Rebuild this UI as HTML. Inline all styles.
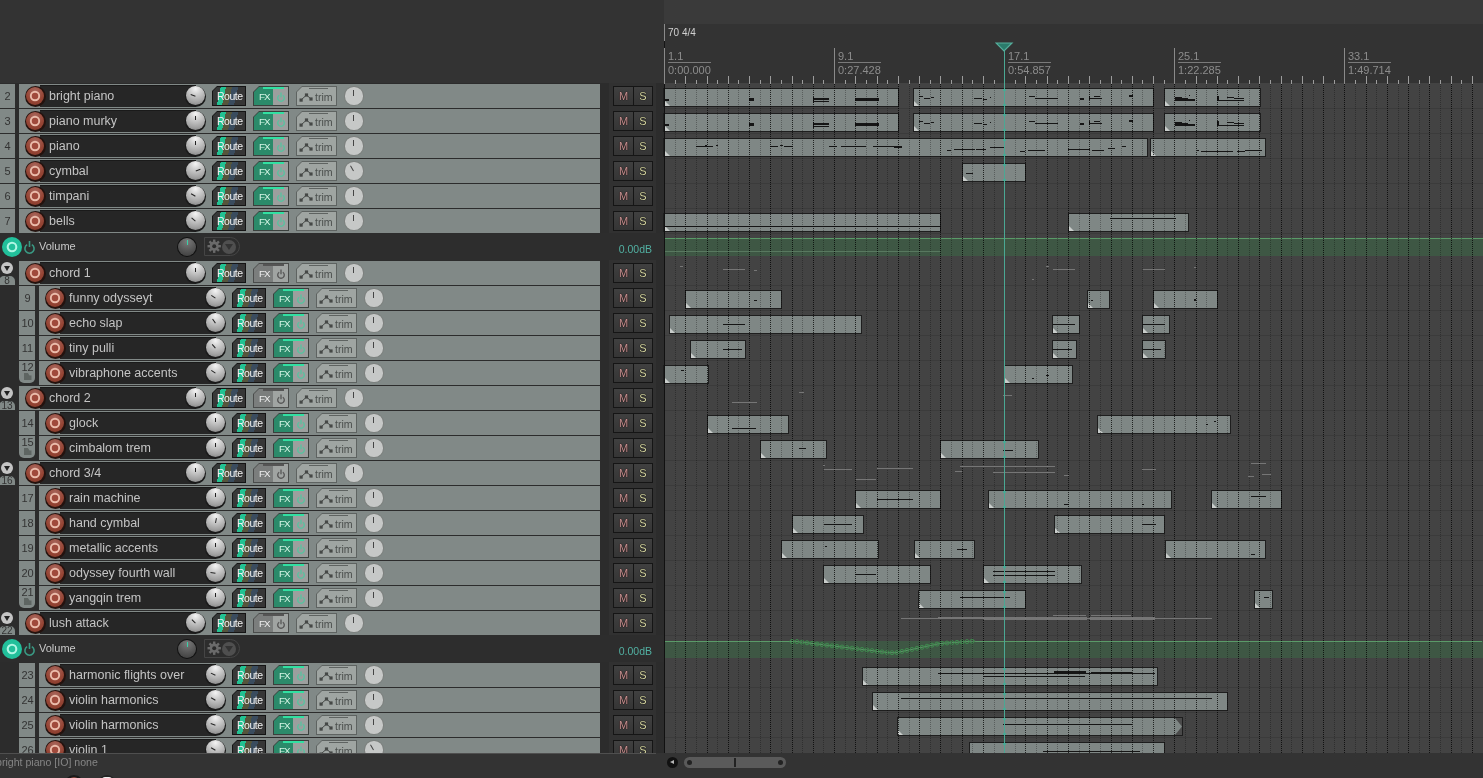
<!DOCTYPE html><html><head><meta charset="utf-8"><style>
*{margin:0;padding:0;box-sizing:border-box}
body{width:1483px;height:778px;overflow:hidden;background:#333;font-family:"Liberation Sans",sans-serif;position:relative}
div{position:absolute}
.t{white-space:nowrap;line-height:1;will-change:transform}
</style></head><body>
<div style="left:664px;top:0;width:819px;height:24px;background:#3a3a3a"></div>
<div style="left:0;top:83px;width:664px;height:670px;background:#2c2c2c"></div>
<div style="left:-1px;top:84px;width:16px;height:24px;background:#818987"></div>
<div style="left:19px;top:84px;width:581px;height:24px;background:#818987"></div>
<div style="left:40px;top:85px;width:156px;height:22px;background:#262626;border-top:1px solid #1a1a1a"></div>
<div style="left:24.5px;top:85.5px;width:21px;height:21px;border-radius:50%;background:#24120e"></div>
<div style="left:26px;top:87px;width:18px;height:18px;border-radius:50%;background:radial-gradient(circle at 50% 25%,#a8685e,#974636 55%,#843828)"></div>
<svg style="position:absolute;left:29px;top:90px" width="12" height="12"><circle cx="6" cy="6" r="4.2" fill="#a04a3c" stroke="#ebbcab" stroke-width="1.9"/></svg>
<div class="t" style="left:49px;top:90.2px;font-size:12.5px;color:#c4c4c4">bright piano</div>
<div style="left:185.0px;top:85.5px;width:21px;height:21px;border-radius:50%;background:#1a1a1a"></div>
<div style="left:186.0px;top:86.2px;width:19px;height:19px;border-radius:50%;background:radial-gradient(circle at 50% 15%,#f4f4f4 0,#cfcfcf 30%,#a4a4a4 70%,#7c7c7c 100%)"></div>
<div style="left:194.85px;top:90.8px;width:1.3px;height:4.6px;background:#222;transform-origin:0.65px 5.2px;transform:rotate(-70deg)"></div>
<div style="left:212px;top:86px;width:34px;height:20px;background:#141414;clip-path:polygon(5px 0,100% 0,100% 100%,0 100%,0 5px)"></div>
<div style="left:213px;top:87px;width:32px;height:18px;background:linear-gradient(102.5deg,#363838 0 7.6px,#22c292 7.6px 12.7px,#55553c 12.7px 18.5px,#3a4c5e 18.5px 24.5px,#363636 24.5px);clip-path:polygon(4px 0,100% 0,100% 100%,0 100%,0 4px)"></div>
<div class="t" style="left:216.5px;top:91.3px;font-size:10.5px;letter-spacing:-0.5px;color:#f2f2f2">Route</div>
<div style="left:253px;top:86px;width:36px;height:20px;background:#3a403d;clip-path:polygon(6px 0,100% 0,100% 100%,0 100%,0 6px)"></div>
<div style="left:254px;top:87px;width:34px;height:18px;background:linear-gradient(90deg,#2b8a6a 0 19px,#9c9f9e 19px);clip-path:polygon(5px 0,100% 0,100% 100%,0 100%,0 5px)"></div>
<div style="left:263px;top:87px;width:21px;height:1.6px;background:#32e0a2"></div>
<div class="t" style="left:259px;top:92.3px;font-size:9.8px;letter-spacing:-1px;color:#d6f6e6">FX</div>
<svg style="position:absolute;left:276px;top:91px" width="10" height="11"><path d="M3.2,4.2 A3.3,3.3 0 1,0 6.8,4.2" fill="none" stroke="#56c4a0" stroke-width="1.3"/><line x1="5" y1="1.5" x2="5" y2="6.2" stroke="#56c4a0" stroke-width="1.3"/></svg>
<div style="left:296px;top:86px;width:41px;height:20px;background:#5e6361;clip-path:polygon(6px 0,100% 0,100% 100%,0 100%,0 6px)"></div>
<div style="left:297px;top:87px;width:39px;height:18px;background:#9fa5a2;clip-path:polygon(5px 0,100% 0,100% 100%,0 100%,0 5px)"></div>
<div style="left:309px;top:87.5px;width:19px;height:1.5px;background:#5e6361"></div>
<svg style="position:absolute;left:299px;top:93px" width="14" height="9"><polyline points="2,7 7.5,2 12,6" fill="none" stroke="#454846" stroke-width="1"/><rect x="0.5" y="5.5" width="3.2" height="3.2" fill="#454846"/><rect x="5.9" y="0.4" width="3.2" height="3.2" fill="#454846"/><rect x="10.4" y="4.4" width="3.2" height="3.2" fill="#454846"/></svg>
<div class="t" style="left:315px;top:92px;font-size:10.6px;color:#4a4e4c">trim</div>
<div style="left:344.3px;top:86.3px;width:19.4px;height:19.4px;border-radius:50%;background:#7c807e"></div>
<div style="left:345.3px;top:87.3px;width:17.4px;height:17.4px;border-radius:50%;background:#c6c8c7"></div>
<div style="left:353.4px;top:90px;width:1px;height:5.5px;background:#444;transform-origin:0.5px 6px;transform:rotate(0deg)"></div>
<div class="t" style="left:-1px;top:90.6px;width:17px;text-align:center;font-size:11px;color:#333">2</div>
<div style="left:609px;top:83px;width:47px;height:25px;background:#313131"></div>
<div style="left:613px;top:86px;width:40px;height:20px;background:#151515"></div>
<div style="left:614px;top:87px;width:19px;height:18px;background:linear-gradient(#404040,#353535)"></div>
<div style="left:634px;top:87px;width:18px;height:18px;background:linear-gradient(#404040,#353535)"></div>
<div class="t" style="left:614px;top:91px;width:19px;text-align:center;font-size:11px;color:#c49090;text-shadow:0 0 1px #1a0a0a,0 0 1px #1a0a0a">M</div>
<div class="t" style="left:634px;top:91px;width:18px;text-align:center;font-size:11px;color:#d4d4a2;text-shadow:0 0 1px #0a0a00,0 0 1px #0a0a00">S</div>
<div style="left:-1px;top:109px;width:16px;height:24px;background:#818987"></div>
<div style="left:19px;top:109px;width:581px;height:24px;background:#818987"></div>
<div style="left:40px;top:110px;width:156px;height:22px;background:#262626;border-top:1px solid #1a1a1a"></div>
<div style="left:24.5px;top:110.5px;width:21px;height:21px;border-radius:50%;background:#24120e"></div>
<div style="left:26px;top:112px;width:18px;height:18px;border-radius:50%;background:radial-gradient(circle at 50% 25%,#a8685e,#974636 55%,#843828)"></div>
<svg style="position:absolute;left:29px;top:115px" width="12" height="12"><circle cx="6" cy="6" r="4.2" fill="#a04a3c" stroke="#ebbcab" stroke-width="1.9"/></svg>
<div class="t" style="left:49px;top:115.2px;font-size:12.5px;color:#c4c4c4">piano murky</div>
<div style="left:185.0px;top:110.5px;width:21px;height:21px;border-radius:50%;background:#1a1a1a"></div>
<div style="left:186.0px;top:111.2px;width:19px;height:19px;border-radius:50%;background:radial-gradient(circle at 50% 15%,#f4f4f4 0,#cfcfcf 30%,#a4a4a4 70%,#7c7c7c 100%)"></div>
<div style="left:194.85px;top:115.8px;width:1.3px;height:4.6px;background:#222;transform-origin:0.65px 5.2px;transform:rotate(0deg)"></div>
<div style="left:212px;top:111px;width:34px;height:20px;background:#141414;clip-path:polygon(5px 0,100% 0,100% 100%,0 100%,0 5px)"></div>
<div style="left:213px;top:112px;width:32px;height:18px;background:linear-gradient(102.5deg,#363838 0 7.6px,#22c292 7.6px 12.7px,#55553c 12.7px 18.5px,#3a4c5e 18.5px 24.5px,#363636 24.5px);clip-path:polygon(4px 0,100% 0,100% 100%,0 100%,0 4px)"></div>
<div class="t" style="left:216.5px;top:116.3px;font-size:10.5px;letter-spacing:-0.5px;color:#f2f2f2">Route</div>
<div style="left:253px;top:111px;width:36px;height:20px;background:#3a403d;clip-path:polygon(6px 0,100% 0,100% 100%,0 100%,0 6px)"></div>
<div style="left:254px;top:112px;width:34px;height:18px;background:linear-gradient(90deg,#2b8a6a 0 19px,#9c9f9e 19px);clip-path:polygon(5px 0,100% 0,100% 100%,0 100%,0 5px)"></div>
<div style="left:263px;top:112px;width:21px;height:1.6px;background:#32e0a2"></div>
<div class="t" style="left:259px;top:117.3px;font-size:9.8px;letter-spacing:-1px;color:#d6f6e6">FX</div>
<svg style="position:absolute;left:276px;top:116px" width="10" height="11"><path d="M3.2,4.2 A3.3,3.3 0 1,0 6.8,4.2" fill="none" stroke="#56c4a0" stroke-width="1.3"/><line x1="5" y1="1.5" x2="5" y2="6.2" stroke="#56c4a0" stroke-width="1.3"/></svg>
<div style="left:296px;top:111px;width:41px;height:20px;background:#5e6361;clip-path:polygon(6px 0,100% 0,100% 100%,0 100%,0 6px)"></div>
<div style="left:297px;top:112px;width:39px;height:18px;background:#9fa5a2;clip-path:polygon(5px 0,100% 0,100% 100%,0 100%,0 5px)"></div>
<div style="left:309px;top:112.5px;width:19px;height:1.5px;background:#5e6361"></div>
<svg style="position:absolute;left:299px;top:118px" width="14" height="9"><polyline points="2,7 7.5,2 12,6" fill="none" stroke="#454846" stroke-width="1"/><rect x="0.5" y="5.5" width="3.2" height="3.2" fill="#454846"/><rect x="5.9" y="0.4" width="3.2" height="3.2" fill="#454846"/><rect x="10.4" y="4.4" width="3.2" height="3.2" fill="#454846"/></svg>
<div class="t" style="left:315px;top:117px;font-size:10.6px;color:#4a4e4c">trim</div>
<div style="left:344.3px;top:111.3px;width:19.4px;height:19.4px;border-radius:50%;background:#7c807e"></div>
<div style="left:345.3px;top:112.3px;width:17.4px;height:17.4px;border-radius:50%;background:#c6c8c7"></div>
<div style="left:353.4px;top:115px;width:1px;height:5.5px;background:#444;transform-origin:0.5px 6px;transform:rotate(0deg)"></div>
<div class="t" style="left:-1px;top:115.6px;width:17px;text-align:center;font-size:11px;color:#333">3</div>
<div style="left:609px;top:108px;width:47px;height:25px;background:#313131"></div>
<div style="left:613px;top:111px;width:40px;height:20px;background:#151515"></div>
<div style="left:614px;top:112px;width:19px;height:18px;background:linear-gradient(#404040,#353535)"></div>
<div style="left:634px;top:112px;width:18px;height:18px;background:linear-gradient(#404040,#353535)"></div>
<div class="t" style="left:614px;top:116px;width:19px;text-align:center;font-size:11px;color:#c49090;text-shadow:0 0 1px #1a0a0a,0 0 1px #1a0a0a">M</div>
<div class="t" style="left:634px;top:116px;width:18px;text-align:center;font-size:11px;color:#d4d4a2;text-shadow:0 0 1px #0a0a00,0 0 1px #0a0a00">S</div>
<div style="left:-1px;top:134px;width:16px;height:24px;background:#818987"></div>
<div style="left:19px;top:134px;width:581px;height:24px;background:#818987"></div>
<div style="left:40px;top:135px;width:156px;height:22px;background:#262626;border-top:1px solid #1a1a1a"></div>
<div style="left:24.5px;top:135.5px;width:21px;height:21px;border-radius:50%;background:#24120e"></div>
<div style="left:26px;top:137px;width:18px;height:18px;border-radius:50%;background:radial-gradient(circle at 50% 25%,#a8685e,#974636 55%,#843828)"></div>
<svg style="position:absolute;left:29px;top:140px" width="12" height="12"><circle cx="6" cy="6" r="4.2" fill="#a04a3c" stroke="#ebbcab" stroke-width="1.9"/></svg>
<div class="t" style="left:49px;top:140.2px;font-size:12.5px;color:#c4c4c4">piano</div>
<div style="left:185.0px;top:135.5px;width:21px;height:21px;border-radius:50%;background:#1a1a1a"></div>
<div style="left:186.0px;top:136.2px;width:19px;height:19px;border-radius:50%;background:radial-gradient(circle at 50% 15%,#f4f4f4 0,#cfcfcf 30%,#a4a4a4 70%,#7c7c7c 100%)"></div>
<div style="left:194.85px;top:140.8px;width:1.3px;height:4.6px;background:#222;transform-origin:0.65px 5.2px;transform:rotate(0deg)"></div>
<div style="left:212px;top:136px;width:34px;height:20px;background:#141414;clip-path:polygon(5px 0,100% 0,100% 100%,0 100%,0 5px)"></div>
<div style="left:213px;top:137px;width:32px;height:18px;background:linear-gradient(102.5deg,#363838 0 7.6px,#22c292 7.6px 12.7px,#55553c 12.7px 18.5px,#3a4c5e 18.5px 24.5px,#363636 24.5px);clip-path:polygon(4px 0,100% 0,100% 100%,0 100%,0 4px)"></div>
<div class="t" style="left:216.5px;top:141.3px;font-size:10.5px;letter-spacing:-0.5px;color:#f2f2f2">Route</div>
<div style="left:253px;top:136px;width:36px;height:20px;background:#3a403d;clip-path:polygon(6px 0,100% 0,100% 100%,0 100%,0 6px)"></div>
<div style="left:254px;top:137px;width:34px;height:18px;background:linear-gradient(90deg,#2b8a6a 0 19px,#9c9f9e 19px);clip-path:polygon(5px 0,100% 0,100% 100%,0 100%,0 5px)"></div>
<div style="left:263px;top:137px;width:21px;height:1.6px;background:#32e0a2"></div>
<div class="t" style="left:259px;top:142.3px;font-size:9.8px;letter-spacing:-1px;color:#d6f6e6">FX</div>
<svg style="position:absolute;left:276px;top:141px" width="10" height="11"><path d="M3.2,4.2 A3.3,3.3 0 1,0 6.8,4.2" fill="none" stroke="#56c4a0" stroke-width="1.3"/><line x1="5" y1="1.5" x2="5" y2="6.2" stroke="#56c4a0" stroke-width="1.3"/></svg>
<div style="left:296px;top:136px;width:41px;height:20px;background:#5e6361;clip-path:polygon(6px 0,100% 0,100% 100%,0 100%,0 6px)"></div>
<div style="left:297px;top:137px;width:39px;height:18px;background:#9fa5a2;clip-path:polygon(5px 0,100% 0,100% 100%,0 100%,0 5px)"></div>
<div style="left:309px;top:137.5px;width:19px;height:1.5px;background:#5e6361"></div>
<svg style="position:absolute;left:299px;top:143px" width="14" height="9"><polyline points="2,7 7.5,2 12,6" fill="none" stroke="#454846" stroke-width="1"/><rect x="0.5" y="5.5" width="3.2" height="3.2" fill="#454846"/><rect x="5.9" y="0.4" width="3.2" height="3.2" fill="#454846"/><rect x="10.4" y="4.4" width="3.2" height="3.2" fill="#454846"/></svg>
<div class="t" style="left:315px;top:142px;font-size:10.6px;color:#4a4e4c">trim</div>
<div style="left:344.3px;top:136.3px;width:19.4px;height:19.4px;border-radius:50%;background:#7c807e"></div>
<div style="left:345.3px;top:137.3px;width:17.4px;height:17.4px;border-radius:50%;background:#c6c8c7"></div>
<div style="left:353.4px;top:140px;width:1px;height:5.5px;background:#444;transform-origin:0.5px 6px;transform:rotate(0deg)"></div>
<div class="t" style="left:-1px;top:140.6px;width:17px;text-align:center;font-size:11px;color:#333">4</div>
<div style="left:609px;top:133px;width:47px;height:25px;background:#313131"></div>
<div style="left:613px;top:136px;width:40px;height:20px;background:#151515"></div>
<div style="left:614px;top:137px;width:19px;height:18px;background:linear-gradient(#404040,#353535)"></div>
<div style="left:634px;top:137px;width:18px;height:18px;background:linear-gradient(#404040,#353535)"></div>
<div class="t" style="left:614px;top:141px;width:19px;text-align:center;font-size:11px;color:#c49090;text-shadow:0 0 1px #1a0a0a,0 0 1px #1a0a0a">M</div>
<div class="t" style="left:634px;top:141px;width:18px;text-align:center;font-size:11px;color:#d4d4a2;text-shadow:0 0 1px #0a0a00,0 0 1px #0a0a00">S</div>
<div style="left:-1px;top:159px;width:16px;height:24px;background:#818987"></div>
<div style="left:19px;top:159px;width:581px;height:24px;background:#818987"></div>
<div style="left:40px;top:160px;width:156px;height:22px;background:#262626;border-top:1px solid #1a1a1a"></div>
<div style="left:24.5px;top:160.5px;width:21px;height:21px;border-radius:50%;background:#24120e"></div>
<div style="left:26px;top:162px;width:18px;height:18px;border-radius:50%;background:radial-gradient(circle at 50% 25%,#a8685e,#974636 55%,#843828)"></div>
<svg style="position:absolute;left:29px;top:165px" width="12" height="12"><circle cx="6" cy="6" r="4.2" fill="#a04a3c" stroke="#ebbcab" stroke-width="1.9"/></svg>
<div class="t" style="left:49px;top:165.2px;font-size:12.5px;color:#c4c4c4">cymbal</div>
<div style="left:185.0px;top:160.5px;width:21px;height:21px;border-radius:50%;background:#1a1a1a"></div>
<div style="left:186.0px;top:161.2px;width:19px;height:19px;border-radius:50%;background:radial-gradient(circle at 50% 15%,#f4f4f4 0,#cfcfcf 30%,#a4a4a4 70%,#7c7c7c 100%)"></div>
<div style="left:194.85px;top:165.8px;width:1.3px;height:4.6px;background:#222;transform-origin:0.65px 5.2px;transform:rotate(70deg)"></div>
<div style="left:212px;top:161px;width:34px;height:20px;background:#141414;clip-path:polygon(5px 0,100% 0,100% 100%,0 100%,0 5px)"></div>
<div style="left:213px;top:162px;width:32px;height:18px;background:linear-gradient(102.5deg,#363838 0 7.6px,#22c292 7.6px 12.7px,#55553c 12.7px 18.5px,#3a4c5e 18.5px 24.5px,#363636 24.5px);clip-path:polygon(4px 0,100% 0,100% 100%,0 100%,0 4px)"></div>
<div class="t" style="left:216.5px;top:166.3px;font-size:10.5px;letter-spacing:-0.5px;color:#f2f2f2">Route</div>
<div style="left:253px;top:161px;width:36px;height:20px;background:#3a403d;clip-path:polygon(6px 0,100% 0,100% 100%,0 100%,0 6px)"></div>
<div style="left:254px;top:162px;width:34px;height:18px;background:linear-gradient(90deg,#2b8a6a 0 19px,#9c9f9e 19px);clip-path:polygon(5px 0,100% 0,100% 100%,0 100%,0 5px)"></div>
<div style="left:263px;top:162px;width:21px;height:1.6px;background:#32e0a2"></div>
<div class="t" style="left:259px;top:167.3px;font-size:9.8px;letter-spacing:-1px;color:#d6f6e6">FX</div>
<svg style="position:absolute;left:276px;top:166px" width="10" height="11"><path d="M3.2,4.2 A3.3,3.3 0 1,0 6.8,4.2" fill="none" stroke="#56c4a0" stroke-width="1.3"/><line x1="5" y1="1.5" x2="5" y2="6.2" stroke="#56c4a0" stroke-width="1.3"/></svg>
<div style="left:296px;top:161px;width:41px;height:20px;background:#5e6361;clip-path:polygon(6px 0,100% 0,100% 100%,0 100%,0 6px)"></div>
<div style="left:297px;top:162px;width:39px;height:18px;background:#9fa5a2;clip-path:polygon(5px 0,100% 0,100% 100%,0 100%,0 5px)"></div>
<div style="left:309px;top:162.5px;width:19px;height:1.5px;background:#5e6361"></div>
<svg style="position:absolute;left:299px;top:168px" width="14" height="9"><polyline points="2,7 7.5,2 12,6" fill="none" stroke="#454846" stroke-width="1"/><rect x="0.5" y="5.5" width="3.2" height="3.2" fill="#454846"/><rect x="5.9" y="0.4" width="3.2" height="3.2" fill="#454846"/><rect x="10.4" y="4.4" width="3.2" height="3.2" fill="#454846"/></svg>
<div class="t" style="left:315px;top:167px;font-size:10.6px;color:#4a4e4c">trim</div>
<div style="left:344.3px;top:161.3px;width:19.4px;height:19.4px;border-radius:50%;background:#7c807e"></div>
<div style="left:345.3px;top:162.3px;width:17.4px;height:17.4px;border-radius:50%;background:#c6c8c7"></div>
<div style="left:353.4px;top:165px;width:1px;height:5.5px;background:#444;transform-origin:0.5px 6px;transform:rotate(-30deg)"></div>
<div class="t" style="left:-1px;top:165.6px;width:17px;text-align:center;font-size:11px;color:#333">5</div>
<div style="left:609px;top:158px;width:47px;height:25px;background:#313131"></div>
<div style="left:613px;top:161px;width:40px;height:20px;background:#151515"></div>
<div style="left:614px;top:162px;width:19px;height:18px;background:linear-gradient(#404040,#353535)"></div>
<div style="left:634px;top:162px;width:18px;height:18px;background:linear-gradient(#404040,#353535)"></div>
<div class="t" style="left:614px;top:166px;width:19px;text-align:center;font-size:11px;color:#c49090;text-shadow:0 0 1px #1a0a0a,0 0 1px #1a0a0a">M</div>
<div class="t" style="left:634px;top:166px;width:18px;text-align:center;font-size:11px;color:#d4d4a2;text-shadow:0 0 1px #0a0a00,0 0 1px #0a0a00">S</div>
<div style="left:-1px;top:184px;width:16px;height:24px;background:#818987"></div>
<div style="left:19px;top:184px;width:581px;height:24px;background:#818987"></div>
<div style="left:40px;top:185px;width:156px;height:22px;background:#262626;border-top:1px solid #1a1a1a"></div>
<div style="left:24.5px;top:185.5px;width:21px;height:21px;border-radius:50%;background:#24120e"></div>
<div style="left:26px;top:187px;width:18px;height:18px;border-radius:50%;background:radial-gradient(circle at 50% 25%,#a8685e,#974636 55%,#843828)"></div>
<svg style="position:absolute;left:29px;top:190px" width="12" height="12"><circle cx="6" cy="6" r="4.2" fill="#a04a3c" stroke="#ebbcab" stroke-width="1.9"/></svg>
<div class="t" style="left:49px;top:190.2px;font-size:12.5px;color:#c4c4c4">timpani</div>
<div style="left:185.0px;top:185.5px;width:21px;height:21px;border-radius:50%;background:#1a1a1a"></div>
<div style="left:186.0px;top:186.2px;width:19px;height:19px;border-radius:50%;background:radial-gradient(circle at 50% 15%,#f4f4f4 0,#cfcfcf 30%,#a4a4a4 70%,#7c7c7c 100%)"></div>
<div style="left:194.85px;top:190.8px;width:1.3px;height:4.6px;background:#222;transform-origin:0.65px 5.2px;transform:rotate(-60deg)"></div>
<div style="left:212px;top:186px;width:34px;height:20px;background:#141414;clip-path:polygon(5px 0,100% 0,100% 100%,0 100%,0 5px)"></div>
<div style="left:213px;top:187px;width:32px;height:18px;background:linear-gradient(102.5deg,#363838 0 7.6px,#22c292 7.6px 12.7px,#55553c 12.7px 18.5px,#3a4c5e 18.5px 24.5px,#363636 24.5px);clip-path:polygon(4px 0,100% 0,100% 100%,0 100%,0 4px)"></div>
<div class="t" style="left:216.5px;top:191.3px;font-size:10.5px;letter-spacing:-0.5px;color:#f2f2f2">Route</div>
<div style="left:253px;top:186px;width:36px;height:20px;background:#3a403d;clip-path:polygon(6px 0,100% 0,100% 100%,0 100%,0 6px)"></div>
<div style="left:254px;top:187px;width:34px;height:18px;background:linear-gradient(90deg,#2b8a6a 0 19px,#9c9f9e 19px);clip-path:polygon(5px 0,100% 0,100% 100%,0 100%,0 5px)"></div>
<div style="left:263px;top:187px;width:21px;height:1.6px;background:#32e0a2"></div>
<div class="t" style="left:259px;top:192.3px;font-size:9.8px;letter-spacing:-1px;color:#d6f6e6">FX</div>
<svg style="position:absolute;left:276px;top:191px" width="10" height="11"><path d="M3.2,4.2 A3.3,3.3 0 1,0 6.8,4.2" fill="none" stroke="#56c4a0" stroke-width="1.3"/><line x1="5" y1="1.5" x2="5" y2="6.2" stroke="#56c4a0" stroke-width="1.3"/></svg>
<div style="left:296px;top:186px;width:41px;height:20px;background:#5e6361;clip-path:polygon(6px 0,100% 0,100% 100%,0 100%,0 6px)"></div>
<div style="left:297px;top:187px;width:39px;height:18px;background:#9fa5a2;clip-path:polygon(5px 0,100% 0,100% 100%,0 100%,0 5px)"></div>
<div style="left:309px;top:187.5px;width:19px;height:1.5px;background:#5e6361"></div>
<svg style="position:absolute;left:299px;top:193px" width="14" height="9"><polyline points="2,7 7.5,2 12,6" fill="none" stroke="#454846" stroke-width="1"/><rect x="0.5" y="5.5" width="3.2" height="3.2" fill="#454846"/><rect x="5.9" y="0.4" width="3.2" height="3.2" fill="#454846"/><rect x="10.4" y="4.4" width="3.2" height="3.2" fill="#454846"/></svg>
<div class="t" style="left:315px;top:192px;font-size:10.6px;color:#4a4e4c">trim</div>
<div style="left:344.3px;top:186.3px;width:19.4px;height:19.4px;border-radius:50%;background:#7c807e"></div>
<div style="left:345.3px;top:187.3px;width:17.4px;height:17.4px;border-radius:50%;background:#c6c8c7"></div>
<div style="left:353.4px;top:190px;width:1px;height:5.5px;background:#444;transform-origin:0.5px 6px;transform:rotate(0deg)"></div>
<div class="t" style="left:-1px;top:190.6px;width:17px;text-align:center;font-size:11px;color:#333">6</div>
<div style="left:609px;top:183px;width:47px;height:25px;background:#313131"></div>
<div style="left:613px;top:186px;width:40px;height:20px;background:#151515"></div>
<div style="left:614px;top:187px;width:19px;height:18px;background:linear-gradient(#404040,#353535)"></div>
<div style="left:634px;top:187px;width:18px;height:18px;background:linear-gradient(#404040,#353535)"></div>
<div class="t" style="left:614px;top:191px;width:19px;text-align:center;font-size:11px;color:#c49090;text-shadow:0 0 1px #1a0a0a,0 0 1px #1a0a0a">M</div>
<div class="t" style="left:634px;top:191px;width:18px;text-align:center;font-size:11px;color:#d4d4a2;text-shadow:0 0 1px #0a0a00,0 0 1px #0a0a00">S</div>
<div style="left:-1px;top:209px;width:16px;height:24px;background:#818987"></div>
<div style="left:19px;top:209px;width:581px;height:24px;background:#818987"></div>
<div style="left:40px;top:210px;width:156px;height:22px;background:#262626;border-top:1px solid #1a1a1a"></div>
<div style="left:24.5px;top:210.5px;width:21px;height:21px;border-radius:50%;background:#24120e"></div>
<div style="left:26px;top:212px;width:18px;height:18px;border-radius:50%;background:radial-gradient(circle at 50% 25%,#a8685e,#974636 55%,#843828)"></div>
<svg style="position:absolute;left:29px;top:215px" width="12" height="12"><circle cx="6" cy="6" r="4.2" fill="#a04a3c" stroke="#ebbcab" stroke-width="1.9"/></svg>
<div class="t" style="left:49px;top:215.2px;font-size:12.5px;color:#c4c4c4">bells</div>
<div style="left:185.0px;top:210.5px;width:21px;height:21px;border-radius:50%;background:#1a1a1a"></div>
<div style="left:186.0px;top:211.2px;width:19px;height:19px;border-radius:50%;background:radial-gradient(circle at 50% 15%,#f4f4f4 0,#cfcfcf 30%,#a4a4a4 70%,#7c7c7c 100%)"></div>
<div style="left:194.85px;top:215.8px;width:1.3px;height:4.6px;background:#222;transform-origin:0.65px 5.2px;transform:rotate(-50deg)"></div>
<div style="left:212px;top:211px;width:34px;height:20px;background:#141414;clip-path:polygon(5px 0,100% 0,100% 100%,0 100%,0 5px)"></div>
<div style="left:213px;top:212px;width:32px;height:18px;background:linear-gradient(102.5deg,#363838 0 7.6px,#22c292 7.6px 12.7px,#55553c 12.7px 18.5px,#3a4c5e 18.5px 24.5px,#363636 24.5px);clip-path:polygon(4px 0,100% 0,100% 100%,0 100%,0 4px)"></div>
<div class="t" style="left:216.5px;top:216.3px;font-size:10.5px;letter-spacing:-0.5px;color:#f2f2f2">Route</div>
<div style="left:253px;top:211px;width:36px;height:20px;background:#3a403d;clip-path:polygon(6px 0,100% 0,100% 100%,0 100%,0 6px)"></div>
<div style="left:254px;top:212px;width:34px;height:18px;background:linear-gradient(90deg,#2b8a6a 0 19px,#9c9f9e 19px);clip-path:polygon(5px 0,100% 0,100% 100%,0 100%,0 5px)"></div>
<div style="left:263px;top:212px;width:21px;height:1.6px;background:#32e0a2"></div>
<div class="t" style="left:259px;top:217.3px;font-size:9.8px;letter-spacing:-1px;color:#d6f6e6">FX</div>
<svg style="position:absolute;left:276px;top:216px" width="10" height="11"><path d="M3.2,4.2 A3.3,3.3 0 1,0 6.8,4.2" fill="none" stroke="#56c4a0" stroke-width="1.3"/><line x1="5" y1="1.5" x2="5" y2="6.2" stroke="#56c4a0" stroke-width="1.3"/></svg>
<div style="left:296px;top:211px;width:41px;height:20px;background:#5e6361;clip-path:polygon(6px 0,100% 0,100% 100%,0 100%,0 6px)"></div>
<div style="left:297px;top:212px;width:39px;height:18px;background:#9fa5a2;clip-path:polygon(5px 0,100% 0,100% 100%,0 100%,0 5px)"></div>
<div style="left:309px;top:212.5px;width:19px;height:1.5px;background:#5e6361"></div>
<svg style="position:absolute;left:299px;top:218px" width="14" height="9"><polyline points="2,7 7.5,2 12,6" fill="none" stroke="#454846" stroke-width="1"/><rect x="0.5" y="5.5" width="3.2" height="3.2" fill="#454846"/><rect x="5.9" y="0.4" width="3.2" height="3.2" fill="#454846"/><rect x="10.4" y="4.4" width="3.2" height="3.2" fill="#454846"/></svg>
<div class="t" style="left:315px;top:217px;font-size:10.6px;color:#4a4e4c">trim</div>
<div style="left:344.3px;top:211.3px;width:19.4px;height:19.4px;border-radius:50%;background:#7c807e"></div>
<div style="left:345.3px;top:212.3px;width:17.4px;height:17.4px;border-radius:50%;background:#c6c8c7"></div>
<div style="left:353.4px;top:215px;width:1px;height:5.5px;background:#444;transform-origin:0.5px 6px;transform:rotate(0deg)"></div>
<div class="t" style="left:-1px;top:215.6px;width:17px;text-align:center;font-size:11px;color:#333">7</div>
<div style="left:609px;top:208px;width:47px;height:25px;background:#313131"></div>
<div style="left:613px;top:211px;width:40px;height:20px;background:#151515"></div>
<div style="left:614px;top:212px;width:19px;height:18px;background:linear-gradient(#404040,#353535)"></div>
<div style="left:634px;top:212px;width:18px;height:18px;background:linear-gradient(#404040,#353535)"></div>
<div class="t" style="left:614px;top:216px;width:19px;text-align:center;font-size:11px;color:#c49090;text-shadow:0 0 1px #1a0a0a,0 0 1px #1a0a0a">M</div>
<div class="t" style="left:634px;top:216px;width:18px;text-align:center;font-size:11px;color:#d4d4a2;text-shadow:0 0 1px #0a0a00,0 0 1px #0a0a00">S</div>
<div style="left:19px;top:261px;width:581px;height:24px;background:#818987"></div>
<div style="left:40px;top:262px;width:156px;height:22px;background:#262626;border-top:1px solid #1a1a1a"></div>
<div style="left:24.5px;top:262.5px;width:21px;height:21px;border-radius:50%;background:#24120e"></div>
<div style="left:26px;top:264px;width:18px;height:18px;border-radius:50%;background:radial-gradient(circle at 50% 25%,#a8685e,#974636 55%,#843828)"></div>
<svg style="position:absolute;left:29px;top:267px" width="12" height="12"><circle cx="6" cy="6" r="4.2" fill="#a04a3c" stroke="#ebbcab" stroke-width="1.9"/></svg>
<div class="t" style="left:49px;top:267.2px;font-size:12.5px;color:#c4c4c4">chord 1</div>
<div style="left:185.0px;top:262.5px;width:21px;height:21px;border-radius:50%;background:#1a1a1a"></div>
<div style="left:186.0px;top:263.2px;width:19px;height:19px;border-radius:50%;background:radial-gradient(circle at 50% 15%,#f4f4f4 0,#cfcfcf 30%,#a4a4a4 70%,#7c7c7c 100%)"></div>
<div style="left:194.85px;top:267.8px;width:1.3px;height:4.6px;background:#222;transform-origin:0.65px 5.2px;transform:rotate(0deg)"></div>
<div style="left:212px;top:263px;width:34px;height:20px;background:#141414;clip-path:polygon(5px 0,100% 0,100% 100%,0 100%,0 5px)"></div>
<div style="left:213px;top:264px;width:32px;height:18px;background:linear-gradient(102.5deg,#363838 0 7.6px,#22c292 7.6px 12.7px,#55553c 12.7px 18.5px,#3a4c5e 18.5px 24.5px,#363636 24.5px);clip-path:polygon(4px 0,100% 0,100% 100%,0 100%,0 4px)"></div>
<div class="t" style="left:216.5px;top:268.3px;font-size:10.5px;letter-spacing:-0.5px;color:#f2f2f2">Route</div>
<div style="left:253px;top:263px;width:36px;height:20px;background:#4a4c4b;clip-path:polygon(6px 0,100% 0,100% 100%,0 100%,0 6px)"></div>
<div style="left:254px;top:264px;width:34px;height:18px;background:linear-gradient(90deg,#7b7e7d 0 19px,#a0a4a2 19px);clip-path:polygon(5px 0,100% 0,100% 100%,0 100%,0 5px)"></div>
<div style="left:263px;top:264px;width:21px;height:1.5px;background:#555"></div>
<div class="t" style="left:259px;top:269.3px;font-size:9.8px;letter-spacing:-1px;color:#eee">FX</div>
<svg style="position:absolute;left:276px;top:268px" width="10" height="11"><path d="M3.2,4.2 A3.3,3.3 0 1,0 6.8,4.2" fill="none" stroke="#555" stroke-width="1.3"/><line x1="5" y1="1.5" x2="5" y2="6.2" stroke="#555" stroke-width="1.3"/></svg>
<div style="left:296px;top:263px;width:41px;height:20px;background:#5e6361;clip-path:polygon(6px 0,100% 0,100% 100%,0 100%,0 6px)"></div>
<div style="left:297px;top:264px;width:39px;height:18px;background:#9fa5a2;clip-path:polygon(5px 0,100% 0,100% 100%,0 100%,0 5px)"></div>
<div style="left:309px;top:264.5px;width:19px;height:1.5px;background:#5e6361"></div>
<svg style="position:absolute;left:299px;top:270px" width="14" height="9"><polyline points="2,7 7.5,2 12,6" fill="none" stroke="#454846" stroke-width="1"/><rect x="0.5" y="5.5" width="3.2" height="3.2" fill="#454846"/><rect x="5.9" y="0.4" width="3.2" height="3.2" fill="#454846"/><rect x="10.4" y="4.4" width="3.2" height="3.2" fill="#454846"/></svg>
<div class="t" style="left:315px;top:269px;font-size:10.6px;color:#4a4e4c">trim</div>
<div style="left:344.3px;top:263.3px;width:19.4px;height:19.4px;border-radius:50%;background:#7c807e"></div>
<div style="left:345.3px;top:264.3px;width:17.4px;height:17.4px;border-radius:50%;background:#c6c8c7"></div>
<div style="left:353.4px;top:267px;width:1px;height:5.5px;background:#444;transform-origin:0.5px 6px;transform:rotate(0deg)"></div>
<div style="left:1px;top:262px;width:12px;height:12px;border-radius:50%;background:#c4c4c4"></div>
<div style="left:3.5px;top:265.5px;width:0;height:0;border-left:3.5px solid transparent;border-right:3.5px solid transparent;border-top:5px solid #222"></div>
<div style="left:-1px;top:276px;width:16px;height:9px;background:#818987;border-radius:5px 5px 0 0"></div>
<div class="t" style="left:-1px;top:276px;width:16px;text-align:center;font-size:10px;color:#333">8</div>
<div style="left:609px;top:260px;width:47px;height:25px;background:#313131"></div>
<div style="left:613px;top:263px;width:40px;height:20px;background:#151515"></div>
<div style="left:614px;top:264px;width:19px;height:18px;background:linear-gradient(#404040,#353535)"></div>
<div style="left:634px;top:264px;width:18px;height:18px;background:linear-gradient(#404040,#353535)"></div>
<div class="t" style="left:614px;top:268px;width:19px;text-align:center;font-size:11px;color:#c49090;text-shadow:0 0 1px #1a0a0a,0 0 1px #1a0a0a">M</div>
<div class="t" style="left:634px;top:268px;width:18px;text-align:center;font-size:11px;color:#d4d4a2;text-shadow:0 0 1px #0a0a00,0 0 1px #0a0a00">S</div>
<div style="left:19px;top:286px;width:16px;height:24px;background:#818987"></div>
<div style="left:39px;top:286px;width:561px;height:24px;background:#818987"></div>
<div style="left:60px;top:287px;width:156px;height:22px;background:#262626;border-top:1px solid #1a1a1a"></div>
<div style="left:44.5px;top:287.5px;width:21px;height:21px;border-radius:50%;background:#24120e"></div>
<div style="left:46px;top:289px;width:18px;height:18px;border-radius:50%;background:radial-gradient(circle at 50% 25%,#a8685e,#974636 55%,#843828)"></div>
<svg style="position:absolute;left:49px;top:292px" width="12" height="12"><circle cx="6" cy="6" r="4.2" fill="#a04a3c" stroke="#ebbcab" stroke-width="1.9"/></svg>
<div class="t" style="left:69px;top:292.2px;font-size:12.5px;color:#c4c4c4">funny odysseyt</div>
<div style="left:205.0px;top:287.5px;width:21px;height:21px;border-radius:50%;background:#1a1a1a"></div>
<div style="left:206.0px;top:288.2px;width:19px;height:19px;border-radius:50%;background:radial-gradient(circle at 50% 15%,#f4f4f4 0,#cfcfcf 30%,#a4a4a4 70%,#7c7c7c 100%)"></div>
<div style="left:214.85px;top:292.8px;width:1.3px;height:4.6px;background:#222;transform-origin:0.65px 5.2px;transform:rotate(-55deg)"></div>
<div style="left:232px;top:288px;width:34px;height:20px;background:#141414;clip-path:polygon(5px 0,100% 0,100% 100%,0 100%,0 5px)"></div>
<div style="left:233px;top:289px;width:32px;height:18px;background:linear-gradient(102.5deg,#363838 0 7.6px,#22c292 7.6px 12.7px,#55553c 12.7px 18.5px,#3a4c5e 18.5px 24.5px,#363636 24.5px);clip-path:polygon(4px 0,100% 0,100% 100%,0 100%,0 4px)"></div>
<div class="t" style="left:236.5px;top:293.3px;font-size:10.5px;letter-spacing:-0.5px;color:#f2f2f2">Route</div>
<div style="left:273px;top:288px;width:36px;height:20px;background:#3a403d;clip-path:polygon(6px 0,100% 0,100% 100%,0 100%,0 6px)"></div>
<div style="left:274px;top:289px;width:34px;height:18px;background:linear-gradient(90deg,#2b8a6a 0 19px,#9c9f9e 19px);clip-path:polygon(5px 0,100% 0,100% 100%,0 100%,0 5px)"></div>
<div style="left:283px;top:289px;width:21px;height:1.6px;background:#32e0a2"></div>
<div class="t" style="left:279px;top:294.3px;font-size:9.8px;letter-spacing:-1px;color:#d6f6e6">FX</div>
<svg style="position:absolute;left:296px;top:293px" width="10" height="11"><path d="M3.2,4.2 A3.3,3.3 0 1,0 6.8,4.2" fill="none" stroke="#56c4a0" stroke-width="1.3"/><line x1="5" y1="1.5" x2="5" y2="6.2" stroke="#56c4a0" stroke-width="1.3"/></svg>
<div style="left:316px;top:288px;width:41px;height:20px;background:#5e6361;clip-path:polygon(6px 0,100% 0,100% 100%,0 100%,0 6px)"></div>
<div style="left:317px;top:289px;width:39px;height:18px;background:#9fa5a2;clip-path:polygon(5px 0,100% 0,100% 100%,0 100%,0 5px)"></div>
<div style="left:329px;top:289.5px;width:19px;height:1.5px;background:#5e6361"></div>
<svg style="position:absolute;left:319px;top:295px" width="14" height="9"><polyline points="2,7 7.5,2 12,6" fill="none" stroke="#454846" stroke-width="1"/><rect x="0.5" y="5.5" width="3.2" height="3.2" fill="#454846"/><rect x="5.9" y="0.4" width="3.2" height="3.2" fill="#454846"/><rect x="10.4" y="4.4" width="3.2" height="3.2" fill="#454846"/></svg>
<div class="t" style="left:335px;top:294px;font-size:10.6px;color:#4a4e4c">trim</div>
<div style="left:364.3px;top:288.3px;width:19.4px;height:19.4px;border-radius:50%;background:#7c807e"></div>
<div style="left:365.3px;top:289.3px;width:17.4px;height:17.4px;border-radius:50%;background:#c6c8c7"></div>
<div style="left:373.4px;top:292px;width:1px;height:5.5px;background:#444;transform-origin:0.5px 6px;transform:rotate(0deg)"></div>
<div class="t" style="left:19px;top:292.6px;width:17px;text-align:center;font-size:11px;color:#333">9</div>
<div style="left:609px;top:285px;width:47px;height:25px;background:#313131"></div>
<div style="left:613px;top:288px;width:40px;height:20px;background:#151515"></div>
<div style="left:614px;top:289px;width:19px;height:18px;background:linear-gradient(#404040,#353535)"></div>
<div style="left:634px;top:289px;width:18px;height:18px;background:linear-gradient(#404040,#353535)"></div>
<div class="t" style="left:614px;top:293px;width:19px;text-align:center;font-size:11px;color:#c49090;text-shadow:0 0 1px #1a0a0a,0 0 1px #1a0a0a">M</div>
<div class="t" style="left:634px;top:293px;width:18px;text-align:center;font-size:11px;color:#d4d4a2;text-shadow:0 0 1px #0a0a00,0 0 1px #0a0a00">S</div>
<div style="left:19px;top:311px;width:16px;height:24px;background:#818987"></div>
<div style="left:39px;top:311px;width:561px;height:24px;background:#818987"></div>
<div style="left:60px;top:312px;width:156px;height:22px;background:#262626;border-top:1px solid #1a1a1a"></div>
<div style="left:44.5px;top:312.5px;width:21px;height:21px;border-radius:50%;background:#24120e"></div>
<div style="left:46px;top:314px;width:18px;height:18px;border-radius:50%;background:radial-gradient(circle at 50% 25%,#a8685e,#974636 55%,#843828)"></div>
<svg style="position:absolute;left:49px;top:317px" width="12" height="12"><circle cx="6" cy="6" r="4.2" fill="#a04a3c" stroke="#ebbcab" stroke-width="1.9"/></svg>
<div class="t" style="left:69px;top:317.2px;font-size:12.5px;color:#c4c4c4">echo slap</div>
<div style="left:205.0px;top:312.5px;width:21px;height:21px;border-radius:50%;background:#1a1a1a"></div>
<div style="left:206.0px;top:313.2px;width:19px;height:19px;border-radius:50%;background:radial-gradient(circle at 50% 15%,#f4f4f4 0,#cfcfcf 30%,#a4a4a4 70%,#7c7c7c 100%)"></div>
<div style="left:214.85px;top:317.8px;width:1.3px;height:4.6px;background:#222;transform-origin:0.65px 5.2px;transform:rotate(-35deg)"></div>
<div style="left:232px;top:313px;width:34px;height:20px;background:#141414;clip-path:polygon(5px 0,100% 0,100% 100%,0 100%,0 5px)"></div>
<div style="left:233px;top:314px;width:32px;height:18px;background:linear-gradient(102.5deg,#363838 0 7.6px,#22c292 7.6px 12.7px,#55553c 12.7px 18.5px,#3a4c5e 18.5px 24.5px,#363636 24.5px);clip-path:polygon(4px 0,100% 0,100% 100%,0 100%,0 4px)"></div>
<div class="t" style="left:236.5px;top:318.3px;font-size:10.5px;letter-spacing:-0.5px;color:#f2f2f2">Route</div>
<div style="left:273px;top:313px;width:36px;height:20px;background:#3a403d;clip-path:polygon(6px 0,100% 0,100% 100%,0 100%,0 6px)"></div>
<div style="left:274px;top:314px;width:34px;height:18px;background:linear-gradient(90deg,#2b8a6a 0 19px,#9c9f9e 19px);clip-path:polygon(5px 0,100% 0,100% 100%,0 100%,0 5px)"></div>
<div style="left:283px;top:314px;width:21px;height:1.6px;background:#32e0a2"></div>
<div class="t" style="left:279px;top:319.3px;font-size:9.8px;letter-spacing:-1px;color:#d6f6e6">FX</div>
<svg style="position:absolute;left:296px;top:318px" width="10" height="11"><path d="M3.2,4.2 A3.3,3.3 0 1,0 6.8,4.2" fill="none" stroke="#56c4a0" stroke-width="1.3"/><line x1="5" y1="1.5" x2="5" y2="6.2" stroke="#56c4a0" stroke-width="1.3"/></svg>
<div style="left:316px;top:313px;width:41px;height:20px;background:#5e6361;clip-path:polygon(6px 0,100% 0,100% 100%,0 100%,0 6px)"></div>
<div style="left:317px;top:314px;width:39px;height:18px;background:#9fa5a2;clip-path:polygon(5px 0,100% 0,100% 100%,0 100%,0 5px)"></div>
<div style="left:329px;top:314.5px;width:19px;height:1.5px;background:#5e6361"></div>
<svg style="position:absolute;left:319px;top:320px" width="14" height="9"><polyline points="2,7 7.5,2 12,6" fill="none" stroke="#454846" stroke-width="1"/><rect x="0.5" y="5.5" width="3.2" height="3.2" fill="#454846"/><rect x="5.9" y="0.4" width="3.2" height="3.2" fill="#454846"/><rect x="10.4" y="4.4" width="3.2" height="3.2" fill="#454846"/></svg>
<div class="t" style="left:335px;top:319px;font-size:10.6px;color:#4a4e4c">trim</div>
<div style="left:364.3px;top:313.3px;width:19.4px;height:19.4px;border-radius:50%;background:#7c807e"></div>
<div style="left:365.3px;top:314.3px;width:17.4px;height:17.4px;border-radius:50%;background:#c6c8c7"></div>
<div style="left:373.4px;top:317px;width:1px;height:5.5px;background:#444;transform-origin:0.5px 6px;transform:rotate(0deg)"></div>
<div class="t" style="left:19px;top:317.6px;width:17px;text-align:center;font-size:11px;color:#333">10</div>
<div style="left:609px;top:310px;width:47px;height:25px;background:#313131"></div>
<div style="left:613px;top:313px;width:40px;height:20px;background:#151515"></div>
<div style="left:614px;top:314px;width:19px;height:18px;background:linear-gradient(#404040,#353535)"></div>
<div style="left:634px;top:314px;width:18px;height:18px;background:linear-gradient(#404040,#353535)"></div>
<div class="t" style="left:614px;top:318px;width:19px;text-align:center;font-size:11px;color:#c49090;text-shadow:0 0 1px #1a0a0a,0 0 1px #1a0a0a">M</div>
<div class="t" style="left:634px;top:318px;width:18px;text-align:center;font-size:11px;color:#d4d4a2;text-shadow:0 0 1px #0a0a00,0 0 1px #0a0a00">S</div>
<div style="left:19px;top:336px;width:16px;height:24px;background:#818987"></div>
<div style="left:39px;top:336px;width:561px;height:24px;background:#818987"></div>
<div style="left:60px;top:337px;width:156px;height:22px;background:#262626;border-top:1px solid #1a1a1a"></div>
<div style="left:44.5px;top:337.5px;width:21px;height:21px;border-radius:50%;background:#24120e"></div>
<div style="left:46px;top:339px;width:18px;height:18px;border-radius:50%;background:radial-gradient(circle at 50% 25%,#a8685e,#974636 55%,#843828)"></div>
<svg style="position:absolute;left:49px;top:342px" width="12" height="12"><circle cx="6" cy="6" r="4.2" fill="#a04a3c" stroke="#ebbcab" stroke-width="1.9"/></svg>
<div class="t" style="left:69px;top:342.2px;font-size:12.5px;color:#c4c4c4">tiny pulli</div>
<div style="left:205.0px;top:337.5px;width:21px;height:21px;border-radius:50%;background:#1a1a1a"></div>
<div style="left:206.0px;top:338.2px;width:19px;height:19px;border-radius:50%;background:radial-gradient(circle at 50% 15%,#f4f4f4 0,#cfcfcf 30%,#a4a4a4 70%,#7c7c7c 100%)"></div>
<div style="left:214.85px;top:342.8px;width:1.3px;height:4.6px;background:#222;transform-origin:0.65px 5.2px;transform:rotate(-40deg)"></div>
<div style="left:232px;top:338px;width:34px;height:20px;background:#141414;clip-path:polygon(5px 0,100% 0,100% 100%,0 100%,0 5px)"></div>
<div style="left:233px;top:339px;width:32px;height:18px;background:linear-gradient(102.5deg,#363838 0 7.6px,#22c292 7.6px 12.7px,#55553c 12.7px 18.5px,#3a4c5e 18.5px 24.5px,#363636 24.5px);clip-path:polygon(4px 0,100% 0,100% 100%,0 100%,0 4px)"></div>
<div class="t" style="left:236.5px;top:343.3px;font-size:10.5px;letter-spacing:-0.5px;color:#f2f2f2">Route</div>
<div style="left:273px;top:338px;width:36px;height:20px;background:#3a403d;clip-path:polygon(6px 0,100% 0,100% 100%,0 100%,0 6px)"></div>
<div style="left:274px;top:339px;width:34px;height:18px;background:linear-gradient(90deg,#2b8a6a 0 19px,#9c9f9e 19px);clip-path:polygon(5px 0,100% 0,100% 100%,0 100%,0 5px)"></div>
<div style="left:283px;top:339px;width:21px;height:1.6px;background:#32e0a2"></div>
<div class="t" style="left:279px;top:344.3px;font-size:9.8px;letter-spacing:-1px;color:#d6f6e6">FX</div>
<svg style="position:absolute;left:296px;top:343px" width="10" height="11"><path d="M3.2,4.2 A3.3,3.3 0 1,0 6.8,4.2" fill="none" stroke="#56c4a0" stroke-width="1.3"/><line x1="5" y1="1.5" x2="5" y2="6.2" stroke="#56c4a0" stroke-width="1.3"/></svg>
<div style="left:316px;top:338px;width:41px;height:20px;background:#5e6361;clip-path:polygon(6px 0,100% 0,100% 100%,0 100%,0 6px)"></div>
<div style="left:317px;top:339px;width:39px;height:18px;background:#9fa5a2;clip-path:polygon(5px 0,100% 0,100% 100%,0 100%,0 5px)"></div>
<div style="left:329px;top:339.5px;width:19px;height:1.5px;background:#5e6361"></div>
<svg style="position:absolute;left:319px;top:345px" width="14" height="9"><polyline points="2,7 7.5,2 12,6" fill="none" stroke="#454846" stroke-width="1"/><rect x="0.5" y="5.5" width="3.2" height="3.2" fill="#454846"/><rect x="5.9" y="0.4" width="3.2" height="3.2" fill="#454846"/><rect x="10.4" y="4.4" width="3.2" height="3.2" fill="#454846"/></svg>
<div class="t" style="left:335px;top:344px;font-size:10.6px;color:#4a4e4c">trim</div>
<div style="left:364.3px;top:338.3px;width:19.4px;height:19.4px;border-radius:50%;background:#7c807e"></div>
<div style="left:365.3px;top:339.3px;width:17.4px;height:17.4px;border-radius:50%;background:#c6c8c7"></div>
<div style="left:373.4px;top:342px;width:1px;height:5.5px;background:#444;transform-origin:0.5px 6px;transform:rotate(0deg)"></div>
<div class="t" style="left:19px;top:342.6px;width:17px;text-align:center;font-size:11px;color:#333">11</div>
<div style="left:609px;top:335px;width:47px;height:25px;background:#313131"></div>
<div style="left:613px;top:338px;width:40px;height:20px;background:#151515"></div>
<div style="left:614px;top:339px;width:19px;height:18px;background:linear-gradient(#404040,#353535)"></div>
<div style="left:634px;top:339px;width:18px;height:18px;background:linear-gradient(#404040,#353535)"></div>
<div class="t" style="left:614px;top:343px;width:19px;text-align:center;font-size:11px;color:#c49090;text-shadow:0 0 1px #1a0a0a,0 0 1px #1a0a0a">M</div>
<div class="t" style="left:634px;top:343px;width:18px;text-align:center;font-size:11px;color:#d4d4a2;text-shadow:0 0 1px #0a0a00,0 0 1px #0a0a00">S</div>
<div style="left:39px;top:361px;width:561px;height:24px;background:#818987"></div>
<div style="left:60px;top:362px;width:156px;height:22px;background:#262626;border-top:1px solid #1a1a1a"></div>
<div style="left:44.5px;top:362.5px;width:21px;height:21px;border-radius:50%;background:#24120e"></div>
<div style="left:46px;top:364px;width:18px;height:18px;border-radius:50%;background:radial-gradient(circle at 50% 25%,#a8685e,#974636 55%,#843828)"></div>
<svg style="position:absolute;left:49px;top:367px" width="12" height="12"><circle cx="6" cy="6" r="4.2" fill="#a04a3c" stroke="#ebbcab" stroke-width="1.9"/></svg>
<div class="t" style="left:69px;top:367.2px;font-size:12.5px;color:#c4c4c4">vibraphone accents</div>
<div style="left:205.0px;top:362.5px;width:21px;height:21px;border-radius:50%;background:#1a1a1a"></div>
<div style="left:206.0px;top:363.2px;width:19px;height:19px;border-radius:50%;background:radial-gradient(circle at 50% 15%,#f4f4f4 0,#cfcfcf 30%,#a4a4a4 70%,#7c7c7c 100%)"></div>
<div style="left:214.85px;top:367.8px;width:1.3px;height:4.6px;background:#222;transform-origin:0.65px 5.2px;transform:rotate(-55deg)"></div>
<div style="left:232px;top:363px;width:34px;height:20px;background:#141414;clip-path:polygon(5px 0,100% 0,100% 100%,0 100%,0 5px)"></div>
<div style="left:233px;top:364px;width:32px;height:18px;background:linear-gradient(102.5deg,#363838 0 7.6px,#22c292 7.6px 12.7px,#55553c 12.7px 18.5px,#3a4c5e 18.5px 24.5px,#363636 24.5px);clip-path:polygon(4px 0,100% 0,100% 100%,0 100%,0 4px)"></div>
<div class="t" style="left:236.5px;top:368.3px;font-size:10.5px;letter-spacing:-0.5px;color:#f2f2f2">Route</div>
<div style="left:273px;top:363px;width:36px;height:20px;background:#3a403d;clip-path:polygon(6px 0,100% 0,100% 100%,0 100%,0 6px)"></div>
<div style="left:274px;top:364px;width:34px;height:18px;background:linear-gradient(90deg,#2b8a6a 0 19px,#9c9f9e 19px);clip-path:polygon(5px 0,100% 0,100% 100%,0 100%,0 5px)"></div>
<div style="left:283px;top:364px;width:21px;height:1.6px;background:#32e0a2"></div>
<div class="t" style="left:279px;top:369.3px;font-size:9.8px;letter-spacing:-1px;color:#d6f6e6">FX</div>
<svg style="position:absolute;left:296px;top:368px" width="10" height="11"><path d="M3.2,4.2 A3.3,3.3 0 1,0 6.8,4.2" fill="none" stroke="#56c4a0" stroke-width="1.3"/><line x1="5" y1="1.5" x2="5" y2="6.2" stroke="#56c4a0" stroke-width="1.3"/></svg>
<div style="left:316px;top:363px;width:41px;height:20px;background:#5e6361;clip-path:polygon(6px 0,100% 0,100% 100%,0 100%,0 6px)"></div>
<div style="left:317px;top:364px;width:39px;height:18px;background:#9fa5a2;clip-path:polygon(5px 0,100% 0,100% 100%,0 100%,0 5px)"></div>
<div style="left:329px;top:364.5px;width:19px;height:1.5px;background:#5e6361"></div>
<svg style="position:absolute;left:319px;top:370px" width="14" height="9"><polyline points="2,7 7.5,2 12,6" fill="none" stroke="#454846" stroke-width="1"/><rect x="0.5" y="5.5" width="3.2" height="3.2" fill="#454846"/><rect x="5.9" y="0.4" width="3.2" height="3.2" fill="#454846"/><rect x="10.4" y="4.4" width="3.2" height="3.2" fill="#454846"/></svg>
<div class="t" style="left:335px;top:369px;font-size:10.6px;color:#4a4e4c">trim</div>
<div style="left:364.3px;top:363.3px;width:19.4px;height:19.4px;border-radius:50%;background:#7c807e"></div>
<div style="left:365.3px;top:364.3px;width:17.4px;height:17.4px;border-radius:50%;background:#c6c8c7"></div>
<div style="left:373.4px;top:367px;width:1px;height:5.5px;background:#444;transform-origin:0.5px 6px;transform:rotate(0deg)"></div>
<div style="left:19px;top:361px;width:16px;height:22px;background:#818987;border-radius:0 0 5px 5px"></div>
<div class="t" style="left:19px;top:362px;width:17px;text-align:center;font-size:11px;color:#333">12</div>
<div style="left:23.5px;top:373px;width:8px;height:7px;background:#5e6562;clip-path:polygon(0 0,55% 0,75% 35%,100% 35%,100% 100%,0 100%)"></div>
<div style="left:609px;top:360px;width:47px;height:25px;background:#313131"></div>
<div style="left:613px;top:363px;width:40px;height:20px;background:#151515"></div>
<div style="left:614px;top:364px;width:19px;height:18px;background:linear-gradient(#404040,#353535)"></div>
<div style="left:634px;top:364px;width:18px;height:18px;background:linear-gradient(#404040,#353535)"></div>
<div class="t" style="left:614px;top:368px;width:19px;text-align:center;font-size:11px;color:#c49090;text-shadow:0 0 1px #1a0a0a,0 0 1px #1a0a0a">M</div>
<div class="t" style="left:634px;top:368px;width:18px;text-align:center;font-size:11px;color:#d4d4a2;text-shadow:0 0 1px #0a0a00,0 0 1px #0a0a00">S</div>
<div style="left:19px;top:386px;width:581px;height:24px;background:#818987"></div>
<div style="left:40px;top:387px;width:156px;height:22px;background:#262626;border-top:1px solid #1a1a1a"></div>
<div style="left:24.5px;top:387.5px;width:21px;height:21px;border-radius:50%;background:#24120e"></div>
<div style="left:26px;top:389px;width:18px;height:18px;border-radius:50%;background:radial-gradient(circle at 50% 25%,#a8685e,#974636 55%,#843828)"></div>
<svg style="position:absolute;left:29px;top:392px" width="12" height="12"><circle cx="6" cy="6" r="4.2" fill="#a04a3c" stroke="#ebbcab" stroke-width="1.9"/></svg>
<div class="t" style="left:49px;top:392.2px;font-size:12.5px;color:#c4c4c4">chord 2</div>
<div style="left:185.0px;top:387.5px;width:21px;height:21px;border-radius:50%;background:#1a1a1a"></div>
<div style="left:186.0px;top:388.2px;width:19px;height:19px;border-radius:50%;background:radial-gradient(circle at 50% 15%,#f4f4f4 0,#cfcfcf 30%,#a4a4a4 70%,#7c7c7c 100%)"></div>
<div style="left:194.85px;top:392.8px;width:1.3px;height:4.6px;background:#222;transform-origin:0.65px 5.2px;transform:rotate(0deg)"></div>
<div style="left:212px;top:388px;width:34px;height:20px;background:#141414;clip-path:polygon(5px 0,100% 0,100% 100%,0 100%,0 5px)"></div>
<div style="left:213px;top:389px;width:32px;height:18px;background:linear-gradient(102.5deg,#363838 0 7.6px,#22c292 7.6px 12.7px,#55553c 12.7px 18.5px,#3a4c5e 18.5px 24.5px,#363636 24.5px);clip-path:polygon(4px 0,100% 0,100% 100%,0 100%,0 4px)"></div>
<div class="t" style="left:216.5px;top:393.3px;font-size:10.5px;letter-spacing:-0.5px;color:#f2f2f2">Route</div>
<div style="left:253px;top:388px;width:36px;height:20px;background:#4a4c4b;clip-path:polygon(6px 0,100% 0,100% 100%,0 100%,0 6px)"></div>
<div style="left:254px;top:389px;width:34px;height:18px;background:linear-gradient(90deg,#7b7e7d 0 19px,#a0a4a2 19px);clip-path:polygon(5px 0,100% 0,100% 100%,0 100%,0 5px)"></div>
<div style="left:263px;top:389px;width:21px;height:1.5px;background:#555"></div>
<div class="t" style="left:259px;top:394.3px;font-size:9.8px;letter-spacing:-1px;color:#eee">FX</div>
<svg style="position:absolute;left:276px;top:393px" width="10" height="11"><path d="M3.2,4.2 A3.3,3.3 0 1,0 6.8,4.2" fill="none" stroke="#555" stroke-width="1.3"/><line x1="5" y1="1.5" x2="5" y2="6.2" stroke="#555" stroke-width="1.3"/></svg>
<div style="left:296px;top:388px;width:41px;height:20px;background:#5e6361;clip-path:polygon(6px 0,100% 0,100% 100%,0 100%,0 6px)"></div>
<div style="left:297px;top:389px;width:39px;height:18px;background:#9fa5a2;clip-path:polygon(5px 0,100% 0,100% 100%,0 100%,0 5px)"></div>
<div style="left:309px;top:389.5px;width:19px;height:1.5px;background:#5e6361"></div>
<svg style="position:absolute;left:299px;top:395px" width="14" height="9"><polyline points="2,7 7.5,2 12,6" fill="none" stroke="#454846" stroke-width="1"/><rect x="0.5" y="5.5" width="3.2" height="3.2" fill="#454846"/><rect x="5.9" y="0.4" width="3.2" height="3.2" fill="#454846"/><rect x="10.4" y="4.4" width="3.2" height="3.2" fill="#454846"/></svg>
<div class="t" style="left:315px;top:394px;font-size:10.6px;color:#4a4e4c">trim</div>
<div style="left:344.3px;top:388.3px;width:19.4px;height:19.4px;border-radius:50%;background:#7c807e"></div>
<div style="left:345.3px;top:389.3px;width:17.4px;height:17.4px;border-radius:50%;background:#c6c8c7"></div>
<div style="left:353.4px;top:392px;width:1px;height:5.5px;background:#444;transform-origin:0.5px 6px;transform:rotate(0deg)"></div>
<div style="left:1px;top:387px;width:12px;height:12px;border-radius:50%;background:#c4c4c4"></div>
<div style="left:3.5px;top:390.5px;width:0;height:0;border-left:3.5px solid transparent;border-right:3.5px solid transparent;border-top:5px solid #222"></div>
<div style="left:-1px;top:401px;width:16px;height:9px;background:#818987;border-radius:5px 5px 0 0"></div>
<div class="t" style="left:-1px;top:401px;width:16px;text-align:center;font-size:10px;color:#333">13</div>
<div style="left:609px;top:385px;width:47px;height:25px;background:#313131"></div>
<div style="left:613px;top:388px;width:40px;height:20px;background:#151515"></div>
<div style="left:614px;top:389px;width:19px;height:18px;background:linear-gradient(#404040,#353535)"></div>
<div style="left:634px;top:389px;width:18px;height:18px;background:linear-gradient(#404040,#353535)"></div>
<div class="t" style="left:614px;top:393px;width:19px;text-align:center;font-size:11px;color:#c49090;text-shadow:0 0 1px #1a0a0a,0 0 1px #1a0a0a">M</div>
<div class="t" style="left:634px;top:393px;width:18px;text-align:center;font-size:11px;color:#d4d4a2;text-shadow:0 0 1px #0a0a00,0 0 1px #0a0a00">S</div>
<div style="left:19px;top:411px;width:16px;height:24px;background:#818987"></div>
<div style="left:39px;top:411px;width:561px;height:24px;background:#818987"></div>
<div style="left:60px;top:412px;width:156px;height:22px;background:#262626;border-top:1px solid #1a1a1a"></div>
<div style="left:44.5px;top:412.5px;width:21px;height:21px;border-radius:50%;background:#24120e"></div>
<div style="left:46px;top:414px;width:18px;height:18px;border-radius:50%;background:radial-gradient(circle at 50% 25%,#a8685e,#974636 55%,#843828)"></div>
<svg style="position:absolute;left:49px;top:417px" width="12" height="12"><circle cx="6" cy="6" r="4.2" fill="#a04a3c" stroke="#ebbcab" stroke-width="1.9"/></svg>
<div class="t" style="left:69px;top:417.2px;font-size:12.5px;color:#c4c4c4">glock</div>
<div style="left:205.0px;top:412.5px;width:21px;height:21px;border-radius:50%;background:#1a1a1a"></div>
<div style="left:206.0px;top:413.2px;width:19px;height:19px;border-radius:50%;background:radial-gradient(circle at 50% 15%,#f4f4f4 0,#cfcfcf 30%,#a4a4a4 70%,#7c7c7c 100%)"></div>
<div style="left:214.85px;top:417.8px;width:1.3px;height:4.6px;background:#222;transform-origin:0.65px 5.2px;transform:rotate(0deg)"></div>
<div style="left:232px;top:413px;width:34px;height:20px;background:#141414;clip-path:polygon(5px 0,100% 0,100% 100%,0 100%,0 5px)"></div>
<div style="left:233px;top:414px;width:32px;height:18px;background:linear-gradient(102.5deg,#363838 0 7.6px,#22c292 7.6px 12.7px,#55553c 12.7px 18.5px,#3a4c5e 18.5px 24.5px,#363636 24.5px);clip-path:polygon(4px 0,100% 0,100% 100%,0 100%,0 4px)"></div>
<div class="t" style="left:236.5px;top:418.3px;font-size:10.5px;letter-spacing:-0.5px;color:#f2f2f2">Route</div>
<div style="left:273px;top:413px;width:36px;height:20px;background:#3a403d;clip-path:polygon(6px 0,100% 0,100% 100%,0 100%,0 6px)"></div>
<div style="left:274px;top:414px;width:34px;height:18px;background:linear-gradient(90deg,#2b8a6a 0 19px,#9c9f9e 19px);clip-path:polygon(5px 0,100% 0,100% 100%,0 100%,0 5px)"></div>
<div style="left:283px;top:414px;width:21px;height:1.6px;background:#32e0a2"></div>
<div class="t" style="left:279px;top:419.3px;font-size:9.8px;letter-spacing:-1px;color:#d6f6e6">FX</div>
<svg style="position:absolute;left:296px;top:418px" width="10" height="11"><path d="M3.2,4.2 A3.3,3.3 0 1,0 6.8,4.2" fill="none" stroke="#56c4a0" stroke-width="1.3"/><line x1="5" y1="1.5" x2="5" y2="6.2" stroke="#56c4a0" stroke-width="1.3"/></svg>
<div style="left:316px;top:413px;width:41px;height:20px;background:#5e6361;clip-path:polygon(6px 0,100% 0,100% 100%,0 100%,0 6px)"></div>
<div style="left:317px;top:414px;width:39px;height:18px;background:#9fa5a2;clip-path:polygon(5px 0,100% 0,100% 100%,0 100%,0 5px)"></div>
<div style="left:329px;top:414.5px;width:19px;height:1.5px;background:#5e6361"></div>
<svg style="position:absolute;left:319px;top:420px" width="14" height="9"><polyline points="2,7 7.5,2 12,6" fill="none" stroke="#454846" stroke-width="1"/><rect x="0.5" y="5.5" width="3.2" height="3.2" fill="#454846"/><rect x="5.9" y="0.4" width="3.2" height="3.2" fill="#454846"/><rect x="10.4" y="4.4" width="3.2" height="3.2" fill="#454846"/></svg>
<div class="t" style="left:335px;top:419px;font-size:10.6px;color:#4a4e4c">trim</div>
<div style="left:364.3px;top:413.3px;width:19.4px;height:19.4px;border-radius:50%;background:#7c807e"></div>
<div style="left:365.3px;top:414.3px;width:17.4px;height:17.4px;border-radius:50%;background:#c6c8c7"></div>
<div style="left:373.4px;top:417px;width:1px;height:5.5px;background:#444;transform-origin:0.5px 6px;transform:rotate(0deg)"></div>
<div class="t" style="left:19px;top:417.6px;width:17px;text-align:center;font-size:11px;color:#333">14</div>
<div style="left:609px;top:410px;width:47px;height:25px;background:#313131"></div>
<div style="left:613px;top:413px;width:40px;height:20px;background:#151515"></div>
<div style="left:614px;top:414px;width:19px;height:18px;background:linear-gradient(#404040,#353535)"></div>
<div style="left:634px;top:414px;width:18px;height:18px;background:linear-gradient(#404040,#353535)"></div>
<div class="t" style="left:614px;top:418px;width:19px;text-align:center;font-size:11px;color:#c49090;text-shadow:0 0 1px #1a0a0a,0 0 1px #1a0a0a">M</div>
<div class="t" style="left:634px;top:418px;width:18px;text-align:center;font-size:11px;color:#d4d4a2;text-shadow:0 0 1px #0a0a00,0 0 1px #0a0a00">S</div>
<div style="left:39px;top:436px;width:561px;height:24px;background:#818987"></div>
<div style="left:60px;top:437px;width:156px;height:22px;background:#262626;border-top:1px solid #1a1a1a"></div>
<div style="left:44.5px;top:437.5px;width:21px;height:21px;border-radius:50%;background:#24120e"></div>
<div style="left:46px;top:439px;width:18px;height:18px;border-radius:50%;background:radial-gradient(circle at 50% 25%,#a8685e,#974636 55%,#843828)"></div>
<svg style="position:absolute;left:49px;top:442px" width="12" height="12"><circle cx="6" cy="6" r="4.2" fill="#a04a3c" stroke="#ebbcab" stroke-width="1.9"/></svg>
<div class="t" style="left:69px;top:442.2px;font-size:12.5px;color:#c4c4c4">cimbalom trem</div>
<div style="left:205.0px;top:437.5px;width:21px;height:21px;border-radius:50%;background:#1a1a1a"></div>
<div style="left:206.0px;top:438.2px;width:19px;height:19px;border-radius:50%;background:radial-gradient(circle at 50% 15%,#f4f4f4 0,#cfcfcf 30%,#a4a4a4 70%,#7c7c7c 100%)"></div>
<div style="left:214.85px;top:442.8px;width:1.3px;height:4.6px;background:#222;transform-origin:0.65px 5.2px;transform:rotate(0deg)"></div>
<div style="left:232px;top:438px;width:34px;height:20px;background:#141414;clip-path:polygon(5px 0,100% 0,100% 100%,0 100%,0 5px)"></div>
<div style="left:233px;top:439px;width:32px;height:18px;background:linear-gradient(102.5deg,#363838 0 7.6px,#22c292 7.6px 12.7px,#55553c 12.7px 18.5px,#3a4c5e 18.5px 24.5px,#363636 24.5px);clip-path:polygon(4px 0,100% 0,100% 100%,0 100%,0 4px)"></div>
<div class="t" style="left:236.5px;top:443.3px;font-size:10.5px;letter-spacing:-0.5px;color:#f2f2f2">Route</div>
<div style="left:273px;top:438px;width:36px;height:20px;background:#3a403d;clip-path:polygon(6px 0,100% 0,100% 100%,0 100%,0 6px)"></div>
<div style="left:274px;top:439px;width:34px;height:18px;background:linear-gradient(90deg,#2b8a6a 0 19px,#9c9f9e 19px);clip-path:polygon(5px 0,100% 0,100% 100%,0 100%,0 5px)"></div>
<div style="left:283px;top:439px;width:21px;height:1.6px;background:#32e0a2"></div>
<div class="t" style="left:279px;top:444.3px;font-size:9.8px;letter-spacing:-1px;color:#d6f6e6">FX</div>
<svg style="position:absolute;left:296px;top:443px" width="10" height="11"><path d="M3.2,4.2 A3.3,3.3 0 1,0 6.8,4.2" fill="none" stroke="#56c4a0" stroke-width="1.3"/><line x1="5" y1="1.5" x2="5" y2="6.2" stroke="#56c4a0" stroke-width="1.3"/></svg>
<div style="left:316px;top:438px;width:41px;height:20px;background:#5e6361;clip-path:polygon(6px 0,100% 0,100% 100%,0 100%,0 6px)"></div>
<div style="left:317px;top:439px;width:39px;height:18px;background:#9fa5a2;clip-path:polygon(5px 0,100% 0,100% 100%,0 100%,0 5px)"></div>
<div style="left:329px;top:439.5px;width:19px;height:1.5px;background:#5e6361"></div>
<svg style="position:absolute;left:319px;top:445px" width="14" height="9"><polyline points="2,7 7.5,2 12,6" fill="none" stroke="#454846" stroke-width="1"/><rect x="0.5" y="5.5" width="3.2" height="3.2" fill="#454846"/><rect x="5.9" y="0.4" width="3.2" height="3.2" fill="#454846"/><rect x="10.4" y="4.4" width="3.2" height="3.2" fill="#454846"/></svg>
<div class="t" style="left:335px;top:444px;font-size:10.6px;color:#4a4e4c">trim</div>
<div style="left:364.3px;top:438.3px;width:19.4px;height:19.4px;border-radius:50%;background:#7c807e"></div>
<div style="left:365.3px;top:439.3px;width:17.4px;height:17.4px;border-radius:50%;background:#c6c8c7"></div>
<div style="left:373.4px;top:442px;width:1px;height:5.5px;background:#444;transform-origin:0.5px 6px;transform:rotate(0deg)"></div>
<div style="left:19px;top:436px;width:16px;height:22px;background:#818987;border-radius:0 0 5px 5px"></div>
<div class="t" style="left:19px;top:437px;width:17px;text-align:center;font-size:11px;color:#333">15</div>
<div style="left:23.5px;top:448px;width:8px;height:7px;background:#5e6562;clip-path:polygon(0 0,55% 0,75% 35%,100% 35%,100% 100%,0 100%)"></div>
<div style="left:609px;top:435px;width:47px;height:25px;background:#313131"></div>
<div style="left:613px;top:438px;width:40px;height:20px;background:#151515"></div>
<div style="left:614px;top:439px;width:19px;height:18px;background:linear-gradient(#404040,#353535)"></div>
<div style="left:634px;top:439px;width:18px;height:18px;background:linear-gradient(#404040,#353535)"></div>
<div class="t" style="left:614px;top:443px;width:19px;text-align:center;font-size:11px;color:#c49090;text-shadow:0 0 1px #1a0a0a,0 0 1px #1a0a0a">M</div>
<div class="t" style="left:634px;top:443px;width:18px;text-align:center;font-size:11px;color:#d4d4a2;text-shadow:0 0 1px #0a0a00,0 0 1px #0a0a00">S</div>
<div style="left:19px;top:461px;width:581px;height:24px;background:#818987"></div>
<div style="left:40px;top:462px;width:156px;height:22px;background:#262626;border-top:1px solid #1a1a1a"></div>
<div style="left:24.5px;top:462.5px;width:21px;height:21px;border-radius:50%;background:#24120e"></div>
<div style="left:26px;top:464px;width:18px;height:18px;border-radius:50%;background:radial-gradient(circle at 50% 25%,#a8685e,#974636 55%,#843828)"></div>
<svg style="position:absolute;left:29px;top:467px" width="12" height="12"><circle cx="6" cy="6" r="4.2" fill="#a04a3c" stroke="#ebbcab" stroke-width="1.9"/></svg>
<div class="t" style="left:49px;top:467.2px;font-size:12.5px;color:#c4c4c4">chord 3/4</div>
<div style="left:185.0px;top:462.5px;width:21px;height:21px;border-radius:50%;background:#1a1a1a"></div>
<div style="left:186.0px;top:463.2px;width:19px;height:19px;border-radius:50%;background:radial-gradient(circle at 50% 15%,#f4f4f4 0,#cfcfcf 30%,#a4a4a4 70%,#7c7c7c 100%)"></div>
<div style="left:194.85px;top:467.8px;width:1.3px;height:4.6px;background:#222;transform-origin:0.65px 5.2px;transform:rotate(0deg)"></div>
<div style="left:212px;top:463px;width:34px;height:20px;background:#141414;clip-path:polygon(5px 0,100% 0,100% 100%,0 100%,0 5px)"></div>
<div style="left:213px;top:464px;width:32px;height:18px;background:linear-gradient(102.5deg,#363838 0 7.6px,#22c292 7.6px 12.7px,#55553c 12.7px 18.5px,#3a4c5e 18.5px 24.5px,#363636 24.5px);clip-path:polygon(4px 0,100% 0,100% 100%,0 100%,0 4px)"></div>
<div class="t" style="left:216.5px;top:468.3px;font-size:10.5px;letter-spacing:-0.5px;color:#f2f2f2">Route</div>
<div style="left:253px;top:463px;width:36px;height:20px;background:#4a4c4b;clip-path:polygon(6px 0,100% 0,100% 100%,0 100%,0 6px)"></div>
<div style="left:254px;top:464px;width:34px;height:18px;background:linear-gradient(90deg,#7b7e7d 0 19px,#a0a4a2 19px);clip-path:polygon(5px 0,100% 0,100% 100%,0 100%,0 5px)"></div>
<div style="left:263px;top:464px;width:21px;height:1.5px;background:#555"></div>
<div class="t" style="left:259px;top:469.3px;font-size:9.8px;letter-spacing:-1px;color:#eee">FX</div>
<svg style="position:absolute;left:276px;top:468px" width="10" height="11"><path d="M3.2,4.2 A3.3,3.3 0 1,0 6.8,4.2" fill="none" stroke="#555" stroke-width="1.3"/><line x1="5" y1="1.5" x2="5" y2="6.2" stroke="#555" stroke-width="1.3"/></svg>
<div style="left:296px;top:463px;width:41px;height:20px;background:#5e6361;clip-path:polygon(6px 0,100% 0,100% 100%,0 100%,0 6px)"></div>
<div style="left:297px;top:464px;width:39px;height:18px;background:#9fa5a2;clip-path:polygon(5px 0,100% 0,100% 100%,0 100%,0 5px)"></div>
<div style="left:309px;top:464.5px;width:19px;height:1.5px;background:#5e6361"></div>
<svg style="position:absolute;left:299px;top:470px" width="14" height="9"><polyline points="2,7 7.5,2 12,6" fill="none" stroke="#454846" stroke-width="1"/><rect x="0.5" y="5.5" width="3.2" height="3.2" fill="#454846"/><rect x="5.9" y="0.4" width="3.2" height="3.2" fill="#454846"/><rect x="10.4" y="4.4" width="3.2" height="3.2" fill="#454846"/></svg>
<div class="t" style="left:315px;top:469px;font-size:10.6px;color:#4a4e4c">trim</div>
<div style="left:344.3px;top:463.3px;width:19.4px;height:19.4px;border-radius:50%;background:#7c807e"></div>
<div style="left:345.3px;top:464.3px;width:17.4px;height:17.4px;border-radius:50%;background:#c6c8c7"></div>
<div style="left:353.4px;top:467px;width:1px;height:5.5px;background:#444;transform-origin:0.5px 6px;transform:rotate(0deg)"></div>
<div style="left:1px;top:462px;width:12px;height:12px;border-radius:50%;background:#c4c4c4"></div>
<div style="left:3.5px;top:465.5px;width:0;height:0;border-left:3.5px solid transparent;border-right:3.5px solid transparent;border-top:5px solid #222"></div>
<div style="left:-1px;top:476px;width:16px;height:9px;background:#818987;border-radius:5px 5px 0 0"></div>
<div class="t" style="left:-1px;top:476px;width:16px;text-align:center;font-size:10px;color:#333">16</div>
<div style="left:609px;top:460px;width:47px;height:25px;background:#313131"></div>
<div style="left:613px;top:463px;width:40px;height:20px;background:#151515"></div>
<div style="left:614px;top:464px;width:19px;height:18px;background:linear-gradient(#404040,#353535)"></div>
<div style="left:634px;top:464px;width:18px;height:18px;background:linear-gradient(#404040,#353535)"></div>
<div class="t" style="left:614px;top:468px;width:19px;text-align:center;font-size:11px;color:#c49090;text-shadow:0 0 1px #1a0a0a,0 0 1px #1a0a0a">M</div>
<div class="t" style="left:634px;top:468px;width:18px;text-align:center;font-size:11px;color:#d4d4a2;text-shadow:0 0 1px #0a0a00,0 0 1px #0a0a00">S</div>
<div style="left:19px;top:486px;width:16px;height:24px;background:#818987"></div>
<div style="left:39px;top:486px;width:561px;height:24px;background:#818987"></div>
<div style="left:60px;top:487px;width:156px;height:22px;background:#262626;border-top:1px solid #1a1a1a"></div>
<div style="left:44.5px;top:487.5px;width:21px;height:21px;border-radius:50%;background:#24120e"></div>
<div style="left:46px;top:489px;width:18px;height:18px;border-radius:50%;background:radial-gradient(circle at 50% 25%,#a8685e,#974636 55%,#843828)"></div>
<svg style="position:absolute;left:49px;top:492px" width="12" height="12"><circle cx="6" cy="6" r="4.2" fill="#a04a3c" stroke="#ebbcab" stroke-width="1.9"/></svg>
<div class="t" style="left:69px;top:492.2px;font-size:12.5px;color:#c4c4c4">rain machine</div>
<div style="left:205.0px;top:487.5px;width:21px;height:21px;border-radius:50%;background:#1a1a1a"></div>
<div style="left:206.0px;top:488.2px;width:19px;height:19px;border-radius:50%;background:radial-gradient(circle at 50% 15%,#f4f4f4 0,#cfcfcf 30%,#a4a4a4 70%,#7c7c7c 100%)"></div>
<div style="left:214.85px;top:492.8px;width:1.3px;height:4.6px;background:#222;transform-origin:0.65px 5.2px;transform:rotate(0deg)"></div>
<div style="left:232px;top:488px;width:34px;height:20px;background:#141414;clip-path:polygon(5px 0,100% 0,100% 100%,0 100%,0 5px)"></div>
<div style="left:233px;top:489px;width:32px;height:18px;background:linear-gradient(102.5deg,#363838 0 7.6px,#22c292 7.6px 12.7px,#55553c 12.7px 18.5px,#3a4c5e 18.5px 24.5px,#363636 24.5px);clip-path:polygon(4px 0,100% 0,100% 100%,0 100%,0 4px)"></div>
<div class="t" style="left:236.5px;top:493.3px;font-size:10.5px;letter-spacing:-0.5px;color:#f2f2f2">Route</div>
<div style="left:273px;top:488px;width:36px;height:20px;background:#3a403d;clip-path:polygon(6px 0,100% 0,100% 100%,0 100%,0 6px)"></div>
<div style="left:274px;top:489px;width:34px;height:18px;background:linear-gradient(90deg,#2b8a6a 0 19px,#9c9f9e 19px);clip-path:polygon(5px 0,100% 0,100% 100%,0 100%,0 5px)"></div>
<div style="left:283px;top:489px;width:21px;height:1.6px;background:#32e0a2"></div>
<div class="t" style="left:279px;top:494.3px;font-size:9.8px;letter-spacing:-1px;color:#d6f6e6">FX</div>
<svg style="position:absolute;left:296px;top:493px" width="10" height="11"><path d="M3.2,4.2 A3.3,3.3 0 1,0 6.8,4.2" fill="none" stroke="#56c4a0" stroke-width="1.3"/><line x1="5" y1="1.5" x2="5" y2="6.2" stroke="#56c4a0" stroke-width="1.3"/></svg>
<div style="left:316px;top:488px;width:41px;height:20px;background:#5e6361;clip-path:polygon(6px 0,100% 0,100% 100%,0 100%,0 6px)"></div>
<div style="left:317px;top:489px;width:39px;height:18px;background:#9fa5a2;clip-path:polygon(5px 0,100% 0,100% 100%,0 100%,0 5px)"></div>
<div style="left:329px;top:489.5px;width:19px;height:1.5px;background:#5e6361"></div>
<svg style="position:absolute;left:319px;top:495px" width="14" height="9"><polyline points="2,7 7.5,2 12,6" fill="none" stroke="#454846" stroke-width="1"/><rect x="0.5" y="5.5" width="3.2" height="3.2" fill="#454846"/><rect x="5.9" y="0.4" width="3.2" height="3.2" fill="#454846"/><rect x="10.4" y="4.4" width="3.2" height="3.2" fill="#454846"/></svg>
<div class="t" style="left:335px;top:494px;font-size:10.6px;color:#4a4e4c">trim</div>
<div style="left:364.3px;top:488.3px;width:19.4px;height:19.4px;border-radius:50%;background:#7c807e"></div>
<div style="left:365.3px;top:489.3px;width:17.4px;height:17.4px;border-radius:50%;background:#c6c8c7"></div>
<div style="left:373.4px;top:492px;width:1px;height:5.5px;background:#444;transform-origin:0.5px 6px;transform:rotate(0deg)"></div>
<div class="t" style="left:19px;top:492.6px;width:17px;text-align:center;font-size:11px;color:#333">17</div>
<div style="left:609px;top:485px;width:47px;height:25px;background:#313131"></div>
<div style="left:613px;top:488px;width:40px;height:20px;background:#151515"></div>
<div style="left:614px;top:489px;width:19px;height:18px;background:linear-gradient(#404040,#353535)"></div>
<div style="left:634px;top:489px;width:18px;height:18px;background:linear-gradient(#404040,#353535)"></div>
<div class="t" style="left:614px;top:493px;width:19px;text-align:center;font-size:11px;color:#c49090;text-shadow:0 0 1px #1a0a0a,0 0 1px #1a0a0a">M</div>
<div class="t" style="left:634px;top:493px;width:18px;text-align:center;font-size:11px;color:#d4d4a2;text-shadow:0 0 1px #0a0a00,0 0 1px #0a0a00">S</div>
<div style="left:19px;top:511px;width:16px;height:24px;background:#818987"></div>
<div style="left:39px;top:511px;width:561px;height:24px;background:#818987"></div>
<div style="left:60px;top:512px;width:156px;height:22px;background:#262626;border-top:1px solid #1a1a1a"></div>
<div style="left:44.5px;top:512.5px;width:21px;height:21px;border-radius:50%;background:#24120e"></div>
<div style="left:46px;top:514px;width:18px;height:18px;border-radius:50%;background:radial-gradient(circle at 50% 25%,#a8685e,#974636 55%,#843828)"></div>
<svg style="position:absolute;left:49px;top:517px" width="12" height="12"><circle cx="6" cy="6" r="4.2" fill="#a04a3c" stroke="#ebbcab" stroke-width="1.9"/></svg>
<div class="t" style="left:69px;top:517.2px;font-size:12.5px;color:#c4c4c4">hand cymbal</div>
<div style="left:205.0px;top:512.5px;width:21px;height:21px;border-radius:50%;background:#1a1a1a"></div>
<div style="left:206.0px;top:513.2px;width:19px;height:19px;border-radius:50%;background:radial-gradient(circle at 50% 15%,#f4f4f4 0,#cfcfcf 30%,#a4a4a4 70%,#7c7c7c 100%)"></div>
<div style="left:214.85px;top:517.8px;width:1.3px;height:4.6px;background:#222;transform-origin:0.65px 5.2px;transform:rotate(10deg)"></div>
<div style="left:232px;top:513px;width:34px;height:20px;background:#141414;clip-path:polygon(5px 0,100% 0,100% 100%,0 100%,0 5px)"></div>
<div style="left:233px;top:514px;width:32px;height:18px;background:linear-gradient(102.5deg,#363838 0 7.6px,#22c292 7.6px 12.7px,#55553c 12.7px 18.5px,#3a4c5e 18.5px 24.5px,#363636 24.5px);clip-path:polygon(4px 0,100% 0,100% 100%,0 100%,0 4px)"></div>
<div class="t" style="left:236.5px;top:518.3px;font-size:10.5px;letter-spacing:-0.5px;color:#f2f2f2">Route</div>
<div style="left:273px;top:513px;width:36px;height:20px;background:#3a403d;clip-path:polygon(6px 0,100% 0,100% 100%,0 100%,0 6px)"></div>
<div style="left:274px;top:514px;width:34px;height:18px;background:linear-gradient(90deg,#2b8a6a 0 19px,#9c9f9e 19px);clip-path:polygon(5px 0,100% 0,100% 100%,0 100%,0 5px)"></div>
<div style="left:283px;top:514px;width:21px;height:1.6px;background:#32e0a2"></div>
<div class="t" style="left:279px;top:519.3px;font-size:9.8px;letter-spacing:-1px;color:#d6f6e6">FX</div>
<svg style="position:absolute;left:296px;top:518px" width="10" height="11"><path d="M3.2,4.2 A3.3,3.3 0 1,0 6.8,4.2" fill="none" stroke="#56c4a0" stroke-width="1.3"/><line x1="5" y1="1.5" x2="5" y2="6.2" stroke="#56c4a0" stroke-width="1.3"/></svg>
<div style="left:316px;top:513px;width:41px;height:20px;background:#5e6361;clip-path:polygon(6px 0,100% 0,100% 100%,0 100%,0 6px)"></div>
<div style="left:317px;top:514px;width:39px;height:18px;background:#9fa5a2;clip-path:polygon(5px 0,100% 0,100% 100%,0 100%,0 5px)"></div>
<div style="left:329px;top:514.5px;width:19px;height:1.5px;background:#5e6361"></div>
<svg style="position:absolute;left:319px;top:520px" width="14" height="9"><polyline points="2,7 7.5,2 12,6" fill="none" stroke="#454846" stroke-width="1"/><rect x="0.5" y="5.5" width="3.2" height="3.2" fill="#454846"/><rect x="5.9" y="0.4" width="3.2" height="3.2" fill="#454846"/><rect x="10.4" y="4.4" width="3.2" height="3.2" fill="#454846"/></svg>
<div class="t" style="left:335px;top:519px;font-size:10.6px;color:#4a4e4c">trim</div>
<div style="left:364.3px;top:513.3px;width:19.4px;height:19.4px;border-radius:50%;background:#7c807e"></div>
<div style="left:365.3px;top:514.3px;width:17.4px;height:17.4px;border-radius:50%;background:#c6c8c7"></div>
<div style="left:373.4px;top:517px;width:1px;height:5.5px;background:#444;transform-origin:0.5px 6px;transform:rotate(0deg)"></div>
<div class="t" style="left:19px;top:517.6px;width:17px;text-align:center;font-size:11px;color:#333">18</div>
<div style="left:609px;top:510px;width:47px;height:25px;background:#313131"></div>
<div style="left:613px;top:513px;width:40px;height:20px;background:#151515"></div>
<div style="left:614px;top:514px;width:19px;height:18px;background:linear-gradient(#404040,#353535)"></div>
<div style="left:634px;top:514px;width:18px;height:18px;background:linear-gradient(#404040,#353535)"></div>
<div class="t" style="left:614px;top:518px;width:19px;text-align:center;font-size:11px;color:#c49090;text-shadow:0 0 1px #1a0a0a,0 0 1px #1a0a0a">M</div>
<div class="t" style="left:634px;top:518px;width:18px;text-align:center;font-size:11px;color:#d4d4a2;text-shadow:0 0 1px #0a0a00,0 0 1px #0a0a00">S</div>
<div style="left:19px;top:536px;width:16px;height:24px;background:#818987"></div>
<div style="left:39px;top:536px;width:561px;height:24px;background:#818987"></div>
<div style="left:60px;top:537px;width:156px;height:22px;background:#262626;border-top:1px solid #1a1a1a"></div>
<div style="left:44.5px;top:537.5px;width:21px;height:21px;border-radius:50%;background:#24120e"></div>
<div style="left:46px;top:539px;width:18px;height:18px;border-radius:50%;background:radial-gradient(circle at 50% 25%,#a8685e,#974636 55%,#843828)"></div>
<svg style="position:absolute;left:49px;top:542px" width="12" height="12"><circle cx="6" cy="6" r="4.2" fill="#a04a3c" stroke="#ebbcab" stroke-width="1.9"/></svg>
<div class="t" style="left:69px;top:542.2px;font-size:12.5px;color:#c4c4c4">metallic accents</div>
<div style="left:205.0px;top:537.5px;width:21px;height:21px;border-radius:50%;background:#1a1a1a"></div>
<div style="left:206.0px;top:538.2px;width:19px;height:19px;border-radius:50%;background:radial-gradient(circle at 50% 15%,#f4f4f4 0,#cfcfcf 30%,#a4a4a4 70%,#7c7c7c 100%)"></div>
<div style="left:214.85px;top:542.8px;width:1.3px;height:4.6px;background:#222;transform-origin:0.65px 5.2px;transform:rotate(0deg)"></div>
<div style="left:232px;top:538px;width:34px;height:20px;background:#141414;clip-path:polygon(5px 0,100% 0,100% 100%,0 100%,0 5px)"></div>
<div style="left:233px;top:539px;width:32px;height:18px;background:linear-gradient(102.5deg,#363838 0 7.6px,#22c292 7.6px 12.7px,#55553c 12.7px 18.5px,#3a4c5e 18.5px 24.5px,#363636 24.5px);clip-path:polygon(4px 0,100% 0,100% 100%,0 100%,0 4px)"></div>
<div class="t" style="left:236.5px;top:543.3px;font-size:10.5px;letter-spacing:-0.5px;color:#f2f2f2">Route</div>
<div style="left:273px;top:538px;width:36px;height:20px;background:#3a403d;clip-path:polygon(6px 0,100% 0,100% 100%,0 100%,0 6px)"></div>
<div style="left:274px;top:539px;width:34px;height:18px;background:linear-gradient(90deg,#2b8a6a 0 19px,#9c9f9e 19px);clip-path:polygon(5px 0,100% 0,100% 100%,0 100%,0 5px)"></div>
<div style="left:283px;top:539px;width:21px;height:1.6px;background:#32e0a2"></div>
<div class="t" style="left:279px;top:544.3px;font-size:9.8px;letter-spacing:-1px;color:#d6f6e6">FX</div>
<svg style="position:absolute;left:296px;top:543px" width="10" height="11"><path d="M3.2,4.2 A3.3,3.3 0 1,0 6.8,4.2" fill="none" stroke="#56c4a0" stroke-width="1.3"/><line x1="5" y1="1.5" x2="5" y2="6.2" stroke="#56c4a0" stroke-width="1.3"/></svg>
<div style="left:316px;top:538px;width:41px;height:20px;background:#5e6361;clip-path:polygon(6px 0,100% 0,100% 100%,0 100%,0 6px)"></div>
<div style="left:317px;top:539px;width:39px;height:18px;background:#9fa5a2;clip-path:polygon(5px 0,100% 0,100% 100%,0 100%,0 5px)"></div>
<div style="left:329px;top:539.5px;width:19px;height:1.5px;background:#5e6361"></div>
<svg style="position:absolute;left:319px;top:545px" width="14" height="9"><polyline points="2,7 7.5,2 12,6" fill="none" stroke="#454846" stroke-width="1"/><rect x="0.5" y="5.5" width="3.2" height="3.2" fill="#454846"/><rect x="5.9" y="0.4" width="3.2" height="3.2" fill="#454846"/><rect x="10.4" y="4.4" width="3.2" height="3.2" fill="#454846"/></svg>
<div class="t" style="left:335px;top:544px;font-size:10.6px;color:#4a4e4c">trim</div>
<div style="left:364.3px;top:538.3px;width:19.4px;height:19.4px;border-radius:50%;background:#7c807e"></div>
<div style="left:365.3px;top:539.3px;width:17.4px;height:17.4px;border-radius:50%;background:#c6c8c7"></div>
<div style="left:373.4px;top:542px;width:1px;height:5.5px;background:#444;transform-origin:0.5px 6px;transform:rotate(0deg)"></div>
<div class="t" style="left:19px;top:542.6px;width:17px;text-align:center;font-size:11px;color:#333">19</div>
<div style="left:609px;top:535px;width:47px;height:25px;background:#313131"></div>
<div style="left:613px;top:538px;width:40px;height:20px;background:#151515"></div>
<div style="left:614px;top:539px;width:19px;height:18px;background:linear-gradient(#404040,#353535)"></div>
<div style="left:634px;top:539px;width:18px;height:18px;background:linear-gradient(#404040,#353535)"></div>
<div class="t" style="left:614px;top:543px;width:19px;text-align:center;font-size:11px;color:#c49090;text-shadow:0 0 1px #1a0a0a,0 0 1px #1a0a0a">M</div>
<div class="t" style="left:634px;top:543px;width:18px;text-align:center;font-size:11px;color:#d4d4a2;text-shadow:0 0 1px #0a0a00,0 0 1px #0a0a00">S</div>
<div style="left:19px;top:561px;width:16px;height:24px;background:#818987"></div>
<div style="left:39px;top:561px;width:561px;height:24px;background:#818987"></div>
<div style="left:60px;top:562px;width:156px;height:22px;background:#262626;border-top:1px solid #1a1a1a"></div>
<div style="left:44.5px;top:562.5px;width:21px;height:21px;border-radius:50%;background:#24120e"></div>
<div style="left:46px;top:564px;width:18px;height:18px;border-radius:50%;background:radial-gradient(circle at 50% 25%,#a8685e,#974636 55%,#843828)"></div>
<svg style="position:absolute;left:49px;top:567px" width="12" height="12"><circle cx="6" cy="6" r="4.2" fill="#a04a3c" stroke="#ebbcab" stroke-width="1.9"/></svg>
<div class="t" style="left:69px;top:567.2px;font-size:12.5px;color:#c4c4c4">odyssey fourth wall</div>
<div style="left:205.0px;top:562.5px;width:21px;height:21px;border-radius:50%;background:#1a1a1a"></div>
<div style="left:206.0px;top:563.2px;width:19px;height:19px;border-radius:50%;background:radial-gradient(circle at 50% 15%,#f4f4f4 0,#cfcfcf 30%,#a4a4a4 70%,#7c7c7c 100%)"></div>
<div style="left:214.85px;top:567.8px;width:1.3px;height:4.6px;background:#222;transform-origin:0.65px 5.2px;transform:rotate(-80deg)"></div>
<div style="left:232px;top:563px;width:34px;height:20px;background:#141414;clip-path:polygon(5px 0,100% 0,100% 100%,0 100%,0 5px)"></div>
<div style="left:233px;top:564px;width:32px;height:18px;background:linear-gradient(102.5deg,#363838 0 7.6px,#22c292 7.6px 12.7px,#55553c 12.7px 18.5px,#3a4c5e 18.5px 24.5px,#363636 24.5px);clip-path:polygon(4px 0,100% 0,100% 100%,0 100%,0 4px)"></div>
<div class="t" style="left:236.5px;top:568.3px;font-size:10.5px;letter-spacing:-0.5px;color:#f2f2f2">Route</div>
<div style="left:273px;top:563px;width:36px;height:20px;background:#3a403d;clip-path:polygon(6px 0,100% 0,100% 100%,0 100%,0 6px)"></div>
<div style="left:274px;top:564px;width:34px;height:18px;background:linear-gradient(90deg,#2b8a6a 0 19px,#9c9f9e 19px);clip-path:polygon(5px 0,100% 0,100% 100%,0 100%,0 5px)"></div>
<div style="left:283px;top:564px;width:21px;height:1.6px;background:#32e0a2"></div>
<div class="t" style="left:279px;top:569.3px;font-size:9.8px;letter-spacing:-1px;color:#d6f6e6">FX</div>
<svg style="position:absolute;left:296px;top:568px" width="10" height="11"><path d="M3.2,4.2 A3.3,3.3 0 1,0 6.8,4.2" fill="none" stroke="#56c4a0" stroke-width="1.3"/><line x1="5" y1="1.5" x2="5" y2="6.2" stroke="#56c4a0" stroke-width="1.3"/></svg>
<div style="left:316px;top:563px;width:41px;height:20px;background:#5e6361;clip-path:polygon(6px 0,100% 0,100% 100%,0 100%,0 6px)"></div>
<div style="left:317px;top:564px;width:39px;height:18px;background:#9fa5a2;clip-path:polygon(5px 0,100% 0,100% 100%,0 100%,0 5px)"></div>
<div style="left:329px;top:564.5px;width:19px;height:1.5px;background:#5e6361"></div>
<svg style="position:absolute;left:319px;top:570px" width="14" height="9"><polyline points="2,7 7.5,2 12,6" fill="none" stroke="#454846" stroke-width="1"/><rect x="0.5" y="5.5" width="3.2" height="3.2" fill="#454846"/><rect x="5.9" y="0.4" width="3.2" height="3.2" fill="#454846"/><rect x="10.4" y="4.4" width="3.2" height="3.2" fill="#454846"/></svg>
<div class="t" style="left:335px;top:569px;font-size:10.6px;color:#4a4e4c">trim</div>
<div style="left:364.3px;top:563.3px;width:19.4px;height:19.4px;border-radius:50%;background:#7c807e"></div>
<div style="left:365.3px;top:564.3px;width:17.4px;height:17.4px;border-radius:50%;background:#c6c8c7"></div>
<div style="left:373.4px;top:567px;width:1px;height:5.5px;background:#444;transform-origin:0.5px 6px;transform:rotate(0deg)"></div>
<div class="t" style="left:19px;top:567.6px;width:17px;text-align:center;font-size:11px;color:#333">20</div>
<div style="left:609px;top:560px;width:47px;height:25px;background:#313131"></div>
<div style="left:613px;top:563px;width:40px;height:20px;background:#151515"></div>
<div style="left:614px;top:564px;width:19px;height:18px;background:linear-gradient(#404040,#353535)"></div>
<div style="left:634px;top:564px;width:18px;height:18px;background:linear-gradient(#404040,#353535)"></div>
<div class="t" style="left:614px;top:568px;width:19px;text-align:center;font-size:11px;color:#c49090;text-shadow:0 0 1px #1a0a0a,0 0 1px #1a0a0a">M</div>
<div class="t" style="left:634px;top:568px;width:18px;text-align:center;font-size:11px;color:#d4d4a2;text-shadow:0 0 1px #0a0a00,0 0 1px #0a0a00">S</div>
<div style="left:39px;top:586px;width:561px;height:24px;background:#818987"></div>
<div style="left:60px;top:587px;width:156px;height:22px;background:#262626;border-top:1px solid #1a1a1a"></div>
<div style="left:44.5px;top:587.5px;width:21px;height:21px;border-radius:50%;background:#24120e"></div>
<div style="left:46px;top:589px;width:18px;height:18px;border-radius:50%;background:radial-gradient(circle at 50% 25%,#a8685e,#974636 55%,#843828)"></div>
<svg style="position:absolute;left:49px;top:592px" width="12" height="12"><circle cx="6" cy="6" r="4.2" fill="#a04a3c" stroke="#ebbcab" stroke-width="1.9"/></svg>
<div class="t" style="left:69px;top:592.2px;font-size:12.5px;color:#c4c4c4">yangqin trem</div>
<div style="left:205.0px;top:587.5px;width:21px;height:21px;border-radius:50%;background:#1a1a1a"></div>
<div style="left:206.0px;top:588.2px;width:19px;height:19px;border-radius:50%;background:radial-gradient(circle at 50% 15%,#f4f4f4 0,#cfcfcf 30%,#a4a4a4 70%,#7c7c7c 100%)"></div>
<div style="left:214.85px;top:592.8px;width:1.3px;height:4.6px;background:#222;transform-origin:0.65px 5.2px;transform:rotate(0deg)"></div>
<div style="left:232px;top:588px;width:34px;height:20px;background:#141414;clip-path:polygon(5px 0,100% 0,100% 100%,0 100%,0 5px)"></div>
<div style="left:233px;top:589px;width:32px;height:18px;background:linear-gradient(102.5deg,#363838 0 7.6px,#22c292 7.6px 12.7px,#55553c 12.7px 18.5px,#3a4c5e 18.5px 24.5px,#363636 24.5px);clip-path:polygon(4px 0,100% 0,100% 100%,0 100%,0 4px)"></div>
<div class="t" style="left:236.5px;top:593.3px;font-size:10.5px;letter-spacing:-0.5px;color:#f2f2f2">Route</div>
<div style="left:273px;top:588px;width:36px;height:20px;background:#3a403d;clip-path:polygon(6px 0,100% 0,100% 100%,0 100%,0 6px)"></div>
<div style="left:274px;top:589px;width:34px;height:18px;background:linear-gradient(90deg,#2b8a6a 0 19px,#9c9f9e 19px);clip-path:polygon(5px 0,100% 0,100% 100%,0 100%,0 5px)"></div>
<div style="left:283px;top:589px;width:21px;height:1.6px;background:#32e0a2"></div>
<div class="t" style="left:279px;top:594.3px;font-size:9.8px;letter-spacing:-1px;color:#d6f6e6">FX</div>
<svg style="position:absolute;left:296px;top:593px" width="10" height="11"><path d="M3.2,4.2 A3.3,3.3 0 1,0 6.8,4.2" fill="none" stroke="#56c4a0" stroke-width="1.3"/><line x1="5" y1="1.5" x2="5" y2="6.2" stroke="#56c4a0" stroke-width="1.3"/></svg>
<div style="left:316px;top:588px;width:41px;height:20px;background:#5e6361;clip-path:polygon(6px 0,100% 0,100% 100%,0 100%,0 6px)"></div>
<div style="left:317px;top:589px;width:39px;height:18px;background:#9fa5a2;clip-path:polygon(5px 0,100% 0,100% 100%,0 100%,0 5px)"></div>
<div style="left:329px;top:589.5px;width:19px;height:1.5px;background:#5e6361"></div>
<svg style="position:absolute;left:319px;top:595px" width="14" height="9"><polyline points="2,7 7.5,2 12,6" fill="none" stroke="#454846" stroke-width="1"/><rect x="0.5" y="5.5" width="3.2" height="3.2" fill="#454846"/><rect x="5.9" y="0.4" width="3.2" height="3.2" fill="#454846"/><rect x="10.4" y="4.4" width="3.2" height="3.2" fill="#454846"/></svg>
<div class="t" style="left:335px;top:594px;font-size:10.6px;color:#4a4e4c">trim</div>
<div style="left:364.3px;top:588.3px;width:19.4px;height:19.4px;border-radius:50%;background:#7c807e"></div>
<div style="left:365.3px;top:589.3px;width:17.4px;height:17.4px;border-radius:50%;background:#c6c8c7"></div>
<div style="left:373.4px;top:592px;width:1px;height:5.5px;background:#444;transform-origin:0.5px 6px;transform:rotate(0deg)"></div>
<div style="left:19px;top:586px;width:16px;height:22px;background:#818987;border-radius:0 0 5px 5px"></div>
<div class="t" style="left:19px;top:587px;width:17px;text-align:center;font-size:11px;color:#333">21</div>
<div style="left:23.5px;top:598px;width:8px;height:7px;background:#5e6562;clip-path:polygon(0 0,55% 0,75% 35%,100% 35%,100% 100%,0 100%)"></div>
<div style="left:609px;top:585px;width:47px;height:25px;background:#313131"></div>
<div style="left:613px;top:588px;width:40px;height:20px;background:#151515"></div>
<div style="left:614px;top:589px;width:19px;height:18px;background:linear-gradient(#404040,#353535)"></div>
<div style="left:634px;top:589px;width:18px;height:18px;background:linear-gradient(#404040,#353535)"></div>
<div class="t" style="left:614px;top:593px;width:19px;text-align:center;font-size:11px;color:#c49090;text-shadow:0 0 1px #1a0a0a,0 0 1px #1a0a0a">M</div>
<div class="t" style="left:634px;top:593px;width:18px;text-align:center;font-size:11px;color:#d4d4a2;text-shadow:0 0 1px #0a0a00,0 0 1px #0a0a00">S</div>
<div style="left:19px;top:611px;width:581px;height:24px;background:#818987"></div>
<div style="left:40px;top:612px;width:156px;height:22px;background:#262626;border-top:1px solid #1a1a1a"></div>
<div style="left:24.5px;top:612.5px;width:21px;height:21px;border-radius:50%;background:#24120e"></div>
<div style="left:26px;top:614px;width:18px;height:18px;border-radius:50%;background:radial-gradient(circle at 50% 25%,#a8685e,#974636 55%,#843828)"></div>
<svg style="position:absolute;left:29px;top:617px" width="12" height="12"><circle cx="6" cy="6" r="4.2" fill="#a04a3c" stroke="#ebbcab" stroke-width="1.9"/></svg>
<div class="t" style="left:49px;top:617.2px;font-size:12.5px;color:#c4c4c4">lush attack</div>
<div style="left:185.0px;top:612.5px;width:21px;height:21px;border-radius:50%;background:#1a1a1a"></div>
<div style="left:186.0px;top:613.2px;width:19px;height:19px;border-radius:50%;background:radial-gradient(circle at 50% 15%,#f4f4f4 0,#cfcfcf 30%,#a4a4a4 70%,#7c7c7c 100%)"></div>
<div style="left:194.85px;top:617.8px;width:1.3px;height:4.6px;background:#222;transform-origin:0.65px 5.2px;transform:rotate(-45deg)"></div>
<div style="left:212px;top:613px;width:34px;height:20px;background:#141414;clip-path:polygon(5px 0,100% 0,100% 100%,0 100%,0 5px)"></div>
<div style="left:213px;top:614px;width:32px;height:18px;background:linear-gradient(102.5deg,#363838 0 7.6px,#22c292 7.6px 12.7px,#55553c 12.7px 18.5px,#3a4c5e 18.5px 24.5px,#363636 24.5px);clip-path:polygon(4px 0,100% 0,100% 100%,0 100%,0 4px)"></div>
<div class="t" style="left:216.5px;top:618.3px;font-size:10.5px;letter-spacing:-0.5px;color:#f2f2f2">Route</div>
<div style="left:253px;top:613px;width:36px;height:20px;background:#4a4c4b;clip-path:polygon(6px 0,100% 0,100% 100%,0 100%,0 6px)"></div>
<div style="left:254px;top:614px;width:34px;height:18px;background:linear-gradient(90deg,#7b7e7d 0 19px,#a0a4a2 19px);clip-path:polygon(5px 0,100% 0,100% 100%,0 100%,0 5px)"></div>
<div style="left:263px;top:614px;width:21px;height:1.5px;background:#555"></div>
<div class="t" style="left:259px;top:619.3px;font-size:9.8px;letter-spacing:-1px;color:#eee">FX</div>
<svg style="position:absolute;left:276px;top:618px" width="10" height="11"><path d="M3.2,4.2 A3.3,3.3 0 1,0 6.8,4.2" fill="none" stroke="#555" stroke-width="1.3"/><line x1="5" y1="1.5" x2="5" y2="6.2" stroke="#555" stroke-width="1.3"/></svg>
<div style="left:296px;top:613px;width:41px;height:20px;background:#5e6361;clip-path:polygon(6px 0,100% 0,100% 100%,0 100%,0 6px)"></div>
<div style="left:297px;top:614px;width:39px;height:18px;background:#9fa5a2;clip-path:polygon(5px 0,100% 0,100% 100%,0 100%,0 5px)"></div>
<div style="left:309px;top:614.5px;width:19px;height:1.5px;background:#5e6361"></div>
<svg style="position:absolute;left:299px;top:620px" width="14" height="9"><polyline points="2,7 7.5,2 12,6" fill="none" stroke="#454846" stroke-width="1"/><rect x="0.5" y="5.5" width="3.2" height="3.2" fill="#454846"/><rect x="5.9" y="0.4" width="3.2" height="3.2" fill="#454846"/><rect x="10.4" y="4.4" width="3.2" height="3.2" fill="#454846"/></svg>
<div class="t" style="left:315px;top:619px;font-size:10.6px;color:#4a4e4c">trim</div>
<div style="left:344.3px;top:613.3px;width:19.4px;height:19.4px;border-radius:50%;background:#7c807e"></div>
<div style="left:345.3px;top:614.3px;width:17.4px;height:17.4px;border-radius:50%;background:#c6c8c7"></div>
<div style="left:353.4px;top:617px;width:1px;height:5.5px;background:#444;transform-origin:0.5px 6px;transform:rotate(0deg)"></div>
<div style="left:1px;top:612px;width:12px;height:12px;border-radius:50%;background:#c4c4c4"></div>
<div style="left:3.5px;top:615.5px;width:0;height:0;border-left:3.5px solid transparent;border-right:3.5px solid transparent;border-top:5px solid #222"></div>
<div style="left:-1px;top:626px;width:16px;height:9px;background:#818987;border-radius:5px 5px 0 0"></div>
<div class="t" style="left:-1px;top:626px;width:16px;text-align:center;font-size:10px;color:#333">22</div>
<div style="left:609px;top:610px;width:47px;height:25px;background:#313131"></div>
<div style="left:613px;top:613px;width:40px;height:20px;background:#151515"></div>
<div style="left:614px;top:614px;width:19px;height:18px;background:linear-gradient(#404040,#353535)"></div>
<div style="left:634px;top:614px;width:18px;height:18px;background:linear-gradient(#404040,#353535)"></div>
<div class="t" style="left:614px;top:618px;width:19px;text-align:center;font-size:11px;color:#c49090;text-shadow:0 0 1px #1a0a0a,0 0 1px #1a0a0a">M</div>
<div class="t" style="left:634px;top:618px;width:18px;text-align:center;font-size:11px;color:#d4d4a2;text-shadow:0 0 1px #0a0a00,0 0 1px #0a0a00">S</div>
<div style="left:19px;top:663px;width:16px;height:24px;background:#818987"></div>
<div style="left:39px;top:663px;width:561px;height:24px;background:#818987"></div>
<div style="left:60px;top:664px;width:156px;height:22px;background:#262626;border-top:1px solid #1a1a1a"></div>
<div style="left:44.5px;top:664.5px;width:21px;height:21px;border-radius:50%;background:#24120e"></div>
<div style="left:46px;top:666px;width:18px;height:18px;border-radius:50%;background:radial-gradient(circle at 50% 25%,#a8685e,#974636 55%,#843828)"></div>
<svg style="position:absolute;left:49px;top:669px" width="12" height="12"><circle cx="6" cy="6" r="4.2" fill="#a04a3c" stroke="#ebbcab" stroke-width="1.9"/></svg>
<div class="t" style="left:69px;top:669.2px;font-size:12.5px;color:#c4c4c4">harmonic flights over</div>
<div style="left:205.0px;top:664.5px;width:21px;height:21px;border-radius:50%;background:#1a1a1a"></div>
<div style="left:206.0px;top:665.2px;width:19px;height:19px;border-radius:50%;background:radial-gradient(circle at 50% 15%,#f4f4f4 0,#cfcfcf 30%,#a4a4a4 70%,#7c7c7c 100%)"></div>
<div style="left:214.85px;top:669.8px;width:1.3px;height:4.6px;background:#222;transform-origin:0.65px 5.2px;transform:rotate(-65deg)"></div>
<div style="left:232px;top:665px;width:34px;height:20px;background:#141414;clip-path:polygon(5px 0,100% 0,100% 100%,0 100%,0 5px)"></div>
<div style="left:233px;top:666px;width:32px;height:18px;background:linear-gradient(102.5deg,#363838 0 7.6px,#22c292 7.6px 12.7px,#55553c 12.7px 18.5px,#3a4c5e 18.5px 24.5px,#363636 24.5px);clip-path:polygon(4px 0,100% 0,100% 100%,0 100%,0 4px)"></div>
<div class="t" style="left:236.5px;top:670.3px;font-size:10.5px;letter-spacing:-0.5px;color:#f2f2f2">Route</div>
<div style="left:273px;top:665px;width:36px;height:20px;background:#3a403d;clip-path:polygon(6px 0,100% 0,100% 100%,0 100%,0 6px)"></div>
<div style="left:274px;top:666px;width:34px;height:18px;background:linear-gradient(90deg,#2b8a6a 0 19px,#9c9f9e 19px);clip-path:polygon(5px 0,100% 0,100% 100%,0 100%,0 5px)"></div>
<div style="left:283px;top:666px;width:21px;height:1.6px;background:#32e0a2"></div>
<div class="t" style="left:279px;top:671.3px;font-size:9.8px;letter-spacing:-1px;color:#d6f6e6">FX</div>
<svg style="position:absolute;left:296px;top:670px" width="10" height="11"><path d="M3.2,4.2 A3.3,3.3 0 1,0 6.8,4.2" fill="none" stroke="#56c4a0" stroke-width="1.3"/><line x1="5" y1="1.5" x2="5" y2="6.2" stroke="#56c4a0" stroke-width="1.3"/></svg>
<div style="left:316px;top:665px;width:41px;height:20px;background:#5e6361;clip-path:polygon(6px 0,100% 0,100% 100%,0 100%,0 6px)"></div>
<div style="left:317px;top:666px;width:39px;height:18px;background:#9fa5a2;clip-path:polygon(5px 0,100% 0,100% 100%,0 100%,0 5px)"></div>
<div style="left:329px;top:666.5px;width:19px;height:1.5px;background:#5e6361"></div>
<svg style="position:absolute;left:319px;top:672px" width="14" height="9"><polyline points="2,7 7.5,2 12,6" fill="none" stroke="#454846" stroke-width="1"/><rect x="0.5" y="5.5" width="3.2" height="3.2" fill="#454846"/><rect x="5.9" y="0.4" width="3.2" height="3.2" fill="#454846"/><rect x="10.4" y="4.4" width="3.2" height="3.2" fill="#454846"/></svg>
<div class="t" style="left:335px;top:671px;font-size:10.6px;color:#4a4e4c">trim</div>
<div style="left:364.3px;top:665.3px;width:19.4px;height:19.4px;border-radius:50%;background:#7c807e"></div>
<div style="left:365.3px;top:666.3px;width:17.4px;height:17.4px;border-radius:50%;background:#c6c8c7"></div>
<div style="left:373.4px;top:669px;width:1px;height:5.5px;background:#444;transform-origin:0.5px 6px;transform:rotate(0deg)"></div>
<div class="t" style="left:19px;top:669.6px;width:17px;text-align:center;font-size:11px;color:#333">23</div>
<div style="left:609px;top:662px;width:47px;height:25px;background:#313131"></div>
<div style="left:613px;top:665px;width:40px;height:20px;background:#151515"></div>
<div style="left:614px;top:666px;width:19px;height:18px;background:linear-gradient(#404040,#353535)"></div>
<div style="left:634px;top:666px;width:18px;height:18px;background:linear-gradient(#404040,#353535)"></div>
<div class="t" style="left:614px;top:670px;width:19px;text-align:center;font-size:11px;color:#c49090;text-shadow:0 0 1px #1a0a0a,0 0 1px #1a0a0a">M</div>
<div class="t" style="left:634px;top:670px;width:18px;text-align:center;font-size:11px;color:#d4d4a2;text-shadow:0 0 1px #0a0a00,0 0 1px #0a0a00">S</div>
<div style="left:19px;top:688px;width:16px;height:24px;background:#818987"></div>
<div style="left:39px;top:688px;width:561px;height:24px;background:#818987"></div>
<div style="left:60px;top:689px;width:156px;height:22px;background:#262626;border-top:1px solid #1a1a1a"></div>
<div style="left:44.5px;top:689.5px;width:21px;height:21px;border-radius:50%;background:#24120e"></div>
<div style="left:46px;top:691px;width:18px;height:18px;border-radius:50%;background:radial-gradient(circle at 50% 25%,#a8685e,#974636 55%,#843828)"></div>
<svg style="position:absolute;left:49px;top:694px" width="12" height="12"><circle cx="6" cy="6" r="4.2" fill="#a04a3c" stroke="#ebbcab" stroke-width="1.9"/></svg>
<div class="t" style="left:69px;top:694.2px;font-size:12.5px;color:#c4c4c4">violin harmonics</div>
<div style="left:205.0px;top:689.5px;width:21px;height:21px;border-radius:50%;background:#1a1a1a"></div>
<div style="left:206.0px;top:690.2px;width:19px;height:19px;border-radius:50%;background:radial-gradient(circle at 50% 15%,#f4f4f4 0,#cfcfcf 30%,#a4a4a4 70%,#7c7c7c 100%)"></div>
<div style="left:214.85px;top:694.8px;width:1.3px;height:4.6px;background:#222;transform-origin:0.65px 5.2px;transform:rotate(-60deg)"></div>
<div style="left:232px;top:690px;width:34px;height:20px;background:#141414;clip-path:polygon(5px 0,100% 0,100% 100%,0 100%,0 5px)"></div>
<div style="left:233px;top:691px;width:32px;height:18px;background:linear-gradient(102.5deg,#363838 0 7.6px,#22c292 7.6px 12.7px,#55553c 12.7px 18.5px,#3a4c5e 18.5px 24.5px,#363636 24.5px);clip-path:polygon(4px 0,100% 0,100% 100%,0 100%,0 4px)"></div>
<div class="t" style="left:236.5px;top:695.3px;font-size:10.5px;letter-spacing:-0.5px;color:#f2f2f2">Route</div>
<div style="left:273px;top:690px;width:36px;height:20px;background:#3a403d;clip-path:polygon(6px 0,100% 0,100% 100%,0 100%,0 6px)"></div>
<div style="left:274px;top:691px;width:34px;height:18px;background:linear-gradient(90deg,#2b8a6a 0 19px,#9c9f9e 19px);clip-path:polygon(5px 0,100% 0,100% 100%,0 100%,0 5px)"></div>
<div style="left:283px;top:691px;width:21px;height:1.6px;background:#32e0a2"></div>
<div class="t" style="left:279px;top:696.3px;font-size:9.8px;letter-spacing:-1px;color:#d6f6e6">FX</div>
<svg style="position:absolute;left:296px;top:695px" width="10" height="11"><path d="M3.2,4.2 A3.3,3.3 0 1,0 6.8,4.2" fill="none" stroke="#56c4a0" stroke-width="1.3"/><line x1="5" y1="1.5" x2="5" y2="6.2" stroke="#56c4a0" stroke-width="1.3"/></svg>
<div style="left:316px;top:690px;width:41px;height:20px;background:#5e6361;clip-path:polygon(6px 0,100% 0,100% 100%,0 100%,0 6px)"></div>
<div style="left:317px;top:691px;width:39px;height:18px;background:#9fa5a2;clip-path:polygon(5px 0,100% 0,100% 100%,0 100%,0 5px)"></div>
<div style="left:329px;top:691.5px;width:19px;height:1.5px;background:#5e6361"></div>
<svg style="position:absolute;left:319px;top:697px" width="14" height="9"><polyline points="2,7 7.5,2 12,6" fill="none" stroke="#454846" stroke-width="1"/><rect x="0.5" y="5.5" width="3.2" height="3.2" fill="#454846"/><rect x="5.9" y="0.4" width="3.2" height="3.2" fill="#454846"/><rect x="10.4" y="4.4" width="3.2" height="3.2" fill="#454846"/></svg>
<div class="t" style="left:335px;top:696px;font-size:10.6px;color:#4a4e4c">trim</div>
<div style="left:364.3px;top:690.3px;width:19.4px;height:19.4px;border-radius:50%;background:#7c807e"></div>
<div style="left:365.3px;top:691.3px;width:17.4px;height:17.4px;border-radius:50%;background:#c6c8c7"></div>
<div style="left:373.4px;top:694px;width:1px;height:5.5px;background:#444;transform-origin:0.5px 6px;transform:rotate(0deg)"></div>
<div class="t" style="left:19px;top:694.6px;width:17px;text-align:center;font-size:11px;color:#333">24</div>
<div style="left:609px;top:687px;width:47px;height:25px;background:#313131"></div>
<div style="left:613px;top:690px;width:40px;height:20px;background:#151515"></div>
<div style="left:614px;top:691px;width:19px;height:18px;background:linear-gradient(#404040,#353535)"></div>
<div style="left:634px;top:691px;width:18px;height:18px;background:linear-gradient(#404040,#353535)"></div>
<div class="t" style="left:614px;top:695px;width:19px;text-align:center;font-size:11px;color:#c49090;text-shadow:0 0 1px #1a0a0a,0 0 1px #1a0a0a">M</div>
<div class="t" style="left:634px;top:695px;width:18px;text-align:center;font-size:11px;color:#d4d4a2;text-shadow:0 0 1px #0a0a00,0 0 1px #0a0a00">S</div>
<div style="left:19px;top:713px;width:16px;height:24px;background:#818987"></div>
<div style="left:39px;top:713px;width:561px;height:24px;background:#818987"></div>
<div style="left:60px;top:714px;width:156px;height:22px;background:#262626;border-top:1px solid #1a1a1a"></div>
<div style="left:44.5px;top:714.5px;width:21px;height:21px;border-radius:50%;background:#24120e"></div>
<div style="left:46px;top:716px;width:18px;height:18px;border-radius:50%;background:radial-gradient(circle at 50% 25%,#a8685e,#974636 55%,#843828)"></div>
<svg style="position:absolute;left:49px;top:719px" width="12" height="12"><circle cx="6" cy="6" r="4.2" fill="#a04a3c" stroke="#ebbcab" stroke-width="1.9"/></svg>
<div class="t" style="left:69px;top:719.2px;font-size:12.5px;color:#c4c4c4">violin harmonics</div>
<div style="left:205.0px;top:714.5px;width:21px;height:21px;border-radius:50%;background:#1a1a1a"></div>
<div style="left:206.0px;top:715.2px;width:19px;height:19px;border-radius:50%;background:radial-gradient(circle at 50% 15%,#f4f4f4 0,#cfcfcf 30%,#a4a4a4 70%,#7c7c7c 100%)"></div>
<div style="left:214.85px;top:719.8px;width:1.3px;height:4.6px;background:#222;transform-origin:0.65px 5.2px;transform:rotate(-70deg)"></div>
<div style="left:232px;top:715px;width:34px;height:20px;background:#141414;clip-path:polygon(5px 0,100% 0,100% 100%,0 100%,0 5px)"></div>
<div style="left:233px;top:716px;width:32px;height:18px;background:linear-gradient(102.5deg,#363838 0 7.6px,#22c292 7.6px 12.7px,#55553c 12.7px 18.5px,#3a4c5e 18.5px 24.5px,#363636 24.5px);clip-path:polygon(4px 0,100% 0,100% 100%,0 100%,0 4px)"></div>
<div class="t" style="left:236.5px;top:720.3px;font-size:10.5px;letter-spacing:-0.5px;color:#f2f2f2">Route</div>
<div style="left:273px;top:715px;width:36px;height:20px;background:#3a403d;clip-path:polygon(6px 0,100% 0,100% 100%,0 100%,0 6px)"></div>
<div style="left:274px;top:716px;width:34px;height:18px;background:linear-gradient(90deg,#2b8a6a 0 19px,#9c9f9e 19px);clip-path:polygon(5px 0,100% 0,100% 100%,0 100%,0 5px)"></div>
<div style="left:283px;top:716px;width:21px;height:1.6px;background:#32e0a2"></div>
<div class="t" style="left:279px;top:721.3px;font-size:9.8px;letter-spacing:-1px;color:#d6f6e6">FX</div>
<svg style="position:absolute;left:296px;top:720px" width="10" height="11"><path d="M3.2,4.2 A3.3,3.3 0 1,0 6.8,4.2" fill="none" stroke="#56c4a0" stroke-width="1.3"/><line x1="5" y1="1.5" x2="5" y2="6.2" stroke="#56c4a0" stroke-width="1.3"/></svg>
<div style="left:316px;top:715px;width:41px;height:20px;background:#5e6361;clip-path:polygon(6px 0,100% 0,100% 100%,0 100%,0 6px)"></div>
<div style="left:317px;top:716px;width:39px;height:18px;background:#9fa5a2;clip-path:polygon(5px 0,100% 0,100% 100%,0 100%,0 5px)"></div>
<div style="left:329px;top:716.5px;width:19px;height:1.5px;background:#5e6361"></div>
<svg style="position:absolute;left:319px;top:722px" width="14" height="9"><polyline points="2,7 7.5,2 12,6" fill="none" stroke="#454846" stroke-width="1"/><rect x="0.5" y="5.5" width="3.2" height="3.2" fill="#454846"/><rect x="5.9" y="0.4" width="3.2" height="3.2" fill="#454846"/><rect x="10.4" y="4.4" width="3.2" height="3.2" fill="#454846"/></svg>
<div class="t" style="left:335px;top:721px;font-size:10.6px;color:#4a4e4c">trim</div>
<div style="left:364.3px;top:715.3px;width:19.4px;height:19.4px;border-radius:50%;background:#7c807e"></div>
<div style="left:365.3px;top:716.3px;width:17.4px;height:17.4px;border-radius:50%;background:#c6c8c7"></div>
<div style="left:373.4px;top:719px;width:1px;height:5.5px;background:#444;transform-origin:0.5px 6px;transform:rotate(0deg)"></div>
<div class="t" style="left:19px;top:719.6px;width:17px;text-align:center;font-size:11px;color:#333">25</div>
<div style="left:609px;top:712px;width:47px;height:25px;background:#313131"></div>
<div style="left:613px;top:715px;width:40px;height:20px;background:#151515"></div>
<div style="left:614px;top:716px;width:19px;height:18px;background:linear-gradient(#404040,#353535)"></div>
<div style="left:634px;top:716px;width:18px;height:18px;background:linear-gradient(#404040,#353535)"></div>
<div class="t" style="left:614px;top:720px;width:19px;text-align:center;font-size:11px;color:#c49090;text-shadow:0 0 1px #1a0a0a,0 0 1px #1a0a0a">M</div>
<div class="t" style="left:634px;top:720px;width:18px;text-align:center;font-size:11px;color:#d4d4a2;text-shadow:0 0 1px #0a0a00,0 0 1px #0a0a00">S</div>
<div style="left:19px;top:738px;width:16px;height:24px;background:#818987"></div>
<div style="left:39px;top:738px;width:561px;height:24px;background:#818987"></div>
<div style="left:60px;top:739px;width:156px;height:22px;background:#262626;border-top:1px solid #1a1a1a"></div>
<div style="left:44.5px;top:739.5px;width:21px;height:21px;border-radius:50%;background:#24120e"></div>
<div style="left:46px;top:741px;width:18px;height:18px;border-radius:50%;background:radial-gradient(circle at 50% 25%,#a8685e,#974636 55%,#843828)"></div>
<svg style="position:absolute;left:49px;top:744px" width="12" height="12"><circle cx="6" cy="6" r="4.2" fill="#a04a3c" stroke="#ebbcab" stroke-width="1.9"/></svg>
<div class="t" style="left:69px;top:744.2px;font-size:12.5px;color:#c4c4c4">violin 1</div>
<div style="left:205.0px;top:739.5px;width:21px;height:21px;border-radius:50%;background:#1a1a1a"></div>
<div style="left:206.0px;top:740.2px;width:19px;height:19px;border-radius:50%;background:radial-gradient(circle at 50% 15%,#f4f4f4 0,#cfcfcf 30%,#a4a4a4 70%,#7c7c7c 100%)"></div>
<div style="left:214.85px;top:744.8px;width:1.3px;height:4.6px;background:#222;transform-origin:0.65px 5.2px;transform:rotate(-60deg)"></div>
<div style="left:232px;top:740px;width:34px;height:20px;background:#141414;clip-path:polygon(5px 0,100% 0,100% 100%,0 100%,0 5px)"></div>
<div style="left:233px;top:741px;width:32px;height:18px;background:linear-gradient(102.5deg,#363838 0 7.6px,#22c292 7.6px 12.7px,#55553c 12.7px 18.5px,#3a4c5e 18.5px 24.5px,#363636 24.5px);clip-path:polygon(4px 0,100% 0,100% 100%,0 100%,0 4px)"></div>
<div class="t" style="left:236.5px;top:745.3px;font-size:10.5px;letter-spacing:-0.5px;color:#f2f2f2">Route</div>
<div style="left:273px;top:740px;width:36px;height:20px;background:#3a403d;clip-path:polygon(6px 0,100% 0,100% 100%,0 100%,0 6px)"></div>
<div style="left:274px;top:741px;width:34px;height:18px;background:linear-gradient(90deg,#2b8a6a 0 19px,#9c9f9e 19px);clip-path:polygon(5px 0,100% 0,100% 100%,0 100%,0 5px)"></div>
<div style="left:283px;top:741px;width:21px;height:1.6px;background:#32e0a2"></div>
<div class="t" style="left:279px;top:746.3px;font-size:9.8px;letter-spacing:-1px;color:#d6f6e6">FX</div>
<svg style="position:absolute;left:296px;top:745px" width="10" height="11"><path d="M3.2,4.2 A3.3,3.3 0 1,0 6.8,4.2" fill="none" stroke="#56c4a0" stroke-width="1.3"/><line x1="5" y1="1.5" x2="5" y2="6.2" stroke="#56c4a0" stroke-width="1.3"/></svg>
<div style="left:316px;top:740px;width:41px;height:20px;background:#5e6361;clip-path:polygon(6px 0,100% 0,100% 100%,0 100%,0 6px)"></div>
<div style="left:317px;top:741px;width:39px;height:18px;background:#9fa5a2;clip-path:polygon(5px 0,100% 0,100% 100%,0 100%,0 5px)"></div>
<div style="left:329px;top:741.5px;width:19px;height:1.5px;background:#5e6361"></div>
<svg style="position:absolute;left:319px;top:747px" width="14" height="9"><polyline points="2,7 7.5,2 12,6" fill="none" stroke="#454846" stroke-width="1"/><rect x="0.5" y="5.5" width="3.2" height="3.2" fill="#454846"/><rect x="5.9" y="0.4" width="3.2" height="3.2" fill="#454846"/><rect x="10.4" y="4.4" width="3.2" height="3.2" fill="#454846"/></svg>
<div class="t" style="left:335px;top:746px;font-size:10.6px;color:#4a4e4c">trim</div>
<div style="left:364.3px;top:740.3px;width:19.4px;height:19.4px;border-radius:50%;background:#7c807e"></div>
<div style="left:365.3px;top:741.3px;width:17.4px;height:17.4px;border-radius:50%;background:#c6c8c7"></div>
<div style="left:373.4px;top:744px;width:1px;height:5.5px;background:#444;transform-origin:0.5px 6px;transform:rotate(-30deg)"></div>
<div class="t" style="left:19px;top:744.6px;width:17px;text-align:center;font-size:11px;color:#333">26</div>
<div style="left:609px;top:737px;width:47px;height:25px;background:#313131"></div>
<div style="left:613px;top:740px;width:40px;height:20px;background:#151515"></div>
<div style="left:614px;top:741px;width:19px;height:18px;background:linear-gradient(#404040,#353535)"></div>
<div style="left:634px;top:741px;width:18px;height:18px;background:linear-gradient(#404040,#353535)"></div>
<div class="t" style="left:614px;top:745px;width:19px;text-align:center;font-size:11px;color:#c49090;text-shadow:0 0 1px #1a0a0a,0 0 1px #1a0a0a">M</div>
<div class="t" style="left:634px;top:745px;width:18px;text-align:center;font-size:11px;color:#d4d4a2;text-shadow:0 0 1px #0a0a00,0 0 1px #0a0a00">S</div>
<div style="left:0;top:233px;width:664px;height:27px;background:#2d2d2d"></div>
<div style="left:1.5px;top:236.5px;width:20px;height:20px;border-radius:50%;background:#22c09b"></div>
<svg style="position:absolute;left:5.7px;top:240.5px" width="12" height="12"><circle cx="6" cy="6" r="4.3" fill="#22bf9a" stroke="#b0f6e4" stroke-width="2.1"/></svg>
<svg style="position:absolute;left:23px;top:239.5px" width="13" height="14"><path d="M4.2,4.6 A4.6,4.6 0 1,0 8.8,4.6" fill="none" stroke="#3a9a84" stroke-width="1.6"/><line x1="6.5" y1="1" x2="6.5" y2="7" stroke="#3a9a84" stroke-width="1.6"/></svg>
<div class="t" style="left:39px;top:241.0px;font-size:11px;color:#c8c8c8">Volume</div>
<div style="left:177px;top:236.5px;width:20px;height:20px;border-radius:50%;background:#111"></div>
<div style="left:178px;top:237.5px;width:18px;height:18px;border-radius:50%;background:radial-gradient(circle at 50% 20%,#7a7a7a,#555 55%,#3a3a3a)"></div>
<div style="left:186.5px;top:239.5px;width:1px;height:5px;background:#3ad0a8"></div>
<div style="left:204px;top:237.0px;width:36px;height:19px;border:1px solid #454545;border-radius:0 10px 10px 0"></div>
<svg style="position:absolute;left:207px;top:239.3px" width="15" height="15"><rect x="6" y="0.5" width="2.4" height="3" fill="#6a6a6a" transform="rotate(0 7.2 7.2)"/><rect x="6" y="0.5" width="2.4" height="3" fill="#6a6a6a" transform="rotate(45 7.2 7.2)"/><rect x="6" y="0.5" width="2.4" height="3" fill="#6a6a6a" transform="rotate(90 7.2 7.2)"/><rect x="6" y="0.5" width="2.4" height="3" fill="#6a6a6a" transform="rotate(135 7.2 7.2)"/><rect x="6" y="0.5" width="2.4" height="3" fill="#6a6a6a" transform="rotate(180 7.2 7.2)"/><rect x="6" y="0.5" width="2.4" height="3" fill="#6a6a6a" transform="rotate(225 7.2 7.2)"/><rect x="6" y="0.5" width="2.4" height="3" fill="#6a6a6a" transform="rotate(270 7.2 7.2)"/><rect x="6" y="0.5" width="2.4" height="3" fill="#6a6a6a" transform="rotate(315 7.2 7.2)"/><circle cx="7.2" cy="7.2" r="4.6" fill="#6a6a6a"/><circle cx="7.2" cy="7.2" r="2" fill="#2a2a2a"/></svg>
<div style="left:222px;top:239.5px;width:14px;height:14px;border-radius:50%;background:#4f4f4f"></div>
<div style="left:225px;top:243.5px;width:0;height:0;border-left:4px solid transparent;border-right:4px solid transparent;border-top:6px solid #333"></div>
<div class="t" style="left:600px;top:244px;width:52px;text-align:right;font-size:10.5px;color:#52b0a2">0.00dB</div>
<div style="left:0;top:635px;width:664px;height:27px;background:#2d2d2d"></div>
<div style="left:1.5px;top:638.5px;width:20px;height:20px;border-radius:50%;background:#22c09b"></div>
<svg style="position:absolute;left:5.7px;top:642.5px" width="12" height="12"><circle cx="6" cy="6" r="4.3" fill="#22bf9a" stroke="#b0f6e4" stroke-width="2.1"/></svg>
<svg style="position:absolute;left:23px;top:641.5px" width="13" height="14"><path d="M4.2,4.6 A4.6,4.6 0 1,0 8.8,4.6" fill="none" stroke="#3a9a84" stroke-width="1.6"/><line x1="6.5" y1="1" x2="6.5" y2="7" stroke="#3a9a84" stroke-width="1.6"/></svg>
<div class="t" style="left:39px;top:643.0px;font-size:11px;color:#c8c8c8">Volume</div>
<div style="left:177px;top:638.5px;width:20px;height:20px;border-radius:50%;background:#111"></div>
<div style="left:178px;top:639.5px;width:18px;height:18px;border-radius:50%;background:radial-gradient(circle at 50% 20%,#7a7a7a,#555 55%,#3a3a3a)"></div>
<div style="left:186.5px;top:641.5px;width:1px;height:5px;background:#3ad0a8"></div>
<div style="left:204px;top:639.0px;width:36px;height:19px;border:1px solid #454545;border-radius:0 10px 10px 0"></div>
<svg style="position:absolute;left:207px;top:641.3px" width="15" height="15"><rect x="6" y="0.5" width="2.4" height="3" fill="#6a6a6a" transform="rotate(0 7.2 7.2)"/><rect x="6" y="0.5" width="2.4" height="3" fill="#6a6a6a" transform="rotate(45 7.2 7.2)"/><rect x="6" y="0.5" width="2.4" height="3" fill="#6a6a6a" transform="rotate(90 7.2 7.2)"/><rect x="6" y="0.5" width="2.4" height="3" fill="#6a6a6a" transform="rotate(135 7.2 7.2)"/><rect x="6" y="0.5" width="2.4" height="3" fill="#6a6a6a" transform="rotate(180 7.2 7.2)"/><rect x="6" y="0.5" width="2.4" height="3" fill="#6a6a6a" transform="rotate(225 7.2 7.2)"/><rect x="6" y="0.5" width="2.4" height="3" fill="#6a6a6a" transform="rotate(270 7.2 7.2)"/><rect x="6" y="0.5" width="2.4" height="3" fill="#6a6a6a" transform="rotate(315 7.2 7.2)"/><circle cx="7.2" cy="7.2" r="4.6" fill="#6a6a6a"/><circle cx="7.2" cy="7.2" r="2" fill="#2a2a2a"/></svg>
<div style="left:222px;top:641.5px;width:14px;height:14px;border-radius:50%;background:#4f4f4f"></div>
<div style="left:225px;top:645.5px;width:0;height:0;border-left:4px solid transparent;border-right:4px solid transparent;border-top:6px solid #333"></div>
<div class="t" style="left:600px;top:646px;width:52px;text-align:right;font-size:10.5px;color:#52b0a2">0.00dB</div>
<div style="left:664px;top:83px;width:819px;height:670px;background:#434343"></div>
<div style="left:664px;top:83px;width:1px;height:670px;background:#111"></div>
<div style="left:665px;top:108px;width:819px;height:1px;background:#3b3b3b"></div>
<div style="left:665px;top:133px;width:819px;height:1px;background:#3b3b3b"></div>
<div style="left:665px;top:158px;width:819px;height:1px;background:#3b3b3b"></div>
<div style="left:665px;top:183px;width:819px;height:1px;background:#3b3b3b"></div>
<div style="left:665px;top:208px;width:819px;height:1px;background:#3b3b3b"></div>
<div style="left:665px;top:233px;width:819px;height:1px;background:#3b3b3b"></div>
<div style="left:665px;top:285px;width:819px;height:1px;background:#3b3b3b"></div>
<div style="left:665px;top:310px;width:819px;height:1px;background:#3b3b3b"></div>
<div style="left:665px;top:335px;width:819px;height:1px;background:#3b3b3b"></div>
<div style="left:665px;top:360px;width:819px;height:1px;background:#3b3b3b"></div>
<div style="left:665px;top:385px;width:819px;height:1px;background:#3b3b3b"></div>
<div style="left:665px;top:410px;width:819px;height:1px;background:#3b3b3b"></div>
<div style="left:665px;top:435px;width:819px;height:1px;background:#3b3b3b"></div>
<div style="left:665px;top:460px;width:819px;height:1px;background:#3b3b3b"></div>
<div style="left:665px;top:485px;width:819px;height:1px;background:#3b3b3b"></div>
<div style="left:665px;top:510px;width:819px;height:1px;background:#3b3b3b"></div>
<div style="left:665px;top:535px;width:819px;height:1px;background:#3b3b3b"></div>
<div style="left:665px;top:560px;width:819px;height:1px;background:#3b3b3b"></div>
<div style="left:665px;top:585px;width:819px;height:1px;background:#3b3b3b"></div>
<div style="left:665px;top:610px;width:819px;height:1px;background:#3b3b3b"></div>
<div style="left:665px;top:635px;width:819px;height:1px;background:#3b3b3b"></div>
<div style="left:665px;top:687px;width:819px;height:1px;background:#3b3b3b"></div>
<div style="left:665px;top:712px;width:819px;height:1px;background:#3b3b3b"></div>
<div style="left:665px;top:737px;width:819px;height:1px;background:#3b3b3b"></div>
<div style="left:665px;top:762px;width:819px;height:1px;background:#3b3b3b"></div>
<div style="left:665px;top:238px;width:819px;height:18px;background:#3e5744"></div>
<div style="left:665px;top:238px;width:819px;height:1px;background:#5a9a68"></div>
<div style="left:665px;top:641px;width:819px;height:17px;background:#3e5744"></div>
<div style="left:663px;top:88px;width:236px;height:19px;background:#7f8785;border:1px solid #1e1e1e"></div>
<div style="left:665px;top:101px;width:0;height:0;border-bottom:5px solid #c9cdcb;border-right:5px solid transparent"></div>
<div style="left:913px;top:88px;width:241px;height:19px;background:#7f8785;border:1px solid #1e1e1e"></div>
<div style="left:914px;top:101px;width:0;height:0;border-bottom:5px solid #c9cdcb;border-right:5px solid transparent"></div>
<div style="left:1164px;top:88px;width:97px;height:19px;background:#7f8785;border:1px solid #1e1e1e"></div>
<div style="left:1165px;top:101px;width:0;height:0;border-bottom:5px solid #c9cdcb;border-right:5px solid transparent"></div>
<div style="left:663px;top:113px;width:236px;height:19px;background:#7f8785;border:1px solid #1e1e1e"></div>
<div style="left:665px;top:126px;width:0;height:0;border-bottom:5px solid #c9cdcb;border-right:5px solid transparent"></div>
<div style="left:913px;top:113px;width:241px;height:19px;background:#7f8785;border:1px solid #1e1e1e"></div>
<div style="left:914px;top:126px;width:0;height:0;border-bottom:5px solid #c9cdcb;border-right:5px solid transparent"></div>
<div style="left:1164px;top:113px;width:97px;height:19px;background:#7f8785;border:1px solid #1e1e1e"></div>
<div style="left:1165px;top:126px;width:0;height:0;border-bottom:5px solid #c9cdcb;border-right:5px solid transparent"></div>
<div style="left:663px;top:138px;width:485px;height:19px;background:#7f8785;border:1px solid #1e1e1e"></div>
<div style="left:665px;top:151px;width:0;height:0;border-bottom:5px solid #c9cdcb;border-right:5px solid transparent"></div>
<div style="left:1150px;top:138px;width:116px;height:19px;background:#7f8785;border:1px solid #1e1e1e"></div>
<div style="left:1151px;top:151px;width:0;height:0;border-bottom:5px solid #c9cdcb;border-right:5px solid transparent"></div>
<div style="left:962px;top:163px;width:64px;height:19px;background:#7f8785;border:1px solid #1e1e1e"></div>
<div style="left:963px;top:176px;width:0;height:0;border-bottom:5px solid #c9cdcb;border-right:5px solid transparent"></div>
<div style="left:663px;top:213px;width:278px;height:19px;background:#7f8785;border:1px solid #1e1e1e"></div>
<div style="left:665px;top:226px;width:0;height:0;border-bottom:5px solid #c9cdcb;border-right:5px solid transparent"></div>
<div style="left:1068px;top:213px;width:121px;height:19px;background:#7f8785;border:1px solid #1e1e1e"></div>
<div style="left:1069px;top:226px;width:0;height:0;border-bottom:5px solid #c9cdcb;border-right:5px solid transparent"></div>
<div style="left:685px;top:290px;width:97px;height:19px;background:#7f8785;border:1px solid #1e1e1e"></div>
<div style="left:686px;top:303px;width:0;height:0;border-bottom:5px solid #c9cdcb;border-right:5px solid transparent"></div>
<div style="left:1087px;top:290px;width:23px;height:19px;background:#7f8785;border:1px solid #1e1e1e"></div>
<div style="left:1088px;top:303px;width:0;height:0;border-bottom:5px solid #c9cdcb;border-right:5px solid transparent"></div>
<div style="left:1153px;top:290px;width:65px;height:19px;background:#7f8785;border:1px solid #1e1e1e"></div>
<div style="left:1154px;top:303px;width:0;height:0;border-bottom:5px solid #c9cdcb;border-right:5px solid transparent"></div>
<div style="left:669px;top:315px;width:193px;height:19px;background:#7f8785;border:1px solid #1e1e1e"></div>
<div style="left:670px;top:328px;width:0;height:0;border-bottom:5px solid #c9cdcb;border-right:5px solid transparent"></div>
<div style="left:1052px;top:315px;width:28px;height:19px;background:#7f8785;border:1px solid #1e1e1e"></div>
<div style="left:1053px;top:328px;width:0;height:0;border-bottom:5px solid #c9cdcb;border-right:5px solid transparent"></div>
<div style="left:1142px;top:315px;width:28px;height:19px;background:#7f8785;border:1px solid #1e1e1e"></div>
<div style="left:1143px;top:328px;width:0;height:0;border-bottom:5px solid #c9cdcb;border-right:5px solid transparent"></div>
<div style="left:690px;top:340px;width:56px;height:19px;background:#7f8785;border:1px solid #1e1e1e"></div>
<div style="left:691px;top:353px;width:0;height:0;border-bottom:5px solid #c9cdcb;border-right:5px solid transparent"></div>
<div style="left:1052px;top:340px;width:25px;height:19px;background:#7f8785;border:1px solid #1e1e1e"></div>
<div style="left:1053px;top:353px;width:0;height:0;border-bottom:5px solid #c9cdcb;border-right:5px solid transparent"></div>
<div style="left:1142px;top:340px;width:24px;height:19px;background:#7f8785;border:1px solid #1e1e1e"></div>
<div style="left:1143px;top:353px;width:0;height:0;border-bottom:5px solid #c9cdcb;border-right:5px solid transparent"></div>
<div style="left:663px;top:365px;width:46px;height:19px;background:#7f8785;border:1px solid #1e1e1e"></div>
<div style="left:665px;top:378px;width:0;height:0;border-bottom:5px solid #c9cdcb;border-right:5px solid transparent"></div>
<div style="left:1004px;top:365px;width:69px;height:19px;background:#7f8785;border:1px solid #1e1e1e"></div>
<div style="left:1005px;top:378px;width:0;height:0;border-bottom:5px solid #c9cdcb;border-right:5px solid transparent"></div>
<div style="left:707px;top:415px;width:82px;height:19px;background:#7f8785;border:1px solid #1e1e1e"></div>
<div style="left:708px;top:428px;width:0;height:0;border-bottom:5px solid #c9cdcb;border-right:5px solid transparent"></div>
<div style="left:1097px;top:415px;width:134px;height:19px;background:#7f8785;border:1px solid #1e1e1e"></div>
<div style="left:1098px;top:428px;width:0;height:0;border-bottom:5px solid #c9cdcb;border-right:5px solid transparent"></div>
<div style="left:760px;top:440px;width:67px;height:19px;background:#7f8785;border:1px solid #1e1e1e"></div>
<div style="left:761px;top:453px;width:0;height:0;border-bottom:5px solid #c9cdcb;border-right:5px solid transparent"></div>
<div style="left:940px;top:440px;width:99px;height:19px;background:#7f8785;border:1px solid #1e1e1e"></div>
<div style="left:941px;top:453px;width:0;height:0;border-bottom:5px solid #c9cdcb;border-right:5px solid transparent"></div>
<div style="left:855px;top:490px;width:86px;height:19px;background:#7f8785;border:1px solid #1e1e1e"></div>
<div style="left:856px;top:503px;width:0;height:0;border-bottom:5px solid #c9cdcb;border-right:5px solid transparent"></div>
<div style="left:988px;top:490px;width:184px;height:19px;background:#7f8785;border:1px solid #1e1e1e"></div>
<div style="left:989px;top:503px;width:0;height:0;border-bottom:5px solid #c9cdcb;border-right:5px solid transparent"></div>
<div style="left:1211px;top:490px;width:71px;height:19px;background:#7f8785;border:1px solid #1e1e1e"></div>
<div style="left:1212px;top:503px;width:0;height:0;border-bottom:5px solid #c9cdcb;border-right:5px solid transparent"></div>
<div style="left:792px;top:515px;width:72px;height:19px;background:#7f8785;border:1px solid #1e1e1e"></div>
<div style="left:793px;top:528px;width:0;height:0;border-bottom:5px solid #c9cdcb;border-right:5px solid transparent"></div>
<div style="left:1054px;top:515px;width:111px;height:19px;background:#7f8785;border:1px solid #1e1e1e"></div>
<div style="left:1055px;top:528px;width:0;height:0;border-bottom:5px solid #c9cdcb;border-right:5px solid transparent"></div>
<div style="left:781px;top:540px;width:98px;height:19px;background:#7f8785;border:1px solid #1e1e1e"></div>
<div style="left:782px;top:553px;width:0;height:0;border-bottom:5px solid #c9cdcb;border-right:5px solid transparent"></div>
<div style="left:914px;top:540px;width:61px;height:19px;background:#7f8785;border:1px solid #1e1e1e"></div>
<div style="left:915px;top:553px;width:0;height:0;border-bottom:5px solid #c9cdcb;border-right:5px solid transparent"></div>
<div style="left:1165px;top:540px;width:101px;height:19px;background:#7f8785;border:1px solid #1e1e1e"></div>
<div style="left:1166px;top:553px;width:0;height:0;border-bottom:5px solid #c9cdcb;border-right:5px solid transparent"></div>
<div style="left:823px;top:565px;width:108px;height:19px;background:#7f8785;border:1px solid #1e1e1e"></div>
<div style="left:824px;top:578px;width:0;height:0;border-bottom:5px solid #c9cdcb;border-right:5px solid transparent"></div>
<div style="left:983px;top:565px;width:99px;height:19px;background:#7f8785;border:1px solid #1e1e1e"></div>
<div style="left:984px;top:578px;width:0;height:0;border-bottom:5px solid #c9cdcb;border-right:5px solid transparent"></div>
<div style="left:918px;top:590px;width:108px;height:19px;background:#7f8785;border:1px solid #1e1e1e"></div>
<div style="left:919px;top:603px;width:0;height:0;border-bottom:5px solid #c9cdcb;border-right:5px solid transparent"></div>
<div style="left:1254px;top:590px;width:19px;height:19px;background:#7f8785;border:1px solid #1e1e1e"></div>
<div style="left:1255px;top:603px;width:0;height:0;border-bottom:5px solid #c9cdcb;border-right:5px solid transparent"></div>
<div style="left:862px;top:667px;width:296px;height:19px;background:#7f8785;border:1px solid #1e1e1e"></div>
<div style="left:863px;top:680px;width:0;height:0;border-bottom:5px solid #c9cdcb;border-right:5px solid transparent"></div>
<div style="left:872px;top:692px;width:356px;height:19px;background:#7f8785;border:1px solid #1e1e1e"></div>
<div style="left:873px;top:705px;width:0;height:0;border-bottom:5px solid #c9cdcb;border-right:5px solid transparent"></div>
<div style="left:897px;top:717px;width:286px;height:19px;background:#7f8785;border:1px solid #1e1e1e"></div>
<div style="left:898px;top:730px;width:0;height:0;border-bottom:5px solid #c9cdcb;border-right:5px solid transparent"></div>
<div style="left:969px;top:742px;width:196px;height:19px;background:#7f8785;border:1px solid #1e1e1e"></div>
<div style="left:970px;top:755px;width:0;height:0;border-bottom:5px solid #c9cdcb;border-right:5px solid transparent"></div>
<div style="left:665px;top:99px;width:4px;height:2px;background:#151515"></div>
<div style="left:749px;top:98px;width:5px;height:3px;background:#151515"></div>
<div style="left:813px;top:98px;width:16px;height:2px;background:#151515"></div>
<div style="left:813px;top:101px;width:16px;height:1px;background:#151515"></div>
<div style="left:813px;top:97px;width:1px;height:6px;background:#151515"></div>
<div style="left:855px;top:98px;width:24px;height:3px;background:#151515"></div>
<div style="left:919px;top:96px;width:4px;height:1px;background:#151515"></div>
<div style="left:924px;top:98px;width:6px;height:1px;background:#151515"></div>
<div style="left:931px;top:97px;width:3px;height:1px;background:#151515"></div>
<div style="left:974px;top:98px;width:8px;height:1px;background:#151515"></div>
<div style="left:983px;top:99px;width:4px;height:1px;background:#151515"></div>
<div style="left:990px;top:97px;width:1px;height:1px;background:#151515"></div>
<div style="left:1029px;top:96px;width:6px;height:1px;background:#151515"></div>
<div style="left:1035px;top:98px;width:6px;height:1px;background:#151515"></div>
<div style="left:1041px;top:98px;width:17px;height:1px;background:#151515"></div>
<div style="left:1080px;top:98px;width:4px;height:2px;background:#151515"></div>
<div style="left:1089px;top:98px;width:13px;height:1px;background:#151515"></div>
<div style="left:1089px;top:96px;width:1px;height:4px;background:#151515"></div>
<div style="left:1094px;top:96px;width:6px;height:1px;background:#151515"></div>
<div style="left:1129px;top:95px;width:4px;height:2px;background:#151515"></div>
<div style="left:1175px;top:97px;width:7px;height:4px;background:#151515"></div>
<div style="left:1182px;top:98px;width:6px;height:3px;background:#151515"></div>
<div style="left:1188px;top:99px;width:7px;height:2px;background:#151515"></div>
<div style="left:1189px;top:95px;width:1px;height:1px;background:#151515"></div>
<div style="left:1217px;top:96px;width:2px;height:5px;background:#151515"></div>
<div style="left:1219px;top:100px;width:25px;height:1px;background:#151515"></div>
<div style="left:1227px;top:97px;width:7px;height:1px;background:#151515"></div>
<div style="left:1234px;top:98px;width:10px;height:1px;background:#151515"></div>
<div style="left:696px;top:146px;width:17px;height:1px;background:#151515"></div>
<div style="left:705px;top:145px;width:2px;height:1px;background:#151515"></div>
<div style="left:716px;top:145px;width:2px;height:1px;background:#151515"></div>
<div style="left:770px;top:146px;width:8px;height:1px;background:#151515"></div>
<div style="left:780px;top:145px;width:3px;height:1px;background:#151515"></div>
<div style="left:784px;top:146px;width:9px;height:1px;background:#151515"></div>
<div style="left:829px;top:146px;width:8px;height:1px;background:#151515"></div>
<div style="left:841px;top:146px;width:25px;height:1px;background:#151515"></div>
<div style="left:873px;top:146px;width:21px;height:1px;background:#151515"></div>
<div style="left:894px;top:146px;width:8px;height:2px;background:#151515"></div>
<div style="left:947px;top:150px;width:4px;height:1px;background:#151515"></div>
<div style="left:954px;top:149px;width:21px;height:1px;background:#151515"></div>
<div style="left:976px;top:149px;width:10px;height:1px;background:#151515"></div>
<div style="left:990px;top:147px;width:14px;height:1px;background:#151515"></div>
<div style="left:1020px;top:151px;width:5px;height:1px;background:#151515"></div>
<div style="left:1028px;top:150px;width:17px;height:1px;background:#151515"></div>
<div style="left:1068px;top:149px;width:22px;height:1px;background:#151515"></div>
<div style="left:1092px;top:150px;width:12px;height:1px;background:#151515"></div>
<div style="left:1108px;top:148px;width:7px;height:1px;background:#151515"></div>
<div style="left:1122px;top:146px;width:4px;height:1px;background:#151515"></div>
<div style="left:1197px;top:150px;width:2px;height:1px;background:#151515"></div>
<div style="left:1201px;top:151px;width:32px;height:1px;background:#151515"></div>
<div style="left:1237px;top:151px;width:8px;height:1px;background:#151515"></div>
<div style="left:1245px;top:150px;width:17px;height:1px;background:#151515"></div>
<div style="left:966px;top:173px;width:7px;height:1px;background:#151515"></div>
<div style="left:665px;top:226px;width:275px;height:1px;background:#151515"></div>
<div style="left:1110px;top:218px;width:66px;height:1px;background:#151515"></div>
<div style="left:754px;top:300px;width:3px;height:1px;background:#151515"></div>
<div style="left:1091px;top:300px;width:2px;height:1px;background:#151515"></div>
<div style="left:1194px;top:299px;width:2px;height:2px;background:#151515"></div>
<div style="left:723px;top:324px;width:22px;height:1px;background:#151515"></div>
<div style="left:1053px;top:324px;width:22px;height:1px;background:#151515"></div>
<div style="left:1143px;top:324px;width:22px;height:1px;background:#151515"></div>
<div style="left:723px;top:349px;width:19px;height:1px;background:#151515"></div>
<div style="left:1053px;top:349px;width:19px;height:1px;background:#151515"></div>
<div style="left:1143px;top:349px;width:18px;height:1px;background:#151515"></div>
<div style="left:681px;top:370px;width:3px;height:1px;background:#151515"></div>
<div style="left:1032px;top:378px;width:2px;height:1px;background:#151515"></div>
<div style="left:1046px;top:375px;width:3px;height:1px;background:#151515"></div>
<div style="left:732px;top:428px;width:24px;height:1px;background:#151515"></div>
<div style="left:1206px;top:424px;width:2px;height:1px;background:#151515"></div>
<div style="left:1214px;top:421px;width:2px;height:1px;background:#151515"></div>
<div style="left:799px;top:448px;width:7px;height:1px;background:#151515"></div>
<div style="left:1003px;top:450px;width:10px;height:1px;background:#151515"></div>
<div style="left:877px;top:499px;width:36px;height:1px;background:#151515"></div>
<div style="left:1064px;top:504px;width:5px;height:1px;background:#151515"></div>
<div style="left:1142px;top:504px;width:2px;height:1px;background:#151515"></div>
<div style="left:1251px;top:496px;width:15px;height:1px;background:#151515"></div>
<div style="left:824px;top:524px;width:28px;height:1px;background:#151515"></div>
<div style="left:1142px;top:524px;width:14px;height:1px;background:#151515"></div>
<div style="left:825px;top:546px;width:2px;height:1px;background:#151515"></div>
<div style="left:957px;top:549px;width:10px;height:1px;background:#151515"></div>
<div style="left:1251px;top:554px;width:4px;height:1px;background:#151515"></div>
<div style="left:855px;top:574px;width:21px;height:1px;background:#151515"></div>
<div style="left:993px;top:571px;width:62px;height:1px;background:#151515"></div>
<div style="left:993px;top:575px;width:62px;height:1px;background:#151515"></div>
<div style="left:960px;top:597px;width:50px;height:1px;background:#151515"></div>
<div style="left:1264px;top:597px;width:5px;height:1px;background:#151515"></div>
<div style="left:938px;top:673px;width:217px;height:1px;background:#151515"></div>
<div style="left:1054px;top:671px;width:32px;height:2px;background:#151515"></div>
<div style="left:1091px;top:672px;width:41px;height:2px;background:#151515"></div>
<div style="left:983px;top:676px;width:102px;height:1px;background:#151515"></div>
<div style="left:901px;top:698px;width:311px;height:1px;background:#151515"></div>
<div style="left:1003px;top:724px;width:129px;height:1px;background:#151515"></div>
<div style="left:1043px;top:751px;width:97px;height:1px;background:#151515"></div>
<div style="left:665px;top:124px;width:4px;height:2px;background:#151515"></div>
<div style="left:749px;top:123px;width:5px;height:3px;background:#151515"></div>
<div style="left:813px;top:123px;width:16px;height:2px;background:#151515"></div>
<div style="left:813px;top:126px;width:16px;height:1px;background:#151515"></div>
<div style="left:813px;top:122px;width:1px;height:6px;background:#151515"></div>
<div style="left:855px;top:123px;width:24px;height:3px;background:#151515"></div>
<div style="left:919px;top:121px;width:4px;height:1px;background:#151515"></div>
<div style="left:924px;top:123px;width:6px;height:1px;background:#151515"></div>
<div style="left:931px;top:122px;width:3px;height:1px;background:#151515"></div>
<div style="left:974px;top:123px;width:8px;height:1px;background:#151515"></div>
<div style="left:983px;top:124px;width:4px;height:1px;background:#151515"></div>
<div style="left:990px;top:122px;width:1px;height:1px;background:#151515"></div>
<div style="left:1029px;top:121px;width:6px;height:1px;background:#151515"></div>
<div style="left:1035px;top:123px;width:6px;height:1px;background:#151515"></div>
<div style="left:1041px;top:123px;width:17px;height:1px;background:#151515"></div>
<div style="left:1080px;top:123px;width:4px;height:2px;background:#151515"></div>
<div style="left:1089px;top:123px;width:13px;height:1px;background:#151515"></div>
<div style="left:1089px;top:121px;width:1px;height:4px;background:#151515"></div>
<div style="left:1094px;top:121px;width:6px;height:1px;background:#151515"></div>
<div style="left:1129px;top:120px;width:4px;height:2px;background:#151515"></div>
<div style="left:1175px;top:122px;width:7px;height:4px;background:#151515"></div>
<div style="left:1182px;top:123px;width:6px;height:3px;background:#151515"></div>
<div style="left:1188px;top:124px;width:7px;height:2px;background:#151515"></div>
<div style="left:1189px;top:120px;width:1px;height:1px;background:#151515"></div>
<div style="left:1217px;top:121px;width:2px;height:5px;background:#151515"></div>
<div style="left:1219px;top:125px;width:25px;height:1px;background:#151515"></div>
<div style="left:1227px;top:122px;width:7px;height:1px;background:#151515"></div>
<div style="left:1234px;top:123px;width:10px;height:1px;background:#151515"></div>
<svg style="position:absolute;left:1174px;top:718px" width="8" height="17"><polygon points="1,0 8,0 8,8.5" fill="#4a4a4a"/><polygon points="1,17 8,17 8,8.5" fill="#4a4a4a"/></svg>
<div style="left:665px;top:251px;width:275px;height:1px;background:#58785f"></div>
<svg style="position:absolute;left:664px;top:630px" width="819" height="35"><polyline points="0,11.5 2,11.5 4,11.5 6,11.5 8,11.5 10,11.5 12,11.5 14,11.5 16,11.5 18,11.5 20,11.5 22,11.5 24,11.5 26,11.5 28,11.5 30,11.5 32,11.5 34,11.5 36,11.5 38,11.5 40,11.5 42,11.5 44,11.5 46,11.5 48,11.5 50,11.5 52,11.5 54,11.5 56,11.5 58,11.5 60,11.5 62,11.5 64,11.5 66,11.5 68,11.5 70,11.5 72,11.5 74,11.5 76,11.5 78,11.5 80,11.5 82,11.5 84,11.5 86,11.5 88,11.5 90,11.5 92,11.5 94,11.5 96,11.5 98,11.5 100,11.5 102,11.5 104,11.5 106,11.5 108,11.5 110,11.5 112,11.5 114,11.5 116,11.5 118,11.5 120,11.5 122,11.5 124,11.5 126,11.5 128,11.5 130,11.2 132,11.5 134,11.7 136,12.0 138,12.2 140,12.4 142,12.7 144,12.9 146,13.2 148,13.4 150,13.7 152,13.9 154,14.1 156,14.4 158,14.6 160,14.9 162,15.1 164,15.3 166,15.6 168,15.8 170,16.1 172,16.3 174,16.5 176,16.8 178,17.0 180,17.3 182,17.5 184,17.8 186,18.0 188,18.2 190,18.5 192,18.7 194,19.0 196,19.2 198,19.4 200,19.7 202,19.9 204,20.2 206,20.4 208,20.6 210,20.9 212,21.1 214,21.4 216,21.6 218,21.9 220,22.1 222,22.3 224,22.6 226,22.7 228,22.7 230,22.7 232,22.7 234,22.3 236,21.9 238,21.4 240,21.0 242,20.6 244,20.2 246,19.8 248,19.4 250,18.9 252,18.5 254,18.1 256,17.7 258,17.3 260,16.8 262,16.4 264,16.0 266,15.6 268,15.2 270,14.8 272,14.3 274,13.9 276,13.5 278,13.4 280,13.2 282,13.1 284,12.9 286,12.8 288,12.6 290,12.5 292,12.4 294,12.2 296,12.1 298,11.9 300,11.8 302,11.6 304,11.5 306,11.4 308,11.2 310,11.1 312,11.5 314,11.5 316,11.5 318,11.5 320,11.5 322,11.5 324,11.5 326,11.5 328,11.5 330,11.5 332,11.5 334,11.5 336,11.5 338,11.5 340,11.5 342,11.5 344,11.5 346,11.5 348,11.5 350,11.5 352,11.5 354,11.5 356,11.5 358,11.5 360,11.5 362,11.5 364,11.5 366,11.5 368,11.5 370,11.5 372,11.5 374,11.5 376,11.5 378,11.5 380,11.5 382,11.5 384,11.5 386,11.5 388,11.5 390,11.5 392,11.5 394,11.5 396,11.5 398,11.5 400,11.5 402,11.5 404,11.5 406,11.5 408,11.5 410,11.5 412,11.5 414,11.5 416,11.5 418,11.5 420,11.5 422,11.5 424,11.5 426,11.5 428,11.5 430,11.5 432,11.5 434,11.5 436,11.5 438,11.5 440,11.5 442,11.5 444,11.5 446,11.5 448,11.5 450,11.5 452,11.5 454,11.5 456,11.5 458,11.5 460,11.5 462,11.5 464,11.5 466,11.5 468,11.5 470,11.5 472,11.5 474,11.5 476,11.5 478,11.5 480,11.5 482,11.5 484,11.5 486,11.5 488,11.5 490,11.5 492,11.5 494,11.5 496,11.5 498,11.5 500,11.5 502,11.5 504,11.5 506,11.5 508,11.5 510,11.5 512,11.5 514,11.5 516,11.5 518,11.5 520,11.5 522,11.5 524,11.5 526,11.5 528,11.5 530,11.5 532,11.5 534,11.5 536,11.5 538,11.5 540,11.5 542,11.5 544,11.5 546,11.5 548,11.5 550,11.5 552,11.5 554,11.5 556,11.5 558,11.5 560,11.5 562,11.5 564,11.5 566,11.5 568,11.5 570,11.5 572,11.5 574,11.5 576,11.5 578,11.5 580,11.5 582,11.5 584,11.5 586,11.5 588,11.5 590,11.5 592,11.5 594,11.5 596,11.5 598,11.5 600,11.5 602,11.5 604,11.5 606,11.5 608,11.5 610,11.5 612,11.5 614,11.5 616,11.5 618,11.5 620,11.5 622,11.5 624,11.5 626,11.5 628,11.5 630,11.5 632,11.5 634,11.5 636,11.5 638,11.5 640,11.5 642,11.5 644,11.5 646,11.5 648,11.5 650,11.5 652,11.5 654,11.5 656,11.5 658,11.5 660,11.5 662,11.5 664,11.5 666,11.5 668,11.5 670,11.5 672,11.5 674,11.5 676,11.5 678,11.5 680,11.5 682,11.5 684,11.5 686,11.5 688,11.5 690,11.5 692,11.5 694,11.5 696,11.5 698,11.5 700,11.5 702,11.5 704,11.5 706,11.5 708,11.5 710,11.5 712,11.5 714,11.5 716,11.5 718,11.5 720,11.5 722,11.5 724,11.5 726,11.5 728,11.5 730,11.5 732,11.5 734,11.5 736,11.5 738,11.5 740,11.5 742,11.5 744,11.5 746,11.5 748,11.5 750,11.5 752,11.5 754,11.5 756,11.5 758,11.5 760,11.5 762,11.5 764,11.5 766,11.5 768,11.5 770,11.5 772,11.5 774,11.5 776,11.5 778,11.5 780,11.5 782,11.5 784,11.5 786,11.5 788,11.5 790,11.5 792,11.5 794,11.5 796,11.5 798,11.5 800,11.5 802,11.5 804,11.5 806,11.5 808,11.5 810,11.5 812,11.5 814,11.5 816,11.5 818,11.5" fill="none" stroke="#5a9a68" stroke-width="1"/><circle cx="128" cy="11.5" r="2" fill="none" stroke="#3f8a4e" stroke-width="1"/><circle cx="133" cy="11.6" r="2" fill="none" stroke="#3f8a4e" stroke-width="1"/><circle cx="138" cy="12.2" r="2" fill="none" stroke="#3f8a4e" stroke-width="1"/><circle cx="143" cy="12.8" r="2" fill="none" stroke="#3f8a4e" stroke-width="1"/><circle cx="148" cy="13.4" r="2" fill="none" stroke="#3f8a4e" stroke-width="1"/><circle cx="153" cy="14.0" r="2" fill="none" stroke="#3f8a4e" stroke-width="1"/><circle cx="158" cy="14.6" r="2" fill="none" stroke="#3f8a4e" stroke-width="1"/><circle cx="163" cy="15.2" r="2" fill="none" stroke="#3f8a4e" stroke-width="1"/><circle cx="168" cy="15.8" r="2" fill="none" stroke="#3f8a4e" stroke-width="1"/><circle cx="173" cy="16.4" r="2" fill="none" stroke="#3f8a4e" stroke-width="1"/><circle cx="178" cy="17.0" r="2" fill="none" stroke="#3f8a4e" stroke-width="1"/><circle cx="183" cy="17.6" r="2" fill="none" stroke="#3f8a4e" stroke-width="1"/><circle cx="188" cy="18.2" r="2" fill="none" stroke="#3f8a4e" stroke-width="1"/><circle cx="193" cy="18.8" r="2" fill="none" stroke="#3f8a4e" stroke-width="1"/><circle cx="198" cy="19.4" r="2" fill="none" stroke="#3f8a4e" stroke-width="1"/><circle cx="203" cy="20.0" r="2" fill="none" stroke="#3f8a4e" stroke-width="1"/><circle cx="208" cy="20.6" r="2" fill="none" stroke="#3f8a4e" stroke-width="1"/><circle cx="213" cy="21.3" r="2" fill="none" stroke="#3f8a4e" stroke-width="1"/><circle cx="218" cy="21.9" r="2" fill="none" stroke="#3f8a4e" stroke-width="1"/><circle cx="223" cy="22.5" r="2" fill="none" stroke="#3f8a4e" stroke-width="1"/><circle cx="228" cy="22.7" r="2" fill="none" stroke="#3f8a4e" stroke-width="1"/><circle cx="233" cy="22.5" r="2" fill="none" stroke="#3f8a4e" stroke-width="1"/><circle cx="238" cy="21.4" r="2" fill="none" stroke="#3f8a4e" stroke-width="1"/><circle cx="243" cy="20.4" r="2" fill="none" stroke="#3f8a4e" stroke-width="1"/><circle cx="248" cy="19.4" r="2" fill="none" stroke="#3f8a4e" stroke-width="1"/><circle cx="253" cy="18.3" r="2" fill="none" stroke="#3f8a4e" stroke-width="1"/><circle cx="258" cy="17.3" r="2" fill="none" stroke="#3f8a4e" stroke-width="1"/><circle cx="263" cy="16.2" r="2" fill="none" stroke="#3f8a4e" stroke-width="1"/><circle cx="268" cy="15.2" r="2" fill="none" stroke="#3f8a4e" stroke-width="1"/><circle cx="273" cy="14.1" r="2" fill="none" stroke="#3f8a4e" stroke-width="1"/><circle cx="278" cy="13.4" r="2" fill="none" stroke="#3f8a4e" stroke-width="1"/><circle cx="283" cy="13.0" r="2" fill="none" stroke="#3f8a4e" stroke-width="1"/><circle cx="288" cy="12.6" r="2" fill="none" stroke="#3f8a4e" stroke-width="1"/><circle cx="293" cy="12.3" r="2" fill="none" stroke="#3f8a4e" stroke-width="1"/><circle cx="298" cy="11.9" r="2" fill="none" stroke="#3f8a4e" stroke-width="1"/><circle cx="303" cy="11.6" r="2" fill="none" stroke="#3f8a4e" stroke-width="1"/><circle cx="308" cy="11.2" r="2" fill="none" stroke="#3f8a4e" stroke-width="1"/></svg>
<div style="left:675px;top:84px;width:1px;height:669px;background:repeating-linear-gradient(#000 0 1px,transparent 1px 2px);opacity:.3"></div>
<div style="left:685px;top:84px;width:1px;height:669px;background:repeating-linear-gradient(#000 0 1px,transparent 1px 2px);opacity:.75"></div>
<div style="left:696px;top:84px;width:1px;height:669px;background:repeating-linear-gradient(#000 0 1px,transparent 1px 2px);opacity:.3"></div>
<div style="left:707px;top:84px;width:1px;height:669px;background:repeating-linear-gradient(#000 0 1px,transparent 1px 2px);opacity:.75"></div>
<div style="left:717px;top:84px;width:1px;height:669px;background:repeating-linear-gradient(#000 0 1px,transparent 1px 2px);opacity:.3"></div>
<div style="left:728px;top:84px;width:1px;height:669px;background:repeating-linear-gradient(#000 0 1px,transparent 1px 2px);opacity:.75"></div>
<div style="left:738px;top:84px;width:1px;height:669px;background:repeating-linear-gradient(#000 0 1px,transparent 1px 2px);opacity:.3"></div>
<div style="left:749px;top:84px;width:1px;height:669px;background:repeating-linear-gradient(#000 0 1px,transparent 1px 2px);opacity:.75"></div>
<div style="left:760px;top:84px;width:1px;height:669px;background:repeating-linear-gradient(#000 0 1px,transparent 1px 2px);opacity:.3"></div>
<div style="left:770px;top:84px;width:1px;height:669px;background:repeating-linear-gradient(#000 0 1px,transparent 1px 2px);opacity:.75"></div>
<div style="left:781px;top:84px;width:1px;height:669px;background:repeating-linear-gradient(#000 0 1px,transparent 1px 2px);opacity:.3"></div>
<div style="left:792px;top:84px;width:1px;height:669px;background:repeating-linear-gradient(#000 0 1px,transparent 1px 2px);opacity:.75"></div>
<div style="left:802px;top:84px;width:1px;height:669px;background:repeating-linear-gradient(#000 0 1px,transparent 1px 2px);opacity:.3"></div>
<div style="left:813px;top:84px;width:1px;height:669px;background:repeating-linear-gradient(#000 0 1px,transparent 1px 2px);opacity:.75"></div>
<div style="left:823px;top:84px;width:1px;height:669px;background:repeating-linear-gradient(#000 0 1px,transparent 1px 2px);opacity:.3"></div>
<div style="left:834px;top:84px;width:1px;height:669px;background:repeating-linear-gradient(#000 0 1px,transparent 1px 2px);opacity:.75"></div>
<div style="left:845px;top:84px;width:1px;height:669px;background:repeating-linear-gradient(#000 0 1px,transparent 1px 2px);opacity:.3"></div>
<div style="left:855px;top:84px;width:1px;height:669px;background:repeating-linear-gradient(#000 0 1px,transparent 1px 2px);opacity:.75"></div>
<div style="left:866px;top:84px;width:1px;height:669px;background:repeating-linear-gradient(#000 0 1px,transparent 1px 2px);opacity:.3"></div>
<div style="left:877px;top:84px;width:1px;height:669px;background:repeating-linear-gradient(#000 0 1px,transparent 1px 2px);opacity:.75"></div>
<div style="left:887px;top:84px;width:1px;height:669px;background:repeating-linear-gradient(#000 0 1px,transparent 1px 2px);opacity:.3"></div>
<div style="left:898px;top:84px;width:1px;height:669px;background:repeating-linear-gradient(#000 0 1px,transparent 1px 2px);opacity:.75"></div>
<div style="left:909px;top:84px;width:1px;height:669px;background:repeating-linear-gradient(#000 0 1px,transparent 1px 2px);opacity:.3"></div>
<div style="left:919px;top:84px;width:1px;height:669px;background:repeating-linear-gradient(#000 0 1px,transparent 1px 2px);opacity:.75"></div>
<div style="left:930px;top:84px;width:1px;height:669px;background:repeating-linear-gradient(#000 0 1px,transparent 1px 2px);opacity:.3"></div>
<div style="left:940px;top:84px;width:1px;height:669px;background:repeating-linear-gradient(#000 0 1px,transparent 1px 2px);opacity:.75"></div>
<div style="left:951px;top:84px;width:1px;height:669px;background:repeating-linear-gradient(#000 0 1px,transparent 1px 2px);opacity:.3"></div>
<div style="left:962px;top:84px;width:1px;height:669px;background:repeating-linear-gradient(#000 0 1px,transparent 1px 2px);opacity:.75"></div>
<div style="left:972px;top:84px;width:1px;height:669px;background:repeating-linear-gradient(#000 0 1px,transparent 1px 2px);opacity:.3"></div>
<div style="left:983px;top:84px;width:1px;height:669px;background:repeating-linear-gradient(#000 0 1px,transparent 1px 2px);opacity:.75"></div>
<div style="left:994px;top:84px;width:1px;height:669px;background:repeating-linear-gradient(#000 0 1px,transparent 1px 2px);opacity:.3"></div>
<div style="left:1004px;top:84px;width:1px;height:669px;background:repeating-linear-gradient(#000 0 1px,transparent 1px 2px);opacity:.75"></div>
<div style="left:1015px;top:84px;width:1px;height:669px;background:repeating-linear-gradient(#000 0 1px,transparent 1px 2px);opacity:.3"></div>
<div style="left:1025px;top:84px;width:1px;height:669px;background:repeating-linear-gradient(#000 0 1px,transparent 1px 2px);opacity:.75"></div>
<div style="left:1036px;top:84px;width:1px;height:669px;background:repeating-linear-gradient(#000 0 1px,transparent 1px 2px);opacity:.3"></div>
<div style="left:1047px;top:84px;width:1px;height:669px;background:repeating-linear-gradient(#000 0 1px,transparent 1px 2px);opacity:.75"></div>
<div style="left:1057px;top:84px;width:1px;height:669px;background:repeating-linear-gradient(#000 0 1px,transparent 1px 2px);opacity:.3"></div>
<div style="left:1068px;top:84px;width:1px;height:669px;background:repeating-linear-gradient(#000 0 1px,transparent 1px 2px);opacity:.75"></div>
<div style="left:1079px;top:84px;width:1px;height:669px;background:repeating-linear-gradient(#000 0 1px,transparent 1px 2px);opacity:.3"></div>
<div style="left:1089px;top:84px;width:1px;height:669px;background:repeating-linear-gradient(#000 0 1px,transparent 1px 2px);opacity:.75"></div>
<div style="left:1100px;top:84px;width:1px;height:669px;background:repeating-linear-gradient(#000 0 1px,transparent 1px 2px);opacity:.3"></div>
<div style="left:1111px;top:84px;width:1px;height:669px;background:repeating-linear-gradient(#000 0 1px,transparent 1px 2px);opacity:.75"></div>
<div style="left:1121px;top:84px;width:1px;height:669px;background:repeating-linear-gradient(#000 0 1px,transparent 1px 2px);opacity:.3"></div>
<div style="left:1132px;top:84px;width:1px;height:669px;background:repeating-linear-gradient(#000 0 1px,transparent 1px 2px);opacity:.75"></div>
<div style="left:1142px;top:84px;width:1px;height:669px;background:repeating-linear-gradient(#000 0 1px,transparent 1px 2px);opacity:.3"></div>
<div style="left:1153px;top:84px;width:1px;height:669px;background:repeating-linear-gradient(#000 0 1px,transparent 1px 2px);opacity:.75"></div>
<div style="left:1164px;top:84px;width:1px;height:669px;background:repeating-linear-gradient(#000 0 1px,transparent 1px 2px);opacity:.3"></div>
<div style="left:1174px;top:84px;width:1px;height:669px;background:repeating-linear-gradient(#000 0 1px,transparent 1px 2px);opacity:.75"></div>
<div style="left:1185px;top:84px;width:1px;height:669px;background:repeating-linear-gradient(#000 0 1px,transparent 1px 2px);opacity:.3"></div>
<div style="left:1196px;top:84px;width:1px;height:669px;background:repeating-linear-gradient(#000 0 1px,transparent 1px 2px);opacity:.75"></div>
<div style="left:1206px;top:84px;width:1px;height:669px;background:repeating-linear-gradient(#000 0 1px,transparent 1px 2px);opacity:.3"></div>
<div style="left:1217px;top:84px;width:1px;height:669px;background:repeating-linear-gradient(#000 0 1px,transparent 1px 2px);opacity:.75"></div>
<div style="left:1227px;top:84px;width:1px;height:669px;background:repeating-linear-gradient(#000 0 1px,transparent 1px 2px);opacity:.3"></div>
<div style="left:1238px;top:84px;width:1px;height:669px;background:repeating-linear-gradient(#000 0 1px,transparent 1px 2px);opacity:.75"></div>
<div style="left:1249px;top:84px;width:1px;height:669px;background:repeating-linear-gradient(#000 0 1px,transparent 1px 2px);opacity:.3"></div>
<div style="left:1259px;top:84px;width:1px;height:669px;background:repeating-linear-gradient(#000 0 1px,transparent 1px 2px);opacity:.75"></div>
<div style="left:1270px;top:84px;width:1px;height:669px;background:repeating-linear-gradient(#000 0 1px,transparent 1px 2px);opacity:.3"></div>
<div style="left:1281px;top:84px;width:1px;height:669px;background:repeating-linear-gradient(#000 0 1px,transparent 1px 2px);opacity:.75"></div>
<div style="left:1291px;top:84px;width:1px;height:669px;background:repeating-linear-gradient(#000 0 1px,transparent 1px 2px);opacity:.3"></div>
<div style="left:1302px;top:84px;width:1px;height:669px;background:repeating-linear-gradient(#000 0 1px,transparent 1px 2px);opacity:.75"></div>
<div style="left:1313px;top:84px;width:1px;height:669px;background:repeating-linear-gradient(#000 0 1px,transparent 1px 2px);opacity:.3"></div>
<div style="left:1323px;top:84px;width:1px;height:669px;background:repeating-linear-gradient(#000 0 1px,transparent 1px 2px);opacity:.75"></div>
<div style="left:1334px;top:84px;width:1px;height:669px;background:repeating-linear-gradient(#000 0 1px,transparent 1px 2px);opacity:.3"></div>
<div style="left:1344px;top:84px;width:1px;height:669px;background:repeating-linear-gradient(#000 0 1px,transparent 1px 2px);opacity:.75"></div>
<div style="left:1355px;top:84px;width:1px;height:669px;background:repeating-linear-gradient(#000 0 1px,transparent 1px 2px);opacity:.3"></div>
<div style="left:1366px;top:84px;width:1px;height:669px;background:repeating-linear-gradient(#000 0 1px,transparent 1px 2px);opacity:.75"></div>
<div style="left:1376px;top:84px;width:1px;height:669px;background:repeating-linear-gradient(#000 0 1px,transparent 1px 2px);opacity:.3"></div>
<div style="left:1387px;top:84px;width:1px;height:669px;background:repeating-linear-gradient(#000 0 1px,transparent 1px 2px);opacity:.75"></div>
<div style="left:1398px;top:84px;width:1px;height:669px;background:repeating-linear-gradient(#000 0 1px,transparent 1px 2px);opacity:.3"></div>
<div style="left:1408px;top:84px;width:1px;height:669px;background:repeating-linear-gradient(#000 0 1px,transparent 1px 2px);opacity:.75"></div>
<div style="left:1419px;top:84px;width:1px;height:669px;background:repeating-linear-gradient(#000 0 1px,transparent 1px 2px);opacity:.3"></div>
<div style="left:1429px;top:84px;width:1px;height:669px;background:repeating-linear-gradient(#000 0 1px,transparent 1px 2px);opacity:.75"></div>
<div style="left:1440px;top:84px;width:1px;height:669px;background:repeating-linear-gradient(#000 0 1px,transparent 1px 2px);opacity:.3"></div>
<div style="left:1451px;top:84px;width:1px;height:669px;background:repeating-linear-gradient(#000 0 1px,transparent 1px 2px);opacity:.75"></div>
<div style="left:1461px;top:84px;width:1px;height:669px;background:repeating-linear-gradient(#000 0 1px,transparent 1px 2px);opacity:.3"></div>
<div style="left:1472px;top:84px;width:1px;height:669px;background:repeating-linear-gradient(#000 0 1px,transparent 1px 2px);opacity:.75"></div>
<div style="left:723px;top:269px;width:22px;height:1px;background:#767676"></div>
<div style="left:680px;top:266px;width:3px;height:1px;background:#767676"></div>
<div style="left:754px;top:270px;width:3px;height:1px;background:#767676"></div>
<div style="left:1053px;top:269px;width:22px;height:1px;background:#767676"></div>
<div style="left:1143px;top:269px;width:22px;height:1px;background:#767676"></div>
<div style="left:1046px;top:266px;width:3px;height:1px;background:#767676"></div>
<div style="left:1032px;top:279px;width:2px;height:1px;background:#767676"></div>
<div style="left:1194px;top:267px;width:2px;height:1px;background:#767676"></div>
<div style="left:799px;top:392px;width:5px;height:1px;background:#767676"></div>
<div style="left:732px;top:402px;width:25px;height:1px;background:#767676"></div>
<div style="left:1003px;top:395px;width:9px;height:1px;background:#767676"></div>
<div style="left:824px;top:469px;width:28px;height:1px;background:#767676"></div>
<div style="left:877px;top:468px;width:36px;height:1px;background:#767676"></div>
<div style="left:856px;top:479px;width:20px;height:1px;background:#767676"></div>
<div style="left:960px;top:466px;width:95px;height:1px;background:#767676"></div>
<div style="left:993px;top:472px;width:62px;height:1px;background:#767676"></div>
<div style="left:1064px;top:475px;width:5px;height:1px;background:#767676"></div>
<div style="left:1142px;top:469px;width:14px;height:1px;background:#767676"></div>
<div style="left:1251px;top:463px;width:15px;height:1px;background:#767676"></div>
<div style="left:1248px;top:476px;width:6px;height:1px;background:#767676"></div>
<div style="left:1262px;top:474px;width:9px;height:1px;background:#767676"></div>
<div style="left:901px;top:618px;width:311px;height:1px;background:#767676"></div>
<div style="left:938px;top:617px;width:46px;height:1px;background:#767676"></div>
<div style="left:984px;top:617px;width:103px;height:3px;background:#767676"></div>
<div style="left:1090px;top:617px;width:65px;height:3px;background:#767676"></div>
<div style="left:1053px;top:615px;width:33px;height:1px;background:#767676"></div>
<div style="left:1091px;top:615px;width:40px;height:1px;background:#767676"></div>
<div style="left:955px;top:471px;width:7px;height:1px;background:#767676"></div>
<div style="left:823px;top:465px;width:2px;height:1px;background:#767676"></div>
<div style="left:664px;top:48px;width:1px;height:36px;background:#8a8a8a"></div>
<div class="t" style="left:668px;top:51px;font-size:11px;color:#8c8c8c">1.1</div>
<div style="left:668px;top:62px;width:43px;height:1px;background:#7a7a7a"></div>
<div class="t" style="left:668px;top:65px;font-size:11px;color:#8c8c8c">0:00.000</div>
<div style="left:675px;top:80px;width:1px;height:4px;background:#9c9c9c"></div>
<div style="left:685px;top:76px;width:1px;height:8px;background:#9c9c9c"></div>
<div style="left:696px;top:80px;width:1px;height:4px;background:#9c9c9c"></div>
<div style="left:707px;top:76px;width:1px;height:8px;background:#9c9c9c"></div>
<div style="left:717px;top:80px;width:1px;height:4px;background:#9c9c9c"></div>
<div style="left:728px;top:76px;width:1px;height:8px;background:#9c9c9c"></div>
<div style="left:738px;top:80px;width:1px;height:4px;background:#9c9c9c"></div>
<div style="left:749px;top:76px;width:1px;height:8px;background:#9c9c9c"></div>
<div style="left:760px;top:80px;width:1px;height:4px;background:#9c9c9c"></div>
<div style="left:770px;top:76px;width:1px;height:8px;background:#9c9c9c"></div>
<div style="left:781px;top:80px;width:1px;height:4px;background:#9c9c9c"></div>
<div style="left:792px;top:76px;width:1px;height:8px;background:#9c9c9c"></div>
<div style="left:802px;top:80px;width:1px;height:4px;background:#9c9c9c"></div>
<div style="left:813px;top:76px;width:1px;height:8px;background:#9c9c9c"></div>
<div style="left:823px;top:80px;width:1px;height:4px;background:#9c9c9c"></div>
<div style="left:834px;top:48px;width:1px;height:36px;background:#8a8a8a"></div>
<div class="t" style="left:838px;top:51px;font-size:11px;color:#8c8c8c">9.1</div>
<div style="left:838px;top:62px;width:43px;height:1px;background:#7a7a7a"></div>
<div class="t" style="left:838px;top:65px;font-size:11px;color:#8c8c8c">0:27.428</div>
<div style="left:845px;top:80px;width:1px;height:4px;background:#9c9c9c"></div>
<div style="left:855px;top:76px;width:1px;height:8px;background:#9c9c9c"></div>
<div style="left:866px;top:80px;width:1px;height:4px;background:#9c9c9c"></div>
<div style="left:877px;top:76px;width:1px;height:8px;background:#9c9c9c"></div>
<div style="left:887px;top:80px;width:1px;height:4px;background:#9c9c9c"></div>
<div style="left:898px;top:76px;width:1px;height:8px;background:#9c9c9c"></div>
<div style="left:909px;top:80px;width:1px;height:4px;background:#9c9c9c"></div>
<div style="left:919px;top:76px;width:1px;height:8px;background:#9c9c9c"></div>
<div style="left:930px;top:80px;width:1px;height:4px;background:#9c9c9c"></div>
<div style="left:940px;top:76px;width:1px;height:8px;background:#9c9c9c"></div>
<div style="left:951px;top:80px;width:1px;height:4px;background:#9c9c9c"></div>
<div style="left:962px;top:76px;width:1px;height:8px;background:#9c9c9c"></div>
<div style="left:972px;top:80px;width:1px;height:4px;background:#9c9c9c"></div>
<div style="left:983px;top:76px;width:1px;height:8px;background:#9c9c9c"></div>
<div style="left:994px;top:80px;width:1px;height:4px;background:#9c9c9c"></div>
<div style="left:1004px;top:48px;width:1px;height:36px;background:#8a8a8a"></div>
<div class="t" style="left:1008px;top:51px;font-size:11px;color:#8c8c8c">17.1</div>
<div style="left:1008px;top:62px;width:43px;height:1px;background:#7a7a7a"></div>
<div class="t" style="left:1008px;top:65px;font-size:11px;color:#8c8c8c">0:54.857</div>
<div style="left:1015px;top:80px;width:1px;height:4px;background:#9c9c9c"></div>
<div style="left:1025px;top:76px;width:1px;height:8px;background:#9c9c9c"></div>
<div style="left:1036px;top:80px;width:1px;height:4px;background:#9c9c9c"></div>
<div style="left:1047px;top:76px;width:1px;height:8px;background:#9c9c9c"></div>
<div style="left:1057px;top:80px;width:1px;height:4px;background:#9c9c9c"></div>
<div style="left:1068px;top:76px;width:1px;height:8px;background:#9c9c9c"></div>
<div style="left:1079px;top:80px;width:1px;height:4px;background:#9c9c9c"></div>
<div style="left:1089px;top:76px;width:1px;height:8px;background:#9c9c9c"></div>
<div style="left:1100px;top:80px;width:1px;height:4px;background:#9c9c9c"></div>
<div style="left:1111px;top:76px;width:1px;height:8px;background:#9c9c9c"></div>
<div style="left:1121px;top:80px;width:1px;height:4px;background:#9c9c9c"></div>
<div style="left:1132px;top:76px;width:1px;height:8px;background:#9c9c9c"></div>
<div style="left:1142px;top:80px;width:1px;height:4px;background:#9c9c9c"></div>
<div style="left:1153px;top:76px;width:1px;height:8px;background:#9c9c9c"></div>
<div style="left:1164px;top:80px;width:1px;height:4px;background:#9c9c9c"></div>
<div style="left:1174px;top:48px;width:1px;height:36px;background:#8a8a8a"></div>
<div class="t" style="left:1178px;top:51px;font-size:11px;color:#8c8c8c">25.1</div>
<div style="left:1178px;top:62px;width:43px;height:1px;background:#7a7a7a"></div>
<div class="t" style="left:1178px;top:65px;font-size:11px;color:#8c8c8c">1:22.285</div>
<div style="left:1185px;top:80px;width:1px;height:4px;background:#9c9c9c"></div>
<div style="left:1196px;top:76px;width:1px;height:8px;background:#9c9c9c"></div>
<div style="left:1206px;top:80px;width:1px;height:4px;background:#9c9c9c"></div>
<div style="left:1217px;top:76px;width:1px;height:8px;background:#9c9c9c"></div>
<div style="left:1227px;top:80px;width:1px;height:4px;background:#9c9c9c"></div>
<div style="left:1238px;top:76px;width:1px;height:8px;background:#9c9c9c"></div>
<div style="left:1249px;top:80px;width:1px;height:4px;background:#9c9c9c"></div>
<div style="left:1259px;top:76px;width:1px;height:8px;background:#9c9c9c"></div>
<div style="left:1270px;top:80px;width:1px;height:4px;background:#9c9c9c"></div>
<div style="left:1281px;top:76px;width:1px;height:8px;background:#9c9c9c"></div>
<div style="left:1291px;top:80px;width:1px;height:4px;background:#9c9c9c"></div>
<div style="left:1302px;top:76px;width:1px;height:8px;background:#9c9c9c"></div>
<div style="left:1313px;top:80px;width:1px;height:4px;background:#9c9c9c"></div>
<div style="left:1323px;top:76px;width:1px;height:8px;background:#9c9c9c"></div>
<div style="left:1334px;top:80px;width:1px;height:4px;background:#9c9c9c"></div>
<div style="left:1344px;top:48px;width:1px;height:36px;background:#8a8a8a"></div>
<div class="t" style="left:1348px;top:51px;font-size:11px;color:#8c8c8c">33.1</div>
<div style="left:1348px;top:62px;width:43px;height:1px;background:#7a7a7a"></div>
<div class="t" style="left:1348px;top:65px;font-size:11px;color:#8c8c8c">1:49.714</div>
<div style="left:1355px;top:80px;width:1px;height:4px;background:#9c9c9c"></div>
<div style="left:1366px;top:76px;width:1px;height:8px;background:#9c9c9c"></div>
<div style="left:1376px;top:80px;width:1px;height:4px;background:#9c9c9c"></div>
<div style="left:1387px;top:76px;width:1px;height:8px;background:#9c9c9c"></div>
<div style="left:1398px;top:80px;width:1px;height:4px;background:#9c9c9c"></div>
<div style="left:1408px;top:76px;width:1px;height:8px;background:#9c9c9c"></div>
<div style="left:1419px;top:80px;width:1px;height:4px;background:#9c9c9c"></div>
<div style="left:1429px;top:76px;width:1px;height:8px;background:#9c9c9c"></div>
<div style="left:1440px;top:80px;width:1px;height:4px;background:#9c9c9c"></div>
<div style="left:1451px;top:76px;width:1px;height:8px;background:#9c9c9c"></div>
<div style="left:1461px;top:80px;width:1px;height:4px;background:#9c9c9c"></div>
<div style="left:1472px;top:76px;width:1px;height:8px;background:#9c9c9c"></div>
<div style="left:1483px;top:80px;width:1px;height:4px;background:#9c9c9c"></div>
<div style="left:664px;top:24px;width:1px;height:17px;background:#8a8a8a"></div>
<div style="left:664px;top:41px;width:1px;height:7px;background:#151515"></div>
<div class="t" style="left:668px;top:28px;font-size:10px;color:#d0d0d0">70 4/4</div>
<div style="left:664px;top:84px;width:1px;height:669px;background:#111"></div>
<div style="left:1004px;top:50px;width:1px;height:703px;background:#4aa894"></div>
<svg style="position:absolute;left:995px;top:42px" width="19" height="11"><polygon points="1,1 17,1 9,9" fill="#2b7b6b" stroke="#56ae9c" stroke-width="1.2"/></svg>
<div style="left:1003px;top:89px;width:3px;height:2px;background:#4aa894"></div>
<div style="left:1003px;top:104px;width:3px;height:2px;background:#4aa894"></div>
<div style="left:1003px;top:114px;width:3px;height:2px;background:#4aa894"></div>
<div style="left:1003px;top:129px;width:3px;height:2px;background:#4aa894"></div>
<div style="left:1003px;top:139px;width:3px;height:2px;background:#4aa894"></div>
<div style="left:1003px;top:154px;width:3px;height:2px;background:#4aa894"></div>
<div style="left:1003px;top:164px;width:3px;height:2px;background:#4aa894"></div>
<div style="left:1003px;top:179px;width:3px;height:2px;background:#4aa894"></div>
<div style="left:1003px;top:441px;width:3px;height:2px;background:#4aa894"></div>
<div style="left:1003px;top:456px;width:3px;height:2px;background:#4aa894"></div>
<div style="left:1003px;top:491px;width:3px;height:2px;background:#4aa894"></div>
<div style="left:1003px;top:506px;width:3px;height:2px;background:#4aa894"></div>
<div style="left:1003px;top:566px;width:3px;height:2px;background:#4aa894"></div>
<div style="left:1003px;top:581px;width:3px;height:2px;background:#4aa894"></div>
<div style="left:1003px;top:591px;width:3px;height:2px;background:#4aa894"></div>
<div style="left:1003px;top:606px;width:3px;height:2px;background:#4aa894"></div>
<div style="left:1003px;top:668px;width:3px;height:2px;background:#4aa894"></div>
<div style="left:1003px;top:683px;width:3px;height:2px;background:#4aa894"></div>
<div style="left:1003px;top:693px;width:3px;height:2px;background:#4aa894"></div>
<div style="left:1003px;top:708px;width:3px;height:2px;background:#4aa894"></div>
<div style="left:1003px;top:718px;width:3px;height:2px;background:#4aa894"></div>
<div style="left:1003px;top:733px;width:3px;height:2px;background:#4aa894"></div>
<div style="left:1003px;top:743px;width:3px;height:2px;background:#4aa894"></div>
<div style="left:1003px;top:758px;width:3px;height:2px;background:#4aa894"></div>
<div style="left:0;top:753px;width:1483px;height:25px;background:#333"></div>
<div style="left:0;top:753px;width:656px;height:1px;background:#4f4f4f"></div>
<div class="t" style="left:-4px;top:756.5px;font-size:10.6px;color:#858585">bright piano [IO] none</div>
<div style="left:64px;top:775px;width:20px;height:20px;border-radius:50%;background:#1a1a1a"></div>
<div style="left:68px;top:777px;width:12px;height:12px;border-radius:50%;background:#8a4a40"></div>
<div style="left:98px;top:775px;width:18px;height:18px;border-radius:50%;background:#222"></div>
<div style="left:102px;top:777px;width:10px;height:10px;border-radius:3px;background:#eee"></div>
<div style="left:667px;top:757px;width:11px;height:11px;border-radius:50%;background:#111"></div>
<div style="left:670px;top:760px;width:0;height:0;border-top:2.5px solid transparent;border-bottom:2.5px solid transparent;border-right:4.5px solid #b8b8b8"></div>
<div style="left:684px;top:757px;width:102px;height:11px;border-radius:6px;background:#5a5a5a"></div>
<div style="left:687px;top:760px;width:5px;height:5px;border-radius:50%;background:#222"></div>
<div style="left:778px;top:760px;width:5px;height:5px;border-radius:50%;background:#222"></div>
<div style="left:734px;top:758px;width:2px;height:9px;background:#222"></div>
</body></html>
